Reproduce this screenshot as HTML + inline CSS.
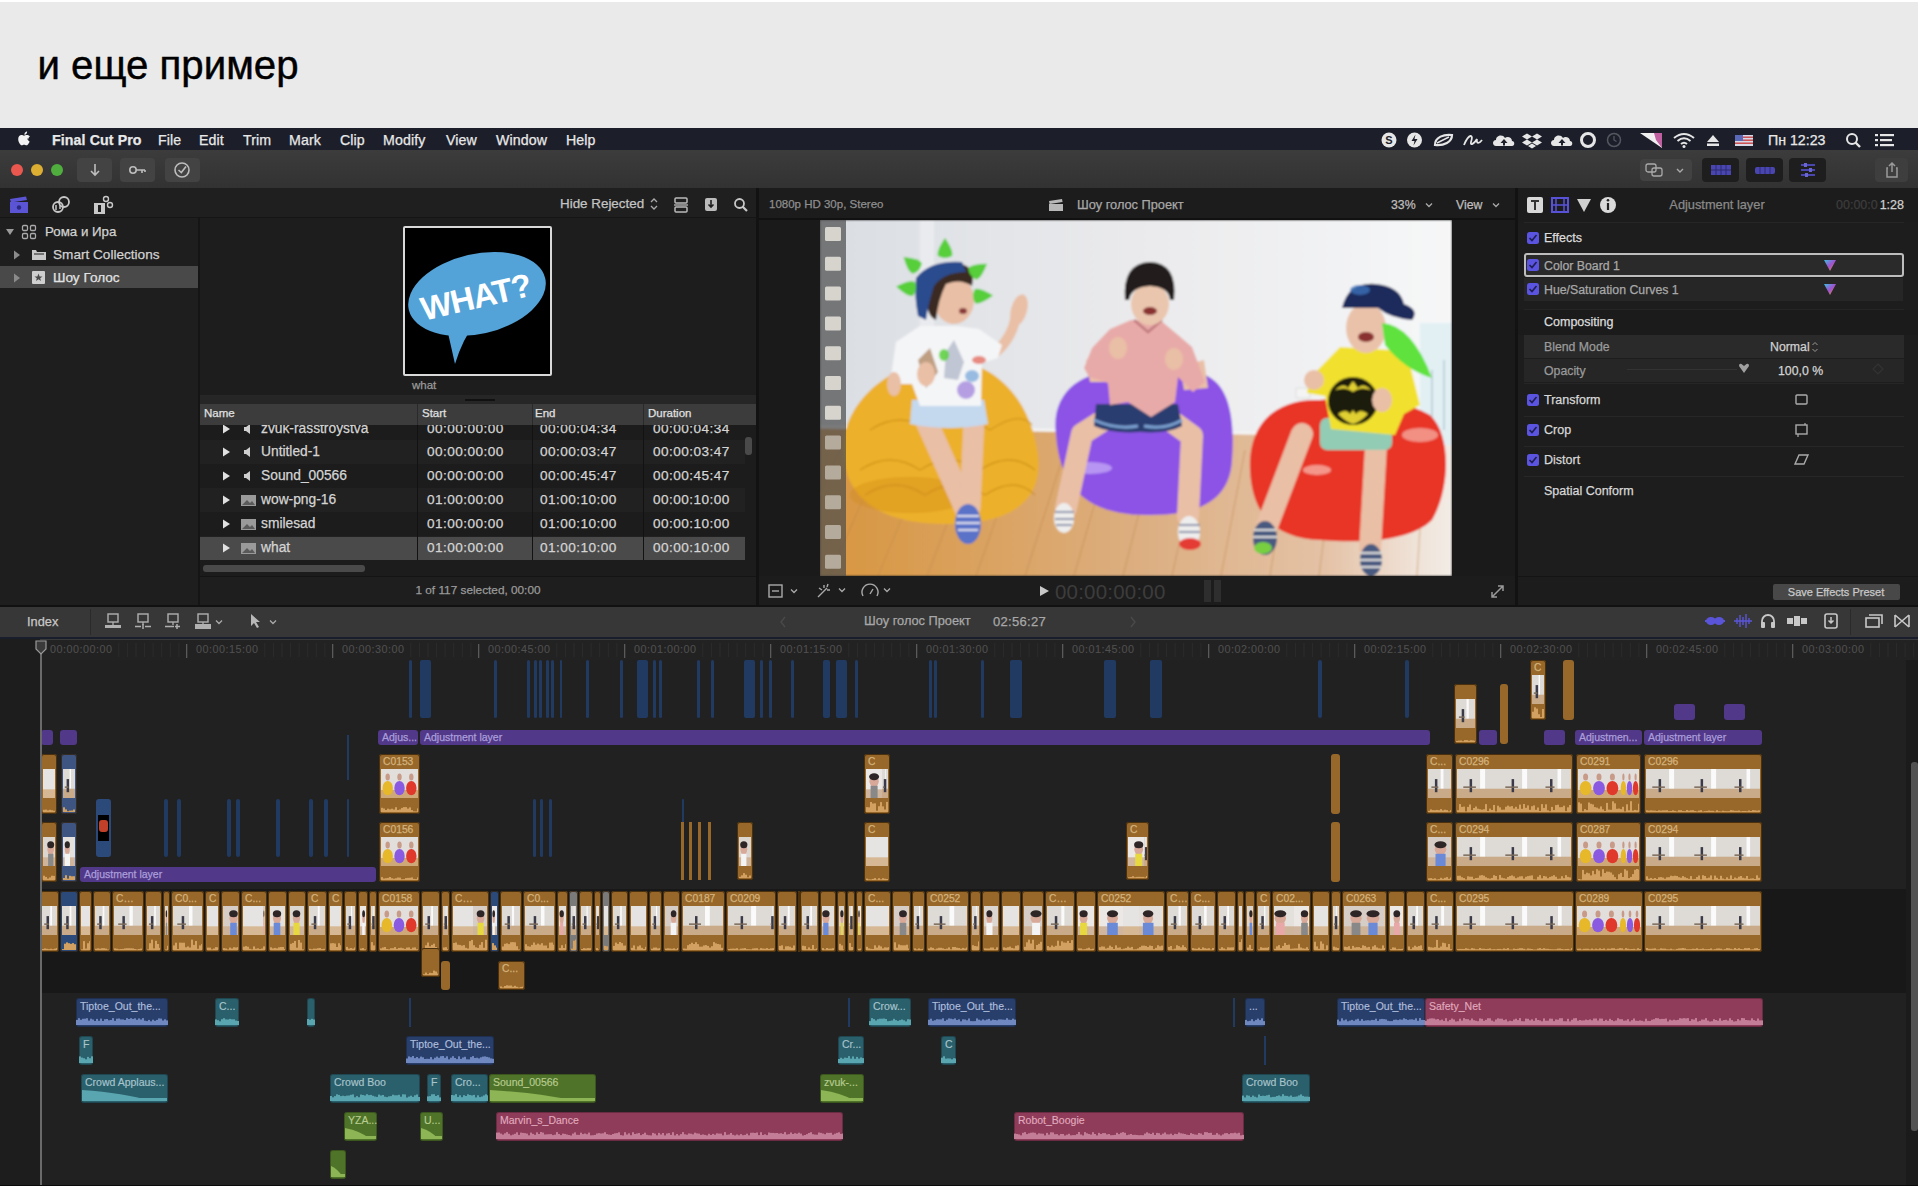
<!DOCTYPE html><html><head><meta charset="utf-8"><style>
*{margin:0;padding:0;box-sizing:border-box}
html,body{width:1922px;height:1188px;overflow:hidden;background:#fff}
body{position:relative;font-family:"Liberation Sans",sans-serif}
div{position:absolute}
.t{white-space:nowrap;line-height:1;-webkit-text-stroke:0.25px currentColor}

</style></head><body>
<div style="left:0px;top:2px;width:1918px;height:126px;background:#eaeaea"></div>
<div class="t hd" style="left:37.5px;top:45.5px;font-size:40.2px;color:#000;-webkit-text-stroke:0.45px #000">и еще пример</div>
<div style="left:0px;top:128px;width:1918px;height:1058px;background:#1e1e1e"></div>
<div style="left:0px;top:128px;width:1918px;height:22px;background:#1c1f2a"></div>
<svg style="position:absolute;left:17px;top:130px;" width="16" height="18" viewBox="0 0 16 18"><path d="M11.2 9.6c0-2 1.6-2.9 1.7-3-0.9-1.4-2.4-1.6-2.9-1.6-1.2-0.1-2.4 0.7-3 0.7-0.6 0-1.6-0.7-2.6-0.7C2.9 5 1.2 6.3 1.2 9c0 1.7 0.6 3.4 1.4 4.5 0.7 1 1.3 1.8 2.2 1.8 0.9 0 1.200-0.6 2.300-0.6 1.1 0 1.400 0.6 2.300 0.6 1 0 1.600-0.9 2.200-1.800 0.700-1 1-2 1-2.100-0.100 0-2.400-0.900-2.400-3.600zM9.4 3.700c0.500-0.600 0.800-1.400 0.700-2.200-0.700 0-1.500 0.500-2 1.100-0.400 0.500-0.800 1.300-0.700 2.100 0.800 0.100 1.500-0.400 2-1z" fill="#f2f2f2"/></svg>
<div class="t" style="left:52px;top:132.5px;font-size:14.2px;color:#e8e8e8;font-weight:bold;letter-spacing:0.1px">Final Cut Pro</div>
<div class="t" style="left:158px;top:132.5px;font-size:14.2px;color:#e8e8e8;font-weight:normal;letter-spacing:0.1px">File</div>
<div class="t" style="left:199px;top:132.5px;font-size:14.2px;color:#e8e8e8;font-weight:normal;letter-spacing:0.1px">Edit</div>
<div class="t" style="left:243px;top:132.5px;font-size:14.2px;color:#e8e8e8;font-weight:normal;letter-spacing:0.1px">Trim</div>
<div class="t" style="left:289px;top:132.5px;font-size:14.2px;color:#e8e8e8;font-weight:normal;letter-spacing:0.1px">Mark</div>
<div class="t" style="left:340px;top:132.5px;font-size:14.2px;color:#e8e8e8;font-weight:normal;letter-spacing:0.1px">Clip</div>
<div class="t" style="left:383px;top:132.5px;font-size:14.2px;color:#e8e8e8;font-weight:normal;letter-spacing:0.1px">Modify</div>
<div class="t" style="left:446px;top:132.5px;font-size:14.2px;color:#e8e8e8;font-weight:normal;letter-spacing:0.1px">View</div>
<div class="t" style="left:496px;top:132.5px;font-size:14.2px;color:#e8e8e8;font-weight:normal;letter-spacing:0.1px">Window</div>
<div class="t" style="left:566px;top:132.5px;font-size:14.2px;color:#e8e8e8;font-weight:normal;letter-spacing:0.1px">Help</div>
<svg style="position:absolute;left:1378px;top:131px;" width="22" height="18" viewBox="0 0 22 18"><circle cx="11" cy="9" r="7.5" fill="#e6e6e6"/><text x="11" y="13" font-size="11" font-weight="bold" text-anchor="middle" fill="#1c1f2a" font-family="Liberation Sans">S</text></svg>
<svg style="position:absolute;left:1404px;top:131px;" width="22" height="18" viewBox="0 0 22 18"><circle cx="10.5" cy="9" r="7.5" fill="#e6e6e6"/><path d="M11.5 3.5 L7.5 10 H10.5 L9.5 14.5 L13.5 8 H10.5 Z" fill="#1c1f2a"/></svg>
<svg style="position:absolute;left:1432px;top:131px;" width="24" height="18" viewBox="0 0 24 18"><path d="M3 14 C3 6 12 3 20 4 C20 11 12 15 3 14 Z" fill="none" stroke="#e6e6e6" stroke-width="2.2"/><path d="M5 12 L17 6" stroke="#e6e6e6" stroke-width="1.5"/></svg>
<svg style="position:absolute;left:1461px;top:131px;" width="24" height="18" viewBox="0 0 24 18"><path d="M3 14 C8 2 13 3 10 11 C9 15 13 13 16 8 C15 13 18 13 21 9" fill="none" stroke="#e6e6e6" stroke-width="1.8"/></svg>
<svg style="position:absolute;left:1491px;top:131px;" width="26" height="18" viewBox="0 0 26 18"><path d="M5 15 C1 15 1 9 5 9 C5 4 12 3 14 7 C16 5 21 6 21 10 C24 10 24 15 21 15 Z" fill="#e6e6e6"/><path d="M13 8 L9.5 12 H12 V14.5 H14 V12 H16.5 Z" fill="#1c1f2a"/></svg>
<svg style="position:absolute;left:1521px;top:131px;" width="22" height="18" viewBox="0 0 22 18"><path d="M6 2.5 L11 5.5 L6 8.5 L1 5.5 Z M16 2.5 L21 5.5 L16 8.5 L11 5.5 Z M6 8.5 L11 11.5 L6 14.5 L1 11.5 Z M16 8.5 L21 11.5 L16 14.5 L11 11.5 Z M11 12.5 L15 15 L11 17.5 L7 15 Z" fill="#e6e6e6"/></svg>
<svg style="position:absolute;left:1549px;top:131px;" width="26" height="18" viewBox="0 0 26 18"><path d="M5 15 C1 15 1 9 5 9 C5 4 12 3 14 7 C16 5 21 6 21 10 C24 10 24 15 21 15 Z" fill="#e6e6e6"/><path d="M13 8 L9.5 12 H12 V14.5 H14 V12 H16.5 Z" fill="#1c1f2a"/></svg>
<svg style="position:absolute;left:1578px;top:130px;" width="20" height="20" viewBox="0 0 20 20"><circle cx="10" cy="10" r="6.5" fill="none" stroke="#e6e6e6" stroke-width="3"/></svg>
<svg style="position:absolute;left:1604px;top:130px;" width="20" height="20" viewBox="0 0 20 20"><circle cx="10" cy="10" r="6.5" fill="none" stroke="#55575e" stroke-width="1.5"/><path d="M10 6 V10 L12.5 11.5" stroke="#55575e" stroke-width="1.3" fill="none"/></svg>
<svg style="position:absolute;left:1638px;top:130px;" width="28" height="20" viewBox="0 0 28 20"><path d="M2 3 L24 3 L24 18 Z" fill="#f0f0f0"/><path d="M16 3 L24 3 L24 18 L18 10 Z" fill="#c060a0"/></svg>
<svg style="position:absolute;left:1672px;top:131px;" width="24" height="18" viewBox="0 0 24 18"><path d="M2 7 Q12 -1 22 7" fill="none" stroke="#e6e6e6" stroke-width="2"/><path d="M5.5 10 Q12 4.5 18.5 10" fill="none" stroke="#e6e6e6" stroke-width="2"/><path d="M9 13 Q12 10.5 15 13" fill="none" stroke="#e6e6e6" stroke-width="2"/><circle cx="12" cy="15.5" r="1.5" fill="#e6e6e6"/></svg>
<svg style="position:absolute;left:1704px;top:131px;" width="18" height="18" viewBox="0 0 18 18"><path d="M9 4 L15 11 H3 Z" fill="#e6e6e6"/><rect x="3" y="12.5" width="12" height="2.5" fill="#e6e6e6"/></svg>
<svg style="position:absolute;left:1733px;top:132px;" width="22" height="16" viewBox="0 0 22 16"><rect x="2" y="3" width="18" height="11" fill="#d8d8e8"/><rect x="2" y="3" width="8" height="6" fill="#5a6ab8"/><rect x="10" y="4.5" width="10" height="1.4" fill="#c44"/><rect x="10" y="7.5" width="10" height="1.4" fill="#c44"/><rect x="2" y="10.5" width="18" height="1.4" fill="#c44"/></svg>
<div class="t" style="left:1768px;top:133.0px;font-size:14.2px;color:#e8e8e8;font-weight:normal;">Пн 12:23</div>
<svg style="position:absolute;left:1844px;top:131px;" width="20" height="18" viewBox="0 0 20 18"><circle cx="8" cy="8" r="5" fill="none" stroke="#e6e6e6" stroke-width="2"/><path d="M11.5 11.5 L16 16" stroke="#e6e6e6" stroke-width="2.4"/></svg>
<svg style="position:absolute;left:1874px;top:132px;" width="22" height="16" viewBox="0 0 22 16"><rect x="1" y="2" width="3" height="2.2" fill="#e6e6e6"/><rect x="6" y="2" width="14" height="2.2" fill="#e6e6e6"/><rect x="1" y="7" width="3" height="2.2" fill="#e6e6e6"/><rect x="6" y="7" width="12" height="2.2" fill="#e6e6e6"/><rect x="1" y="12" width="3" height="2.2" fill="#e6e6e6"/><rect x="6" y="12" width="14" height="2.2" fill="#e6e6e6"/></svg>
<div style="left:0px;top:150px;width:1918px;height:38px;background:linear-gradient(#3c3c3c,#323232)"></div>
<div style="left:11px;top:164px;width:12px;height:12px;background:#e9574f;border-radius:50%"></div>
<div style="left:31px;top:164px;width:12px;height:12px;background:#dcae32;border-radius:50%"></div>
<div style="left:51px;top:164px;width:12px;height:12px;background:#4fae3e;border-radius:50%"></div>
<div style="left:77px;top:158px;width:35px;height:24px;background:#434343;border-radius:4px"></div>
<div style="left:120px;top:158px;width:35px;height:24px;background:#434343;border-radius:4px"></div>
<div style="left:165px;top:158px;width:35px;height:24px;background:#434343;border-radius:4px"></div>
<svg style="position:absolute;left:85px;top:160px;" width="20" height="20" viewBox="0 0 20 20"><path d="M10 4 V15 M6 11 L10 15 L14 11" fill="none" stroke="#bdbdbd" stroke-width="1.6"/></svg>
<svg style="position:absolute;left:127px;top:160px;" width="22" height="20" viewBox="0 0 22 20"><circle cx="6" cy="10" r="3.2" fill="none" stroke="#bdbdbd" stroke-width="1.6"/><path d="M9 10 H18 M15 10 V13 M18 10 V12" fill="none" stroke="#bdbdbd" stroke-width="1.6"/></svg>
<svg style="position:absolute;left:172px;top:160px;" width="20" height="20" viewBox="0 0 20 20"><circle cx="10" cy="10" r="7" fill="none" stroke="#bdbdbd" stroke-width="1.6"/><path d="M6.5 10 L9.3 12.5 L14 6.5" fill="none" stroke="#bdbdbd" stroke-width="1.6"/></svg>
<div style="left:1640px;top:159px;width:52px;height:22px;background:#424242;border-radius:4px"></div>
<svg style="position:absolute;left:1644px;top:161px;" width="24" height="18" viewBox="0 0 24 18"><rect x="2" y="3" width="10" height="8" rx="2" fill="none" stroke="#aaa" stroke-width="1.3"/><rect x="8" y="7" width="10" height="8" rx="2" fill="none" stroke="#aaa" stroke-width="1.3"/></svg>
<svg style="position:absolute;left:1673px;top:163px;" width="14" height="14" viewBox="0 0 14 14"><path d="M4 6 L7 9 L10 6" fill="none" stroke="#aaa" stroke-width="1.4"/></svg>
<div style="left:1702px;top:158px;width:37px;height:24px;background:#1e1e1e;border-radius:4px"></div>
<div style="left:1746px;top:158px;width:37px;height:24px;background:#1e1e1e;border-radius:4px"></div>
<div style="left:1789px;top:158px;width:37px;height:24px;background:#1e1e1e;border-radius:4px"></div>
<svg style="position:absolute;left:1708px;top:162px;" width="26" height="16" viewBox="0 0 26 16"><rect x="3" y="3" width="20" height="10" fill="#4a46b0"/><path d="M3 8 H23 M8 3 V13 M13 3 V13 M18 3 V13" stroke="#2b2a70" stroke-width="1"/></svg>
<svg style="position:absolute;left:1752px;top:162px;" width="26" height="16" viewBox="0 0 26 16"><rect x="3" y="5" width="20" height="7" rx="2" fill="#4a46b0"/><path d="M8 5 V12 M13 5 V12 M18 5 V12" stroke="#2b2a70" stroke-width="1"/></svg>
<svg style="position:absolute;left:1795px;top:161px;" width="26" height="18" viewBox="0 0 26 18"><path d="M6 4 H20 M6 9 H20 M6 14 H20" stroke="#4a46b0" stroke-width="2.2"/><rect x="9" y="2" width="3" height="4" fill="#6a66d0"/><rect x="14" y="7" width="3" height="4" fill="#6a66d0"/><rect x="10" y="12" width="3" height="4" fill="#6a66d0"/></svg>
<div style="left:1875px;top:158px;width:33px;height:24px;background:#3e3e3e;border-radius:4px"></div>
<svg style="position:absolute;left:1882px;top:160px;" width="20" height="20" viewBox="0 0 20 20"><path d="M6 8 H5 V17 H15 V8 H14 M10 3 V12 M7 6 L10 3 L13 6" fill="none" stroke="#9a9a9a" stroke-width="1.5"/></svg>
<div style="left:0px;top:188px;width:757px;height:30px;background:#1f1f1f"></div>
<div style="left:0px;top:218px;width:198px;height:387px;background:#1e1e1e"></div>
<div style="left:198px;top:218px;width:2px;height:387px;background:#151515"></div>
<div style="left:200px;top:218px;width:556px;height:387px;background:#1d1d1d"></div>
<div style="left:756px;top:188px;width:3px;height:418px;background:#121212"></div>
<div style="left:759px;top:188px;width:756px;height:30px;background:#1c1c1c"></div>
<div style="left:759px;top:218px;width:756px;height:358px;background:#1a1a1a"></div>
<div style="left:759px;top:576px;width:756px;height:29px;background:#1c1c1c"></div>
<div style="left:1515px;top:188px;width:3px;height:418px;background:#121212"></div>
<div style="left:1518px;top:188px;width:400px;height:34px;background:#1c1c1c"></div>
<div style="left:1518px;top:222px;width:400px;height:354px;background:#1d1d1d"></div>
<div style="left:1518px;top:576px;width:400px;height:29px;background:#1c1c1c"></div>
<div style="left:0px;top:605px;width:1918px;height:2px;background:#111"></div>
<div style="left:0px;top:607px;width:1918px;height:30px;background:#373737"></div>
<div style="left:0px;top:637px;width:1918px;height:2px;background:#1a1d2c"></div>
<div style="left:0px;top:639px;width:1918px;height:21px;background:#222"></div>
<div style="left:0px;top:660px;width:1918px;height:526px;background:#1f1f1f"></div>
<svg style="position:absolute;left:8px;top:195px;" width="22" height="20" viewBox="0 0 22 20"><rect x="2" y="7" width="18" height="11" fill="#5b55d6"/><path d="M2 4 L18 1.5 L19 5 L3 7.5 Z" fill="#5b55d6"/><circle cx="11" cy="12.5" r="2.2" fill="#2a2a80"/></svg>
<svg style="position:absolute;left:50px;top:194px;" width="22" height="22" viewBox="0 0 22 22"><circle cx="8" cy="13" r="5" fill="none" stroke="#c8c8c8" stroke-width="1.8"/><circle cx="14" cy="8" r="5" fill="none" stroke="#c8c8c8" stroke-width="1.8"/><path d="M6 11 V16 M10 11 V15" stroke="#c8c8c8" stroke-width="1.5"/></svg>
<svg style="position:absolute;left:92px;top:194px;" width="22" height="22" viewBox="0 0 22 22"><rect x="2" y="9" width="11" height="11" fill="#c8c8c8"/><rect x="6" y="11" width="3" height="7" fill="#1f1f1f"/><circle cx="14" cy="5" r="2.5" fill="none" stroke="#c8c8c8" stroke-width="1.4"/><circle cx="18" cy="11" r="2.5" fill="none" stroke="#c8c8c8" stroke-width="1.4"/></svg>
<div class="t" style="left:560px;top:197.2px;font-size:13.4px;color:#c4c4c4;font-weight:normal;">Hide Rejected</div>
<svg style="position:absolute;left:648px;top:196px;" width="12" height="16" viewBox="0 0 12 16"><path d="M3 6 L6 3 L9 6 M3 10 L6 13 L9 10" fill="none" stroke="#aaa" stroke-width="1.3"/></svg>
<svg style="position:absolute;left:672px;top:196px;" width="18" height="18" viewBox="0 0 18 18"><rect x="3" y="2" width="12" height="5" rx="1" fill="none" stroke="#bbb" stroke-width="1.5"/><rect x="3" y="11" width="12" height="5" rx="1" fill="none" stroke="#bbb" stroke-width="1.5"/><path d="M2 9 H16" stroke="#bbb" stroke-width="1.3"/></svg>
<svg style="position:absolute;left:702px;top:196px;" width="18" height="18" viewBox="0 0 18 18"><rect x="3" y="2" width="12" height="13" rx="2" fill="#bbb"/><path d="M9 4 V11 M6.5 8.5 L9 11 L11.5 8.5" stroke="#1f1f1f" stroke-width="1.6" fill="none"/></svg>
<svg style="position:absolute;left:732px;top:196px;" width="18" height="18" viewBox="0 0 18 18"><circle cx="7.5" cy="7.5" r="4.5" fill="none" stroke="#c8c8c8" stroke-width="1.8"/><path d="M10.5 10.5 L15 15" stroke="#c8c8c8" stroke-width="2.2"/></svg>
<div style="left:0px;top:217px;width:757px;height:1px;background:#151515"></div>
<svg style="position:absolute;left:4px;top:226px;" width="12" height="12" viewBox="0 0 12 12"><path d="M2 3 H10 L6 9 Z" fill="#9a9a9a"/></svg>
<svg style="position:absolute;left:21px;top:224px;" width="17" height="16" viewBox="0 0 17 16"><rect x="1.5" y="1.5" width="5" height="5" rx="1.2" fill="none" stroke="#aaa" stroke-width="1.3"/><rect x="9.5" y="1.5" width="5" height="5" rx="1.2" fill="none" stroke="#aaa" stroke-width="1.3"/><rect x="1.5" y="9.5" width="5" height="5" rx="1.2" fill="none" stroke="#aaa" stroke-width="1.3"/><rect x="9.5" y="9.5" width="5" height="5" rx="1.2" fill="none" stroke="#aaa" stroke-width="1.3"/></svg>
<div class="t" style="left:45px;top:225.2px;font-size:13.3px;color:#d2d2d2;font-weight:normal;">Рома и Ира</div>
<svg style="position:absolute;left:12px;top:249px;" width="10" height="12" viewBox="0 0 10 12"><path d="M2 1.5 L8 6 L2 10.5 Z" fill="#8a8a8a"/></svg>
<svg style="position:absolute;left:31px;top:248px;" width="16" height="13" viewBox="0 0 16 13"><path d="M1 2 H5 L6 4 H15 V12 H1 Z" fill="#c8c8c8"/><path d="M3 6 H13" stroke="#1e1e1e" stroke-width="1"/></svg>
<div class="t" style="left:53px;top:248.0px;font-size:13.6px;color:#d2d2d2;font-weight:normal;">Smart Collections</div>
<div style="left:0px;top:266px;width:198px;height:22px;background:#494949"></div>
<svg style="position:absolute;left:12px;top:272px;" width="10" height="12" viewBox="0 0 10 12"><path d="M2 1.5 L8 6 L2 10.5 Z" fill="#8a8a8a"/></svg>
<svg style="position:absolute;left:31px;top:270px;" width="15" height="15" viewBox="0 0 15 15"><rect x="1" y="1" width="13" height="13" rx="1" fill="#cfcfcf"/><path d="M7.5 3.5 L8.6 6.4 L11.5 6.4 L9.2 8.2 L10 11 L7.5 9.3 L5 11 L5.8 8.2 L3.5 6.4 L6.4 6.4 Z" fill="#4a4a4a"/></svg>
<div class="t" style="left:53px;top:271.0px;font-size:13.6px;color:#e2e2e2;font-weight:normal;">Шоу Голос</div>
<div style="left:403px;top:226px;width:149px;height:150px;background:#000;border:2px solid #d9d9d9;border-radius:2px"></div>
<svg style="position:absolute;left:405px;top:228px;" width="145" height="146" viewBox="0 0 145 146"><g transform="rotate(-13 72 66)"><ellipse cx="72" cy="66" rx="70" ry="40" fill="#54a3d8"/></g><path d="M40 92 Q46 118 50 136 Q58 110 70 96 Z" fill="#54a3d8"/><g transform="rotate(-13 72 66)"><text x="70" y="80" font-family="Liberation Sans" font-weight="bold" font-size="33" fill="#fff" text-anchor="middle" style="letter-spacing:-1px">WHAT?</text></g></svg>
<div class="t" style="left:412px;top:380.3px;font-size:11.5px;color:#9a9a9a;font-weight:normal;">what</div>
<div style="left:200px;top:395px;width:556px;height:9px;background:#262626"></div>
<div style="left:465px;top:399px;width:30px;height:2px;background:#111"></div>
<div style="left:200px;top:404px;width:556px;height:21px;background:#3c3c3c"></div>
<div style="left:417px;top:404px;width:1px;height:21px;background:#2a2a2a"></div>
<div style="left:532px;top:404px;width:1px;height:21px;background:#2a2a2a"></div>
<div style="left:643px;top:404px;width:1px;height:21px;background:#2a2a2a"></div>
<div class="t" style="left:204px;top:408.3px;font-size:11.5px;color:#e0e0e0;font-weight:normal;">Name</div>
<div class="t" style="left:422px;top:408.3px;font-size:11.5px;color:#e0e0e0;font-weight:normal;">Start</div>
<div class="t" style="left:535px;top:408.3px;font-size:11.5px;color:#e0e0e0;font-weight:normal;">End</div>
<div class="t" style="left:648px;top:408.3px;font-size:11.5px;color:#e0e0e0;font-weight:normal;">Duration</div>
<div style="left:200px;top:425px;width:556px;height:152px;background:#1c1c1c"></div>
<div style="left:200px;top:440px;width:545px;height:24px;background:#212121"></div>
<div style="left:200px;top:488px;width:545px;height:24px;background:#212121"></div>
<div style="left:200px;top:536px;width:545px;height:24px;background:#212121"></div>
<div style="left:200px;top:537px;width:545px;height:23px;background:#4a4a4a"></div>
<div style="left:417px;top:425px;width:1px;height:135px;background:#121212"></div>
<div style="left:532px;top:425px;width:1px;height:135px;background:#121212"></div>
<div style="left:643px;top:425px;width:1px;height:135px;background:#121212"></div>
<svg style="position:absolute;left:221px;top:423px;" width="12" height="12" viewBox="0 0 12 12"><path d="M2 1.5 L9 6 L2 10.5 Z" fill="#e0e0e0"/></svg>
<svg style="position:absolute;left:242px;top:423px;" width="12" height="12" viewBox="0 0 12 12"><path d="M2 4 H4 L8 1 V11 L4 8 H2 Z" fill="#cfcfcf"/></svg>
<div class="t" style="left:261px;top:421.8px;font-size:13.8px;color:#d4d4d4;font-weight:normal;">zvuk-rasstroystva</div>
<div class="t" style="left:427px;top:422.0px;font-size:13.6px;color:#d4d4d4;font-weight:normal;letter-spacing:0.45px">00:00:00:00</div>
<div class="t" style="left:540px;top:422.0px;font-size:13.6px;color:#d4d4d4;font-weight:normal;letter-spacing:0.45px">00:00:04:34</div>
<div class="t" style="left:653px;top:422.0px;font-size:13.6px;color:#d4d4d4;font-weight:normal;letter-spacing:0.45px">00:00:04:34</div>
<svg style="position:absolute;left:221px;top:446px;" width="12" height="12" viewBox="0 0 12 12"><path d="M2 1.5 L9 6 L2 10.5 Z" fill="#e0e0e0"/></svg>
<svg style="position:absolute;left:242px;top:446px;" width="12" height="12" viewBox="0 0 12 12"><path d="M2 4 H4 L8 1 V11 L4 8 H2 Z" fill="#cfcfcf"/></svg>
<div class="t" style="left:261px;top:444.8px;font-size:13.8px;color:#d4d4d4;font-weight:normal;">Untitled-1</div>
<div class="t" style="left:427px;top:445.0px;font-size:13.6px;color:#d4d4d4;font-weight:normal;letter-spacing:0.45px">00:00:00:00</div>
<div class="t" style="left:540px;top:445.0px;font-size:13.6px;color:#d4d4d4;font-weight:normal;letter-spacing:0.45px">00:00:03:47</div>
<div class="t" style="left:653px;top:445.0px;font-size:13.6px;color:#d4d4d4;font-weight:normal;letter-spacing:0.45px">00:00:03:47</div>
<svg style="position:absolute;left:221px;top:470px;" width="12" height="12" viewBox="0 0 12 12"><path d="M2 1.5 L9 6 L2 10.5 Z" fill="#e0e0e0"/></svg>
<svg style="position:absolute;left:242px;top:470px;" width="12" height="12" viewBox="0 0 12 12"><path d="M2 4 H4 L8 1 V11 L4 8 H2 Z" fill="#cfcfcf"/></svg>
<div class="t" style="left:261px;top:468.8px;font-size:13.8px;color:#d4d4d4;font-weight:normal;">Sound_00566</div>
<div class="t" style="left:427px;top:469.0px;font-size:13.6px;color:#d4d4d4;font-weight:normal;letter-spacing:0.45px">00:00:00:00</div>
<div class="t" style="left:540px;top:469.0px;font-size:13.6px;color:#d4d4d4;font-weight:normal;letter-spacing:0.45px">00:00:45:47</div>
<div class="t" style="left:653px;top:469.0px;font-size:13.6px;color:#d4d4d4;font-weight:normal;letter-spacing:0.45px">00:00:45:47</div>
<svg style="position:absolute;left:221px;top:494px;" width="12" height="12" viewBox="0 0 12 12"><path d="M2 1.5 L9 6 L2 10.5 Z" fill="#e0e0e0"/></svg>
<svg style="position:absolute;left:240px;top:494px;" width="17" height="13" viewBox="0 0 17 13"><rect x="1" y="1" width="15" height="11" fill="#9a9a9a"/><path d="M2 11 L7 6 L10 9 L12 7 L15 11 Z" fill="#5a5a5a"/></svg>
<div class="t" style="left:261px;top:492.8px;font-size:13.8px;color:#d4d4d4;font-weight:normal;">wow-png-16</div>
<div class="t" style="left:427px;top:493.0px;font-size:13.6px;color:#d4d4d4;font-weight:normal;letter-spacing:0.45px">01:00:00:00</div>
<div class="t" style="left:540px;top:493.0px;font-size:13.6px;color:#d4d4d4;font-weight:normal;letter-spacing:0.45px">01:00:10:00</div>
<div class="t" style="left:653px;top:493.0px;font-size:13.6px;color:#d4d4d4;font-weight:normal;letter-spacing:0.45px">00:00:10:00</div>
<svg style="position:absolute;left:221px;top:518px;" width="12" height="12" viewBox="0 0 12 12"><path d="M2 1.5 L9 6 L2 10.5 Z" fill="#e0e0e0"/></svg>
<svg style="position:absolute;left:240px;top:518px;" width="17" height="13" viewBox="0 0 17 13"><rect x="1" y="1" width="15" height="11" fill="#9a9a9a"/><path d="M2 11 L7 6 L10 9 L12 7 L15 11 Z" fill="#5a5a5a"/></svg>
<div class="t" style="left:261px;top:516.8px;font-size:13.8px;color:#d4d4d4;font-weight:normal;">smilesad</div>
<div class="t" style="left:427px;top:517.0px;font-size:13.6px;color:#d4d4d4;font-weight:normal;letter-spacing:0.45px">01:00:00:00</div>
<div class="t" style="left:540px;top:517.0px;font-size:13.6px;color:#d4d4d4;font-weight:normal;letter-spacing:0.45px">01:00:10:00</div>
<div class="t" style="left:653px;top:517.0px;font-size:13.6px;color:#d4d4d4;font-weight:normal;letter-spacing:0.45px">00:00:10:00</div>
<svg style="position:absolute;left:221px;top:542px;" width="12" height="12" viewBox="0 0 12 12"><path d="M2 1.5 L9 6 L2 10.5 Z" fill="#e0e0e0"/></svg>
<svg style="position:absolute;left:240px;top:542px;" width="17" height="13" viewBox="0 0 17 13"><rect x="1" y="1" width="15" height="11" fill="#9a9a9a"/><path d="M2 11 L7 6 L10 9 L12 7 L15 11 Z" fill="#5a5a5a"/></svg>
<div class="t" style="left:261px;top:540.8px;font-size:13.8px;color:#d4d4d4;font-weight:normal;">what</div>
<div class="t" style="left:427px;top:541.0px;font-size:13.6px;color:#d4d4d4;font-weight:normal;letter-spacing:0.45px">01:00:00:00</div>
<div class="t" style="left:540px;top:541.0px;font-size:13.6px;color:#d4d4d4;font-weight:normal;letter-spacing:0.45px">01:00:10:00</div>
<div class="t" style="left:653px;top:541.0px;font-size:13.6px;color:#d4d4d4;font-weight:normal;letter-spacing:0.45px">00:00:10:00</div>
<div style="left:200px;top:404px;width:556px;height:21px;background:#3c3c3c"></div>
<div style="left:417px;top:404px;width:1px;height:21px;background:#2a2a2a"></div>
<div style="left:532px;top:404px;width:1px;height:21px;background:#2a2a2a"></div>
<div style="left:643px;top:404px;width:1px;height:21px;background:#2a2a2a"></div>
<div class="t" style="left:204px;top:408.3px;font-size:11.5px;color:#e0e0e0;font-weight:normal;">Name</div>
<div class="t" style="left:422px;top:408.3px;font-size:11.5px;color:#e0e0e0;font-weight:normal;">Start</div>
<div class="t" style="left:535px;top:408.3px;font-size:11.5px;color:#e0e0e0;font-weight:normal;">End</div>
<div class="t" style="left:648px;top:408.3px;font-size:11.5px;color:#e0e0e0;font-weight:normal;">Duration</div>
<div style="left:745px;top:437px;width:7px;height:18px;background:#4a4a4a;border-radius:3px"></div>
<div style="left:203px;top:565px;width:162px;height:7px;background:#4a4a4a;border-radius:3px"></div>
<div style="left:200px;top:576px;width:556px;height:1px;background:#141414"></div>
<div style="left:200px;top:577px;width:556px;height:28px;background:#1e1e1e"></div>
<div class="t" style="left:178px;width:600px;text-align:center;top:585.0px;font-size:11.8px;color:#9a9a9a;font-weight:normal;">1 of 117 selected, 00:00</div>
<div class="t" style="left:769px;top:199.3px;font-size:11.5px;color:#8e8e8e;font-weight:normal;">1080p HD 30p, Stereo</div>
<svg style="position:absolute;left:1046px;top:197px;" width="20" height="16" viewBox="0 0 20 16"><rect x="3" y="7" width="14" height="7" fill="#b8b8b8"/><path d="M3 4 L16 2 L16.6 5 L3.6 7 Z" fill="#b8b8b8"/></svg>
<div class="t" style="left:1077px;top:199.2px;font-size:12.8px;color:#a8a8a8;font-weight:normal;">Шоу голос Проект</div>
<div class="t" style="left:1391px;top:198.6px;font-size:12.3px;color:#bdbdbd;font-weight:normal;">33%</div>
<svg style="position:absolute;left:1423px;top:199px;" width="12" height="12" viewBox="0 0 12 12"><path d="M3 4.5 L6 7.5 L9 4.5" fill="none" stroke="#aaa" stroke-width="1.3"/></svg>
<div class="t" style="left:1456px;top:198.6px;font-size:12.3px;color:#bdbdbd;font-weight:normal;">View</div>
<svg style="position:absolute;left:1490px;top:199px;" width="12" height="12" viewBox="0 0 12 12"><path d="M3 4.5 L6 7.5 L9 4.5" fill="none" stroke="#aaa" stroke-width="1.3"/></svg>
<div style="left:759px;top:218px;width:756px;height:2px;background:#111"></div>
<svg style="position:absolute;left:820px;top:220px;" width="632" height="356" viewBox="0 0 632 356"><defs><linearGradient id="wall" x1="0" y1="0" x2="1" y2="0"><stop offset="0" stop-color="#dadee3"/><stop offset="0.5" stop-color="#eaeaec"/><stop offset="1" stop-color="#f6f7f8"/></linearGradient><linearGradient id="floor" x1="0" y1="0" x2="1" y2="0"><stop offset="0" stop-color="#d8963e"/><stop offset="0.5" stop-color="#dcae80"/><stop offset="0.8" stop-color="#e4c2a6"/><stop offset="0.93" stop-color="#efe0d4"/><stop offset="1" stop-color="#f2ece6"/></linearGradient><filter id="soft"><feGaussianBlur stdDeviation="0.9"/></filter></defs><g filter="url(#soft)"><rect x="0" y="0" width="632" height="356" fill="url(#wall)"/><rect x="100" y="0" width="14" height="215" fill="#eef0f2" opacity="0.7"/><path d="M0 207 L632 216 L632 356 L0 356 Z" fill="url(#floor)"/><path d="M0 207 L632 216" stroke="#f4f4f4" stroke-width="3"/><path d="M20 230 L-40 356" stroke="#c08850" stroke-width="1.2" opacity="0.5"/><path d="M65 230 L9 356" stroke="#c08850" stroke-width="1.2" opacity="0.5"/><path d="M110 230 L58 356" stroke="#c08850" stroke-width="1.2" opacity="0.5"/><path d="M155 230 L107 356" stroke="#c08850" stroke-width="1.2" opacity="0.5"/><path d="M200 230 L156 356" stroke="#c08850" stroke-width="1.2" opacity="0.5"/><path d="M245 230 L205 356" stroke="#c08850" stroke-width="1.2" opacity="0.5"/><path d="M290 230 L254 356" stroke="#c08850" stroke-width="1.2" opacity="0.5"/><path d="M335 230 L303 356" stroke="#c08850" stroke-width="1.2" opacity="0.5"/><path d="M380 230 L352 356" stroke="#c08850" stroke-width="1.2" opacity="0.5"/><path d="M425 230 L401 356" stroke="#c08850" stroke-width="1.2" opacity="0.5"/><path d="M470 230 L450 356" stroke="#c08850" stroke-width="1.2" opacity="0.5"/><path d="M515 230 L499 356" stroke="#c08850" stroke-width="1.2" opacity="0.5"/><path d="M560 230 L548 356" stroke="#c08850" stroke-width="1.2" opacity="0.5"/><path d="M605 230 L597 356" stroke="#c08850" stroke-width="1.2" opacity="0.5"/><rect x="600" y="103" width="32" height="122" fill="#e2f0f4"/><path d="M612 150 V205 M624 140 V210" stroke="#b8c8d0" stroke-width="1.5"/><rect x="476" y="168" width="14" height="10" fill="#f4f4f4" stroke="#ccc" stroke-width="0.6"/><path d="M24 238 C18 190 60 150 110 140 C170 134 210 175 218 235 C224 290 178 305 122 304 C62 303 28 280 24 238 Z" fill="#ecb02a"/><path d="M40 250 Q70 230 100 250 Q130 230 160 250 Q190 230 215 250 M45 275 Q75 255 105 275 Q135 255 165 275 Q195 255 215 275 M50 210 Q80 190 110 210 Q140 190 170 210 Q200 190 212 205" fill="none" stroke="#c98a18" stroke-width="1.3" opacity="0.7"/><ellipse cx="90" cy="275" rx="60" ry="18" fill="#d08a1a" opacity="0.35"/><path d="M236 215 C230 170 265 150 300 152 C330 148 360 148 385 155 C410 165 415 200 412 240 C410 280 380 295 330 295 C270 296 240 270 236 215 Z" fill="#8c52e6"/><ellipse cx="270" cy="248" rx="22" ry="6" fill="#c9b2f6" opacity="0.7"/><path d="M430 250 C428 200 460 178 500 180 C540 176 580 178 610 195 C632 215 630 270 612 300 C590 322 540 323 500 320 C455 318 432 295 430 250 Z" fill="#e83627"/><ellipse cx="600" cy="215" rx="18" ry="7" fill="#f4a89c" opacity="0.8"/><ellipse cx="497" cy="250" rx="14" ry="5" fill="#f6b0a4" opacity="0.8"/><path d="M104 196 L146 290" stroke="#e9bfa6" stroke-width="22" stroke-linecap="round"/><path d="M154 200 L150 288" stroke="#e9bfa6" stroke-width="21" stroke-linecap="round"/><ellipse cx="148" cy="304" rx="13" ry="20" fill="#5a72c8"/><path d="M137 296 H159 M136 303 H160 M138 310 H158" stroke="#dde" stroke-width="2.2"/><path d="M92 180 L164 180 L168 204 Q130 212 90 204 Z" fill="#c4d8ee"/><path d="M176 132 Q192 118 196 96" stroke="#e9bfa6" stroke-width="10" stroke-linecap="round" fill="none"/><ellipse cx="199" cy="90" rx="8" ry="16" fill="#e9bfa6" transform="rotate(15 199 90)"/><path d="M70 164 L76 122 L100 106 L137 106 L159 109 L182 125 L178 138 L162 143 L161 186 L100 186 L92 164 Z" fill="#f4f5f7"/><path d="M98 140 L110 128 L118 152 L106 168 Z" fill="#a87a50" opacity="0.7"/><path d="M126 132 L134 120 L144 142 L138 160 L124 158 Z" fill="#a4acc0" opacity="0.65"/><ellipse cx="146" cy="170" rx="9" ry="9" fill="#9a7ad8" opacity="0.7"/><ellipse cx="159" cy="140" rx="7" ry="4" fill="#e05040" opacity="0.65"/><ellipse cx="152" cy="156" rx="7" ry="6" fill="#4a8ad0" opacity="0.55"/><ellipse cx="74" cy="164" rx="7" ry="12" fill="#e9bfa6"/><ellipse cx="106" cy="154" rx="9" ry="12" fill="#e9bfa6"/><ellipse cx="134" cy="80" rx="20" ry="24" fill="#e9bfa6"/><ellipse cx="143" cy="91" rx="4" ry="3" fill="#8a3a3a"/><path d="M114 62 Q120 42 140 44 Q156 46 152 66 Q140 58 126 64 Q118 80 116 100 Q106 96 108 80 Z" fill="#3b2a22"/><path d="M96 58 Q110 40 142 42 L146 52 Q124 52 114 66 Q108 84 106 100 L98 96 Q94 76 96 58 Z" fill="#2b4c8e"/><path d="M0 -11 Q9 2 7 7 Q0 11 -7 7 Q-9 2 0 -11 Z" fill="#57cf3a" transform="translate(125 29) rotate(0)"/><path d="M0 -11 Q9 2 7 7 Q0 11 -7 7 Q-9 2 0 -11 Z" fill="#57cf3a" transform="translate(92 44) rotate(-50)"/><path d="M0 -11 Q9 2 7 7 Q0 11 -7 7 Q-9 2 0 -11 Z" fill="#57cf3a" transform="translate(87 68) rotate(-82)"/><path d="M0 -11 Q9 2 7 7 Q0 11 -7 7 Q-9 2 0 -11 Z" fill="#57cf3a" transform="translate(158 50) rotate(55)"/><path d="M0 -11 Q9 2 7 7 Q0 11 -7 7 Q-9 2 0 -11 Z" fill="#57cf3a" transform="translate(162 76) rotate(88)"/><ellipse cx="124" cy="135" rx="5" ry="6" fill="#57cf3a" opacity="0.85"/><path d="M284 200 L262 214 L246 288" stroke="#e9bfa6" stroke-width="22" stroke-linecap="round" stroke-linejoin="round" fill="none"/><path d="M350 200 L372 216 L368 296" stroke="#e9bfa6" stroke-width="22" stroke-linecap="round" stroke-linejoin="round" fill="none"/><ellipse cx="244" cy="298" rx="10" ry="15" fill="#eeeeee"/><path d="M235 292 H254 M235 299 H254 M236 305 H252" stroke="#8890a8" stroke-width="2"/><ellipse cx="369" cy="312" rx="11" ry="16" fill="#eeeeee"/><path d="M359 305 H380 M359 312 H380" stroke="#8890a8" stroke-width="2"/><ellipse cx="370" cy="324" rx="11" ry="6" fill="#e53a35"/><path d="M276 184 L358 184 L362 206 Q348 214 320 212 Q292 214 274 206 Z" fill="#2b3d70"/><path d="M274 200 Q296 210 318 206 M324 206 Q346 210 362 200" stroke="#7aa0d0" stroke-width="3" fill="none"/><path d="M266 140 L288 132 L292 162 L270 162 Z" fill="#e9bfa6"/><path d="M360 146 L384 140 L388 168 L364 170 Z" fill="#e9bfa6"/><path d="M290 109 L311 100 L340 100 L358 115 L372 127 L385 162 L373 172 L358 157 L355 182 L331 197 L308 182 L290 185 L288 163 L269 157 L264 148 L272 128 Z" fill="#e8aaa8"/><path d="M314 100 L328 112 L342 100" stroke="#c07a7e" stroke-width="2.5" fill="none"/><ellipse cx="298" cy="128" rx="9" ry="11" fill="#e9bfa6"/><ellipse cx="354" cy="139" rx="9" ry="11" fill="#e9bfa6"/><ellipse cx="330" cy="84" rx="19" ry="21" fill="#eac6ae"/><path d="M305 80 Q302 43 330 42 Q358 43 354 80 L350 80 Q349 67 330 66 Q311 67 309 80 Z" fill="#231c1c"/><ellipse cx="330" cy="91" rx="7" ry="4" fill="#8a3030"/><path d="M482 214 L447 306" stroke="#e9bfa6" stroke-width="22" stroke-linecap="round"/><path d="M556 226 L550 330" stroke="#e9bfa6" stroke-width="22" stroke-linecap="round"/><ellipse cx="445" cy="318" rx="12" ry="17" fill="#4a5a80"/><path d="M434 310 H456 M433 317 H457" stroke="#ddd" stroke-width="2"/><ellipse cx="443" cy="328" rx="9" ry="6" fill="#78d040"/><ellipse cx="551" cy="340" rx="11" ry="16" fill="#4a5a80"/><path d="M540 333 H562 M540 340 H562 M541 347 H561" stroke="#ddd" stroke-width="2"/><rect x="500" y="198" width="72" height="32" rx="7" fill="#92ccb4"/><path d="M490 158 L520 127 L571 130 L590 145 L600 185 L584 194 L575 215 L511 209 L505 176 L487 173 Z" fill="#f1e12e"/><ellipse cx="533" cy="181" rx="25" ry="24" fill="#1a1a10"/><path d="M515 170 Q524 162 528 168 L533 161 L538 168 Q543 162 551 170 Q540 166 533 172 Q526 166 515 170 Z" fill="#e0d030"/><path d="M518 194 Q526 188 530 194 L533 190 L536 194 Q540 188 548 194 Q540 202 533 204 Q526 202 518 194 Z" fill="#e0d030"/><ellipse cx="494" cy="160" rx="10" ry="10" fill="#e9bfa6"/><ellipse cx="562" cy="180" rx="10" ry="12" fill="#e9bfa6"/><ellipse cx="546" cy="108" rx="20" ry="25" fill="#eac2aa"/><ellipse cx="546" cy="117" rx="8" ry="5" fill="#8a3030"/><path d="M522 88 Q528 62 555 64 Q580 66 584 84 Q600 90 592 100 Q570 98 558 88 Z" fill="#1f2b5c"/><ellipse cx="540" cy="70" rx="10" ry="5" fill="#3a70b8" opacity="0.8"/><path d="M562 103 Q592 105 612 158 Q585 150 565 125 Z" fill="#5ee23c"/></g><rect x="0" y="0" width="26" height="356" fill="#4e4e4e" opacity="0.72"/><rect x="5" y="7.0" width="16" height="14" rx="1.5" fill="#e0dcd6" opacity="0.92"/><rect x="5" y="36.8" width="16" height="14" rx="1.5" fill="#e0dcd6" opacity="0.92"/><rect x="5" y="66.6" width="16" height="14" rx="1.5" fill="#e0dcd6" opacity="0.92"/><rect x="5" y="96.4" width="16" height="14" rx="1.5" fill="#e0dcd6" opacity="0.92"/><rect x="5" y="126.2" width="16" height="14" rx="1.5" fill="#e0dcd6" opacity="0.92"/><rect x="5" y="156.0" width="16" height="14" rx="1.5" fill="#e0dcd6" opacity="0.92"/><rect x="5" y="185.8" width="16" height="14" rx="1.5" fill="#e0dcd6" opacity="0.92"/><rect x="5" y="215.6" width="16" height="14" rx="1.5" fill="#e0dcd6" opacity="0.6"/><rect x="5" y="245.4" width="16" height="14" rx="1.5" fill="#e0dcd6" opacity="0.6"/><rect x="5" y="275.2" width="16" height="14" rx="1.5" fill="#e0dcd6" opacity="0.6"/><rect x="5" y="305.0" width="16" height="14" rx="1.5" fill="#e0dcd6" opacity="0.6"/><rect x="5" y="334.8" width="16" height="14" rx="1.5" fill="#e0dcd6" opacity="0.6"/></svg>
<svg style="position:absolute;left:767px;top:583px;" width="34" height="16" viewBox="0 0 34 16"><rect x="2" y="2" width="13" height="12" fill="none" stroke="#aaa" stroke-width="1.4"/><path d="M5 8 H12" stroke="#aaa" stroke-width="1.4"/><path d="M24 6.5 L27 9.5 L30 6.5" fill="none" stroke="#aaa" stroke-width="1.3"/></svg>
<svg style="position:absolute;left:815px;top:582px;" width="34" height="18" viewBox="0 0 34 18"><path d="M3 15 L12 6 M9 3 V6 M13 2 L12 5 M15 8 H12 M4 6 L7 8" stroke="#aaa" stroke-width="1.4"/><path d="M24 6.5 L27 9.5 L30 6.5" fill="none" stroke="#aaa" stroke-width="1.3"/></svg>
<svg style="position:absolute;left:860px;top:582px;" width="34" height="18" viewBox="0 0 34 18"><path d="M3 14 A8 8 0 1 1 17 14" fill="none" stroke="#aaa" stroke-width="1.4"/><path d="M10 12 L13 7" stroke="#aaa" stroke-width="1.4"/><path d="M24 6.5 L27 9.5 L30 6.5" fill="none" stroke="#aaa" stroke-width="1.3"/></svg>
<svg style="position:absolute;left:1037px;top:584px;" width="14" height="14" viewBox="0 0 14 14"><path d="M3 2 L12 7 L3 12 Z" fill="#c8c8c8"/></svg>
<div class="t" style="left:1055px;top:581.6px;font-size:20.5px;color:#3c3c3c;font-weight:normal;letter-spacing:0.2px;-webkit-text-stroke:0">00:00:00:00</div>
<div style="left:1204px;top:580px;width:7px;height:22px;background:#2e2e2e"></div>
<div style="left:1214px;top:580px;width:7px;height:22px;background:#2e2e2e"></div>
<svg style="position:absolute;left:1488px;top:582px;" width="22" height="18" viewBox="0 0 22 18"><path d="M4 15 L15 4 M10 4 H15 V9 M4 10 V15 H9" fill="none" stroke="#9a9a9a" stroke-width="1.5"/></svg>
<svg style="position:absolute;left:1525px;top:195px;" width="20" height="20" viewBox="0 0 20 20"><rect x="2" y="2" width="16" height="16" rx="2" fill="#d8d8d8"/><path d="M6 6 H14 M10 6 V15" stroke="#333" stroke-width="2"/></svg>
<svg style="position:absolute;left:1550px;top:195px;" width="20" height="20" viewBox="0 0 20 20"><rect x="2" y="3" width="16" height="14" fill="none" stroke="#5852d8" stroke-width="2"/><path d="M6 3 V17 M14 3 V17 M2 10 H18" stroke="#5852d8" stroke-width="1.5"/></svg>
<svg style="position:absolute;left:1575px;top:195px;" width="18" height="20" viewBox="0 0 18 20"><path d="M2 4 H16 L9 17 Z" fill="#d0d0d0"/></svg>
<svg style="position:absolute;left:1598px;top:195px;" width="20" height="20" viewBox="0 0 20 20"><circle cx="10" cy="10" r="8" fill="#dadada"/><path d="M10 8 V15" stroke="#222" stroke-width="2.2"/><circle cx="10" cy="5.3" r="1.3" fill="#222"/></svg>
<div class="t" style="left:1417px;width:600px;text-align:center;top:199.2px;font-size:12.8px;color:#8a8a8a;font-weight:normal;">Adjustment layer</div>
<div class="t" style="left:1836px;top:199.4px;font-size:12.5px;color:#3c3c3c;font-weight:normal;">00:00:0</div>
<div class="t" style="right:18px;top:199.4px;font-size:12.5px;color:#cfcfcf;font-weight:normal;">1:28</div>
<div style="left:1524px;top:222px;width:380px;height:1px;background:#262626"></div>
<svg style="position:absolute;left:1526px;top:231px;" width="14" height="14" viewBox="0 0 14 14"><rect x="1" y="1" width="12" height="12" rx="2.5" fill="#5a54e0"/><path d="M3.5 7 L6 9.5 L10.5 4" fill="none" stroke="#1e1e50" stroke-width="1.6"/></svg>
<div class="t" style="left:1544px;top:232.4px;font-size:12.5px;color:#dcdcdc;font-weight:normal;">Effects</div>
<div style="left:1524px;top:253px;width:380px;height:24px;background:#2a2a2a;border:2px solid #bdbdbd;border-radius:3px"></div>
<svg style="position:absolute;left:1526px;top:258px;" width="14" height="14" viewBox="0 0 14 14"><rect x="1" y="1" width="12" height="12" rx="2.5" fill="#5a54e0"/><path d="M3.5 7 L6 9.5 L10.5 4" fill="none" stroke="#1e1e50" stroke-width="1.6"/></svg>
<div class="t" style="left:1544px;top:259.6px;font-size:12.3px;color:#a8a8a8;font-weight:normal;">Color Board 1</div>
<div style="left:1524px;top:278px;width:379px;height:23px;background:#262626"></div>
<svg style="position:absolute;left:1526px;top:282px;" width="14" height="14" viewBox="0 0 14 14"><rect x="1" y="1" width="12" height="12" rx="2.5" fill="#5a54e0"/><path d="M3.5 7 L6 9.5 L10.5 4" fill="none" stroke="#1e1e50" stroke-width="1.6"/></svg>
<div class="t" style="left:1544px;top:283.6px;font-size:12.3px;color:#a8a8a8;font-weight:normal;">Hue/Saturation Curves 1</div>
<svg style="position:absolute;left:1822px;top:257px;" width="16" height="16" viewBox="0 0 16 16"><defs><linearGradient id="rg265" x1="0" y1="0" x2="1" y2="1"><stop offset="0" stop-color="#3ac0e0"/><stop offset="0.5" stop-color="#a050d0"/><stop offset="1" stop-color="#e0a030"/></linearGradient></defs><path d="M2 3 L14 3 L8 14 Z" fill="url(#rg265)"/></svg>
<svg style="position:absolute;left:1822px;top:281px;" width="16" height="16" viewBox="0 0 16 16"><defs><linearGradient id="rg289" x1="0" y1="0" x2="1" y2="1"><stop offset="0" stop-color="#3ac0e0"/><stop offset="0.5" stop-color="#a050d0"/><stop offset="1" stop-color="#e0a030"/></linearGradient></defs><path d="M2 3 L14 3 L8 14 Z" fill="url(#rg289)"/></svg>
<div style="left:1524px;top:309px;width:380px;height:1px;background:#252525"></div>
<div style="left:1518px;top:310px;width:400px;height:25px;background:#1b1b1b"></div>
<div class="t" style="left:1544px;top:316.4px;font-size:12.5px;color:#dcdcdc;font-weight:normal;">Compositing</div>
<div style="left:1524px;top:335px;width:380px;height:23px;background:#2a2a2a"></div>
<div class="t" style="left:1544px;top:340.6px;font-size:12.3px;color:#9a9a9a;font-weight:normal;">Blend Mode</div>
<div class="t" style="left:1770px;top:340.6px;font-size:12.3px;color:#d0d0d0;font-weight:normal;">Normal</div>
<svg style="position:absolute;left:1810px;top:340px;" width="10" height="14" viewBox="0 0 10 14"><path d="M2.5 5 L5 2.5 L7.5 5 M2.5 9 L5 11.5 L7.5 9" fill="none" stroke="#999" stroke-width="1"/></svg>
<div style="left:1524px;top:359px;width:380px;height:23px;background:#262626"></div>
<div class="t" style="left:1544px;top:364.6px;font-size:12.3px;color:#9a9a9a;font-weight:normal;">Opacity</div>
<div style="left:1627px;top:369px;width:110px;height:1px;background:#333"></div>
<svg style="position:absolute;left:1738px;top:363px;" width="12" height="12" viewBox="0 0 12 12"><path d="M1 3 Q1 0 3.5 1 L6 3 L8.5 1 Q11 0 11 3 L6 10 Z" fill="#a0a0a0"/></svg>
<div class="t" style="left:1778px;top:364.6px;font-size:12.3px;color:#d4d4d4;font-weight:normal;">100,0 %</div>
<svg style="position:absolute;left:1872px;top:363px;" width="12" height="12" viewBox="0 0 12 12"><path d="M6 1 L11 6 L6 11 L1 6 Z" fill="none" stroke="#333" stroke-width="1.2"/></svg>
<div style="left:1524px;top:383px;width:380px;height:1px;background:#262626"></div>
<svg style="position:absolute;left:1526px;top:393px;" width="14" height="14" viewBox="0 0 14 14"><rect x="1" y="1" width="12" height="12" rx="2.5" fill="#5a54e0"/><path d="M3.5 7 L6 9.5 L10.5 4" fill="none" stroke="#1e1e50" stroke-width="1.6"/></svg>
<div class="t" style="left:1544px;top:394.4px;font-size:12.5px;color:#d8d8d8;font-weight:normal;">Transform</div>
<svg style="position:absolute;left:1793px;top:391px;" width="18" height="18" viewBox="0 0 18 18"><rect x="3" y="4" width="11" height="9" rx="1" fill="none" stroke="#aaa" stroke-width="1.4"/></svg>
<div style="left:1524px;top:416px;width:380px;height:1px;background:#272727"></div>
<svg style="position:absolute;left:1526px;top:423px;" width="14" height="14" viewBox="0 0 14 14"><rect x="1" y="1" width="12" height="12" rx="2.5" fill="#5a54e0"/><path d="M3.5 7 L6 9.5 L10.5 4" fill="none" stroke="#1e1e50" stroke-width="1.6"/></svg>
<div class="t" style="left:1544px;top:424.4px;font-size:12.5px;color:#d8d8d8;font-weight:normal;">Crop</div>
<svg style="position:absolute;left:1793px;top:421px;" width="18" height="18" viewBox="0 0 18 18"><rect x="3" y="4" width="11" height="9" fill="none" stroke="#aaa" stroke-width="1.4"/><path d="M5 13 V16 M12 2 V4" stroke="#aaa" stroke-width="1.2"/></svg>
<div style="left:1524px;top:446px;width:380px;height:1px;background:#272727"></div>
<svg style="position:absolute;left:1526px;top:453px;" width="14" height="14" viewBox="0 0 14 14"><rect x="1" y="1" width="12" height="12" rx="2.5" fill="#5a54e0"/><path d="M3.5 7 L6 9.5 L10.5 4" fill="none" stroke="#1e1e50" stroke-width="1.6"/></svg>
<div class="t" style="left:1544px;top:454.4px;font-size:12.5px;color:#d8d8d8;font-weight:normal;">Distort</div>
<svg style="position:absolute;left:1793px;top:451px;" width="18" height="18" viewBox="0 0 18 18"><path d="M2 13 L6 4 H15 L11 13 Z" fill="none" stroke="#aaa" stroke-width="1.4"/></svg>
<div style="left:1524px;top:476px;width:380px;height:1px;background:#272727"></div>
<div class="t" style="left:1544px;top:485.4px;font-size:12.5px;color:#d8d8d8;font-weight:normal;">Spatial Conform</div>
<div style="left:1518px;top:576px;width:400px;height:1px;background:#141414"></div>
<div style="left:1773px;top:584px;width:127px;height:16px;background:#484848;border-radius:2px"></div>
<div class="t" style="left:1536px;width:600px;text-align:center;top:586.7px;font-size:11px;color:#c8c8c8;font-weight:normal;">Save Effects Preset</div>
<div class="t" style="left:27px;top:616.2px;font-size:12.8px;color:#c8c8c8;font-weight:normal;">Index</div>
<div style="left:90px;top:609px;width:1px;height:26px;background:#2a2a2a"></div>
<svg style="position:absolute;left:104px;top:612px;" width="18" height="18" viewBox="0 0 18 18"><rect x="4" y="2" width="10" height="8" fill="none" stroke="#b0b0b0" stroke-width="1.4"/><path d="M9 10 V13" stroke="#b0b0b0" stroke-width="1.3"/><rect x="1" y="13" width="16" height="3" fill="#b0b0b0"/></svg>
<svg style="position:absolute;left:134px;top:612px;" width="18" height="18" viewBox="0 0 18 18"><rect x="4" y="2" width="10" height="8" fill="none" stroke="#b0b0b0" stroke-width="1.4"/><path d="M9 10 V13" stroke="#b0b0b0" stroke-width="1.3"/><path d="M1 14.5 H7 M11 14.5 H17 M9 12 V17" stroke="#b0b0b0" stroke-width="1.5"/></svg>
<svg style="position:absolute;left:164px;top:612px;" width="18" height="18" viewBox="0 0 18 18"><rect x="4" y="2" width="10" height="8" fill="none" stroke="#b0b0b0" stroke-width="1.4"/><path d="M9 10 V13" stroke="#b0b0b0" stroke-width="1.3"/><path d="M1 14.5 H10 M13 12 V17 M11 14.5 H16" stroke="#b0b0b0" stroke-width="1.5"/></svg>
<svg style="position:absolute;left:194px;top:612px;" width="18" height="18" viewBox="0 0 18 18"><rect x="4" y="2" width="10" height="8" fill="none" stroke="#b0b0b0" stroke-width="1.4"/><path d="M9 10 V13" stroke="#b0b0b0" stroke-width="1.3"/><rect x="1" y="12" width="16" height="5" fill="#b0b0b0"/></svg>
<svg style="position:absolute;left:213px;top:616px;" width="12" height="12" viewBox="0 0 12 12"><path d="M3 4.5 L6 7.5 L9 4.5" fill="none" stroke="#aaa" stroke-width="1.3"/></svg>
<svg style="position:absolute;left:248px;top:612px;" width="14" height="18" viewBox="0 0 14 18"><path d="M3 2 L3 14 L6 11 L9 16 L11 15 L8 10 L12 10 Z" fill="#b8b8b8"/></svg>
<svg style="position:absolute;left:267px;top:616px;" width="12" height="12" viewBox="0 0 12 12"><path d="M3 4.5 L6 7.5 L9 4.5" fill="none" stroke="#aaa" stroke-width="1.3"/></svg>
<svg style="position:absolute;left:778px;top:615px;" width="10" height="14" viewBox="0 0 10 14"><path d="M7 2 L3 7 L7 12" fill="none" stroke="#4a4a4a" stroke-width="1.4"/></svg>
<div class="t" style="left:864px;top:615.2px;font-size:12.8px;color:#a8a8a8;font-weight:normal;">Шоу голос Проект</div>
<div class="t" style="left:993px;top:615.0px;font-size:13px;color:#a8a8a8;font-weight:normal;letter-spacing:0.3px">02:56:27</div>
<svg style="position:absolute;left:1128px;top:615px;" width="10" height="14" viewBox="0 0 10 14"><path d="M3 2 L7 7 L3 12" fill="none" stroke="#4a4a4a" stroke-width="1.4"/></svg>
<svg style="position:absolute;left:1703px;top:613px;" width="24" height="16" viewBox="0 0 24 16"><path d="M2 8 H22" stroke="#5a55d8" stroke-width="2"/><ellipse cx="8" cy="8" rx="5" ry="4" fill="#5a55d8"/><ellipse cx="16" cy="8" rx="5" ry="4" fill="#5a55d8"/></svg>
<svg style="position:absolute;left:1732px;top:612px;" width="22" height="18" viewBox="0 0 22 18"><path d="M2 9 H20 M5 6 V12 M8 3 V15 M11 5 V13 M14 2 V16 M17 6 V12" stroke="#5a55d8" stroke-width="1.4"/></svg>
<svg style="position:absolute;left:1759px;top:612px;" width="18" height="18" viewBox="0 0 18 18"><path d="M3 12 V9 A6 6 0 0 1 15 9 V12" fill="none" stroke="#c8c8c8" stroke-width="1.8"/><rect x="2" y="10" width="4" height="6" rx="1" fill="#c8c8c8"/><rect x="12" y="10" width="4" height="6" rx="1" fill="#c8c8c8"/></svg>
<svg style="position:absolute;left:1786px;top:613px;" width="22" height="16" viewBox="0 0 22 16"><rect x="1" y="5" width="6" height="6" fill="#c8c8c8"/><rect x="8" y="3" width="6" height="10" fill="#c8c8c8"/><rect x="15" y="5" width="6" height="6" fill="#c8c8c8"/></svg>
<svg style="position:absolute;left:1822px;top:612px;" width="18" height="18" viewBox="0 0 18 18"><rect x="3" y="2" width="12" height="14" rx="2" fill="none" stroke="#c8c8c8" stroke-width="1.6"/><path d="M9 5 V11 M6.5 8.5 L9 11 L11.5 8.5" stroke="#c8c8c8" stroke-width="1.5" fill="none"/></svg>
<div style="left:1850px;top:609px;width:1px;height:26px;background:#2a2a2a"></div>
<svg style="position:absolute;left:1864px;top:612px;" width="20" height="18" viewBox="0 0 20 18"><rect x="2" y="6" width="13" height="9" fill="none" stroke="#c8c8c8" stroke-width="1.6"/><path d="M5 3 H18 V12" fill="none" stroke="#c8c8c8" stroke-width="1.6"/></svg>
<svg style="position:absolute;left:1892px;top:612px;" width="20" height="18" viewBox="0 0 20 18"><path d="M3 3 L17 15 M3 15 L17 3 M3 3 V15 M17 3 V15" fill="none" stroke="#c8c8c8" stroke-width="1.6"/></svg>
<svg style="position:absolute;left:0px;top:639px;" width="1918" height="21" viewBox="0 0 1918 21"><rect x="40" y="5" width="1.3" height="14" fill="#5a5a5a"/><rect x="49.6" y="4" width="1" height="14" fill="#2c2c2c"/><rect x="58.2" y="4" width="1" height="14" fill="#2c2c2c"/><rect x="66.8" y="4" width="1" height="14" fill="#2c2c2c"/><rect x="75.4" y="4" width="1" height="14" fill="#2c2c2c"/><rect x="83.9" y="4" width="1" height="14" fill="#2c2c2c"/><rect x="92.5" y="4" width="1" height="14" fill="#2c2c2c"/><rect x="101.1" y="4" width="1" height="14" fill="#2c2c2c"/><rect x="109.7" y="4" width="1" height="14" fill="#2c2c2c"/><rect x="118.3" y="4" width="1" height="14" fill="#2c2c2c"/><rect x="126.9" y="4" width="1" height="14" fill="#2c2c2c"/><rect x="135.5" y="4" width="1" height="14" fill="#2c2c2c"/><rect x="144.1" y="4" width="1" height="14" fill="#2c2c2c"/><rect x="152.6" y="4" width="1" height="14" fill="#2c2c2c"/><rect x="161.2" y="4" width="1" height="14" fill="#2c2c2c"/><rect x="169.8" y="4" width="1" height="14" fill="#2c2c2c"/><rect x="178.4" y="4" width="1" height="14" fill="#2c2c2c"/><rect x="186" y="5" width="1.3" height="14" fill="#5a5a5a"/><rect x="195.6" y="4" width="1" height="14" fill="#2c2c2c"/><rect x="204.2" y="4" width="1" height="14" fill="#2c2c2c"/><rect x="212.8" y="4" width="1" height="14" fill="#2c2c2c"/><rect x="221.4" y="4" width="1" height="14" fill="#2c2c2c"/><rect x="229.9" y="4" width="1" height="14" fill="#2c2c2c"/><rect x="238.5" y="4" width="1" height="14" fill="#2c2c2c"/><rect x="247.1" y="4" width="1" height="14" fill="#2c2c2c"/><rect x="255.7" y="4" width="1" height="14" fill="#2c2c2c"/><rect x="264.3" y="4" width="1" height="14" fill="#2c2c2c"/><rect x="272.9" y="4" width="1" height="14" fill="#2c2c2c"/><rect x="281.5" y="4" width="1" height="14" fill="#2c2c2c"/><rect x="290.1" y="4" width="1" height="14" fill="#2c2c2c"/><rect x="298.6" y="4" width="1" height="14" fill="#2c2c2c"/><rect x="307.2" y="4" width="1" height="14" fill="#2c2c2c"/><rect x="315.8" y="4" width="1" height="14" fill="#2c2c2c"/><rect x="324.4" y="4" width="1" height="14" fill="#2c2c2c"/><rect x="332" y="5" width="1.3" height="14" fill="#5a5a5a"/><rect x="341.6" y="4" width="1" height="14" fill="#2c2c2c"/><rect x="350.2" y="4" width="1" height="14" fill="#2c2c2c"/><rect x="358.8" y="4" width="1" height="14" fill="#2c2c2c"/><rect x="367.4" y="4" width="1" height="14" fill="#2c2c2c"/><rect x="375.9" y="4" width="1" height="14" fill="#2c2c2c"/><rect x="384.5" y="4" width="1" height="14" fill="#2c2c2c"/><rect x="393.1" y="4" width="1" height="14" fill="#2c2c2c"/><rect x="401.7" y="4" width="1" height="14" fill="#2c2c2c"/><rect x="410.3" y="4" width="1" height="14" fill="#2c2c2c"/><rect x="418.9" y="4" width="1" height="14" fill="#2c2c2c"/><rect x="427.5" y="4" width="1" height="14" fill="#2c2c2c"/><rect x="436.1" y="4" width="1" height="14" fill="#2c2c2c"/><rect x="444.6" y="4" width="1" height="14" fill="#2c2c2c"/><rect x="453.2" y="4" width="1" height="14" fill="#2c2c2c"/><rect x="461.8" y="4" width="1" height="14" fill="#2c2c2c"/><rect x="470.4" y="4" width="1" height="14" fill="#2c2c2c"/><rect x="478" y="5" width="1.3" height="14" fill="#5a5a5a"/><rect x="487.6" y="4" width="1" height="14" fill="#2c2c2c"/><rect x="496.2" y="4" width="1" height="14" fill="#2c2c2c"/><rect x="504.8" y="4" width="1" height="14" fill="#2c2c2c"/><rect x="513.4" y="4" width="1" height="14" fill="#2c2c2c"/><rect x="521.9" y="4" width="1" height="14" fill="#2c2c2c"/><rect x="530.5" y="4" width="1" height="14" fill="#2c2c2c"/><rect x="539.1" y="4" width="1" height="14" fill="#2c2c2c"/><rect x="547.7" y="4" width="1" height="14" fill="#2c2c2c"/><rect x="556.3" y="4" width="1" height="14" fill="#2c2c2c"/><rect x="564.9" y="4" width="1" height="14" fill="#2c2c2c"/><rect x="573.5" y="4" width="1" height="14" fill="#2c2c2c"/><rect x="582.1" y="4" width="1" height="14" fill="#2c2c2c"/><rect x="590.6" y="4" width="1" height="14" fill="#2c2c2c"/><rect x="599.2" y="4" width="1" height="14" fill="#2c2c2c"/><rect x="607.8" y="4" width="1" height="14" fill="#2c2c2c"/><rect x="616.4" y="4" width="1" height="14" fill="#2c2c2c"/><rect x="624" y="5" width="1.3" height="14" fill="#5a5a5a"/><rect x="633.6" y="4" width="1" height="14" fill="#2c2c2c"/><rect x="642.2" y="4" width="1" height="14" fill="#2c2c2c"/><rect x="650.8" y="4" width="1" height="14" fill="#2c2c2c"/><rect x="659.4" y="4" width="1" height="14" fill="#2c2c2c"/><rect x="667.9" y="4" width="1" height="14" fill="#2c2c2c"/><rect x="676.5" y="4" width="1" height="14" fill="#2c2c2c"/><rect x="685.1" y="4" width="1" height="14" fill="#2c2c2c"/><rect x="693.7" y="4" width="1" height="14" fill="#2c2c2c"/><rect x="702.3" y="4" width="1" height="14" fill="#2c2c2c"/><rect x="710.9" y="4" width="1" height="14" fill="#2c2c2c"/><rect x="719.5" y="4" width="1" height="14" fill="#2c2c2c"/><rect x="728.1" y="4" width="1" height="14" fill="#2c2c2c"/><rect x="736.6" y="4" width="1" height="14" fill="#2c2c2c"/><rect x="745.2" y="4" width="1" height="14" fill="#2c2c2c"/><rect x="753.8" y="4" width="1" height="14" fill="#2c2c2c"/><rect x="762.4" y="4" width="1" height="14" fill="#2c2c2c"/><rect x="770" y="5" width="1.3" height="14" fill="#5a5a5a"/><rect x="779.6" y="4" width="1" height="14" fill="#2c2c2c"/><rect x="788.2" y="4" width="1" height="14" fill="#2c2c2c"/><rect x="796.8" y="4" width="1" height="14" fill="#2c2c2c"/><rect x="805.4" y="4" width="1" height="14" fill="#2c2c2c"/><rect x="813.9" y="4" width="1" height="14" fill="#2c2c2c"/><rect x="822.5" y="4" width="1" height="14" fill="#2c2c2c"/><rect x="831.1" y="4" width="1" height="14" fill="#2c2c2c"/><rect x="839.7" y="4" width="1" height="14" fill="#2c2c2c"/><rect x="848.3" y="4" width="1" height="14" fill="#2c2c2c"/><rect x="856.9" y="4" width="1" height="14" fill="#2c2c2c"/><rect x="865.5" y="4" width="1" height="14" fill="#2c2c2c"/><rect x="874.1" y="4" width="1" height="14" fill="#2c2c2c"/><rect x="882.6" y="4" width="1" height="14" fill="#2c2c2c"/><rect x="891.2" y="4" width="1" height="14" fill="#2c2c2c"/><rect x="899.8" y="4" width="1" height="14" fill="#2c2c2c"/><rect x="908.4" y="4" width="1" height="14" fill="#2c2c2c"/><rect x="916" y="5" width="1.3" height="14" fill="#5a5a5a"/><rect x="925.6" y="4" width="1" height="14" fill="#2c2c2c"/><rect x="934.2" y="4" width="1" height="14" fill="#2c2c2c"/><rect x="942.8" y="4" width="1" height="14" fill="#2c2c2c"/><rect x="951.4" y="4" width="1" height="14" fill="#2c2c2c"/><rect x="959.9" y="4" width="1" height="14" fill="#2c2c2c"/><rect x="968.5" y="4" width="1" height="14" fill="#2c2c2c"/><rect x="977.1" y="4" width="1" height="14" fill="#2c2c2c"/><rect x="985.7" y="4" width="1" height="14" fill="#2c2c2c"/><rect x="994.3" y="4" width="1" height="14" fill="#2c2c2c"/><rect x="1002.9" y="4" width="1" height="14" fill="#2c2c2c"/><rect x="1011.5" y="4" width="1" height="14" fill="#2c2c2c"/><rect x="1020.1" y="4" width="1" height="14" fill="#2c2c2c"/><rect x="1028.6" y="4" width="1" height="14" fill="#2c2c2c"/><rect x="1037.2" y="4" width="1" height="14" fill="#2c2c2c"/><rect x="1045.8" y="4" width="1" height="14" fill="#2c2c2c"/><rect x="1054.4" y="4" width="1" height="14" fill="#2c2c2c"/><rect x="1062" y="5" width="1.3" height="14" fill="#5a5a5a"/><rect x="1071.6" y="4" width="1" height="14" fill="#2c2c2c"/><rect x="1080.2" y="4" width="1" height="14" fill="#2c2c2c"/><rect x="1088.8" y="4" width="1" height="14" fill="#2c2c2c"/><rect x="1097.4" y="4" width="1" height="14" fill="#2c2c2c"/><rect x="1105.9" y="4" width="1" height="14" fill="#2c2c2c"/><rect x="1114.5" y="4" width="1" height="14" fill="#2c2c2c"/><rect x="1123.1" y="4" width="1" height="14" fill="#2c2c2c"/><rect x="1131.7" y="4" width="1" height="14" fill="#2c2c2c"/><rect x="1140.3" y="4" width="1" height="14" fill="#2c2c2c"/><rect x="1148.9" y="4" width="1" height="14" fill="#2c2c2c"/><rect x="1157.5" y="4" width="1" height="14" fill="#2c2c2c"/><rect x="1166.1" y="4" width="1" height="14" fill="#2c2c2c"/><rect x="1174.6" y="4" width="1" height="14" fill="#2c2c2c"/><rect x="1183.2" y="4" width="1" height="14" fill="#2c2c2c"/><rect x="1191.8" y="4" width="1" height="14" fill="#2c2c2c"/><rect x="1200.4" y="4" width="1" height="14" fill="#2c2c2c"/><rect x="1208" y="5" width="1.3" height="14" fill="#5a5a5a"/><rect x="1217.6" y="4" width="1" height="14" fill="#2c2c2c"/><rect x="1226.2" y="4" width="1" height="14" fill="#2c2c2c"/><rect x="1234.8" y="4" width="1" height="14" fill="#2c2c2c"/><rect x="1243.4" y="4" width="1" height="14" fill="#2c2c2c"/><rect x="1251.9" y="4" width="1" height="14" fill="#2c2c2c"/><rect x="1260.5" y="4" width="1" height="14" fill="#2c2c2c"/><rect x="1269.1" y="4" width="1" height="14" fill="#2c2c2c"/><rect x="1277.7" y="4" width="1" height="14" fill="#2c2c2c"/><rect x="1286.3" y="4" width="1" height="14" fill="#2c2c2c"/><rect x="1294.9" y="4" width="1" height="14" fill="#2c2c2c"/><rect x="1303.5" y="4" width="1" height="14" fill="#2c2c2c"/><rect x="1312.1" y="4" width="1" height="14" fill="#2c2c2c"/><rect x="1320.6" y="4" width="1" height="14" fill="#2c2c2c"/><rect x="1329.2" y="4" width="1" height="14" fill="#2c2c2c"/><rect x="1337.8" y="4" width="1" height="14" fill="#2c2c2c"/><rect x="1346.4" y="4" width="1" height="14" fill="#2c2c2c"/><rect x="1354" y="5" width="1.3" height="14" fill="#5a5a5a"/><rect x="1363.6" y="4" width="1" height="14" fill="#2c2c2c"/><rect x="1372.2" y="4" width="1" height="14" fill="#2c2c2c"/><rect x="1380.8" y="4" width="1" height="14" fill="#2c2c2c"/><rect x="1389.4" y="4" width="1" height="14" fill="#2c2c2c"/><rect x="1397.9" y="4" width="1" height="14" fill="#2c2c2c"/><rect x="1406.5" y="4" width="1" height="14" fill="#2c2c2c"/><rect x="1415.1" y="4" width="1" height="14" fill="#2c2c2c"/><rect x="1423.7" y="4" width="1" height="14" fill="#2c2c2c"/><rect x="1432.3" y="4" width="1" height="14" fill="#2c2c2c"/><rect x="1440.9" y="4" width="1" height="14" fill="#2c2c2c"/><rect x="1449.5" y="4" width="1" height="14" fill="#2c2c2c"/><rect x="1458.1" y="4" width="1" height="14" fill="#2c2c2c"/><rect x="1466.6" y="4" width="1" height="14" fill="#2c2c2c"/><rect x="1475.2" y="4" width="1" height="14" fill="#2c2c2c"/><rect x="1483.8" y="4" width="1" height="14" fill="#2c2c2c"/><rect x="1492.4" y="4" width="1" height="14" fill="#2c2c2c"/><rect x="1500" y="5" width="1.3" height="14" fill="#5a5a5a"/><rect x="1509.6" y="4" width="1" height="14" fill="#2c2c2c"/><rect x="1518.2" y="4" width="1" height="14" fill="#2c2c2c"/><rect x="1526.8" y="4" width="1" height="14" fill="#2c2c2c"/><rect x="1535.4" y="4" width="1" height="14" fill="#2c2c2c"/><rect x="1543.9" y="4" width="1" height="14" fill="#2c2c2c"/><rect x="1552.5" y="4" width="1" height="14" fill="#2c2c2c"/><rect x="1561.1" y="4" width="1" height="14" fill="#2c2c2c"/><rect x="1569.7" y="4" width="1" height="14" fill="#2c2c2c"/><rect x="1578.3" y="4" width="1" height="14" fill="#2c2c2c"/><rect x="1586.9" y="4" width="1" height="14" fill="#2c2c2c"/><rect x="1595.5" y="4" width="1" height="14" fill="#2c2c2c"/><rect x="1604.1" y="4" width="1" height="14" fill="#2c2c2c"/><rect x="1612.6" y="4" width="1" height="14" fill="#2c2c2c"/><rect x="1621.2" y="4" width="1" height="14" fill="#2c2c2c"/><rect x="1629.8" y="4" width="1" height="14" fill="#2c2c2c"/><rect x="1638.4" y="4" width="1" height="14" fill="#2c2c2c"/><rect x="1646" y="5" width="1.3" height="14" fill="#5a5a5a"/><rect x="1655.6" y="4" width="1" height="14" fill="#2c2c2c"/><rect x="1664.2" y="4" width="1" height="14" fill="#2c2c2c"/><rect x="1672.8" y="4" width="1" height="14" fill="#2c2c2c"/><rect x="1681.4" y="4" width="1" height="14" fill="#2c2c2c"/><rect x="1689.9" y="4" width="1" height="14" fill="#2c2c2c"/><rect x="1698.5" y="4" width="1" height="14" fill="#2c2c2c"/><rect x="1707.1" y="4" width="1" height="14" fill="#2c2c2c"/><rect x="1715.7" y="4" width="1" height="14" fill="#2c2c2c"/><rect x="1724.3" y="4" width="1" height="14" fill="#2c2c2c"/><rect x="1732.9" y="4" width="1" height="14" fill="#2c2c2c"/><rect x="1741.5" y="4" width="1" height="14" fill="#2c2c2c"/><rect x="1750.1" y="4" width="1" height="14" fill="#2c2c2c"/><rect x="1758.6" y="4" width="1" height="14" fill="#2c2c2c"/><rect x="1767.2" y="4" width="1" height="14" fill="#2c2c2c"/><rect x="1775.8" y="4" width="1" height="14" fill="#2c2c2c"/><rect x="1784.4" y="4" width="1" height="14" fill="#2c2c2c"/><rect x="1792" y="5" width="1.3" height="14" fill="#5a5a5a"/><rect x="1801.6" y="4" width="1" height="14" fill="#2c2c2c"/><rect x="1810.2" y="4" width="1" height="14" fill="#2c2c2c"/><rect x="1818.8" y="4" width="1" height="14" fill="#2c2c2c"/><rect x="1827.4" y="4" width="1" height="14" fill="#2c2c2c"/><rect x="1835.9" y="4" width="1" height="14" fill="#2c2c2c"/><rect x="1844.5" y="4" width="1" height="14" fill="#2c2c2c"/><rect x="1853.1" y="4" width="1" height="14" fill="#2c2c2c"/><rect x="1861.7" y="4" width="1" height="14" fill="#2c2c2c"/><rect x="1870.3" y="4" width="1" height="14" fill="#2c2c2c"/><rect x="1878.9" y="4" width="1" height="14" fill="#2c2c2c"/><rect x="1887.5" y="4" width="1" height="14" fill="#2c2c2c"/><rect x="1896.1" y="4" width="1" height="14" fill="#2c2c2c"/><rect x="1904.6" y="4" width="1" height="14" fill="#2c2c2c"/><rect x="1913.2" y="4" width="1" height="14" fill="#2c2c2c"/><rect x="1921.8" y="4" width="1" height="14" fill="#2c2c2c"/><rect x="1930.4" y="4" width="1" height="14" fill="#2c2c2c"/><rect x="1938" y="5" width="1.3" height="14" fill="#5a5a5a"/><rect x="1947.6" y="4" width="1" height="14" fill="#2c2c2c"/><rect x="1956.2" y="4" width="1" height="14" fill="#2c2c2c"/><rect x="1964.8" y="4" width="1" height="14" fill="#2c2c2c"/><rect x="1973.4" y="4" width="1" height="14" fill="#2c2c2c"/><rect x="1981.9" y="4" width="1" height="14" fill="#2c2c2c"/><rect x="1990.5" y="4" width="1" height="14" fill="#2c2c2c"/><rect x="1999.1" y="4" width="1" height="14" fill="#2c2c2c"/><rect x="2007.7" y="4" width="1" height="14" fill="#2c2c2c"/><rect x="2016.3" y="4" width="1" height="14" fill="#2c2c2c"/><rect x="2024.9" y="4" width="1" height="14" fill="#2c2c2c"/><rect x="2033.5" y="4" width="1" height="14" fill="#2c2c2c"/><rect x="2042.1" y="4" width="1" height="14" fill="#2c2c2c"/><rect x="2050.6" y="4" width="1" height="14" fill="#2c2c2c"/><rect x="2059.2" y="4" width="1" height="14" fill="#2c2c2c"/><rect x="2067.8" y="4" width="1" height="14" fill="#2c2c2c"/><rect x="2076.4" y="4" width="1" height="14" fill="#2c2c2c"/></svg>
<div style="left:46px;top:641px;width:68px;height:17px;background:#222"></div>
<div class="t" style="left:50px;top:643.9px;font-size:10.8px;color:#505050;font-weight:normal;letter-spacing:0.5px;-webkit-text-stroke:0.1px currentColor">00:00:00:00</div>
<div style="left:192px;top:641px;width:68px;height:17px;background:#222"></div>
<div class="t" style="left:196px;top:643.9px;font-size:10.8px;color:#505050;font-weight:normal;letter-spacing:0.5px;-webkit-text-stroke:0.1px currentColor">00:00:15:00</div>
<div style="left:338px;top:641px;width:68px;height:17px;background:#222"></div>
<div class="t" style="left:342px;top:643.9px;font-size:10.8px;color:#505050;font-weight:normal;letter-spacing:0.5px;-webkit-text-stroke:0.1px currentColor">00:00:30:00</div>
<div style="left:484px;top:641px;width:68px;height:17px;background:#222"></div>
<div class="t" style="left:488px;top:643.9px;font-size:10.8px;color:#505050;font-weight:normal;letter-spacing:0.5px;-webkit-text-stroke:0.1px currentColor">00:00:45:00</div>
<div style="left:630px;top:641px;width:68px;height:17px;background:#222"></div>
<div class="t" style="left:634px;top:643.9px;font-size:10.8px;color:#505050;font-weight:normal;letter-spacing:0.5px;-webkit-text-stroke:0.1px currentColor">00:01:00:00</div>
<div style="left:776px;top:641px;width:68px;height:17px;background:#222"></div>
<div class="t" style="left:780px;top:643.9px;font-size:10.8px;color:#505050;font-weight:normal;letter-spacing:0.5px;-webkit-text-stroke:0.1px currentColor">00:01:15:00</div>
<div style="left:922px;top:641px;width:68px;height:17px;background:#222"></div>
<div class="t" style="left:926px;top:643.9px;font-size:10.8px;color:#505050;font-weight:normal;letter-spacing:0.5px;-webkit-text-stroke:0.1px currentColor">00:01:30:00</div>
<div style="left:1068px;top:641px;width:68px;height:17px;background:#222"></div>
<div class="t" style="left:1072px;top:643.9px;font-size:10.8px;color:#505050;font-weight:normal;letter-spacing:0.5px;-webkit-text-stroke:0.1px currentColor">00:01:45:00</div>
<div style="left:1214px;top:641px;width:68px;height:17px;background:#222"></div>
<div class="t" style="left:1218px;top:643.9px;font-size:10.8px;color:#505050;font-weight:normal;letter-spacing:0.5px;-webkit-text-stroke:0.1px currentColor">00:02:00:00</div>
<div style="left:1360px;top:641px;width:68px;height:17px;background:#222"></div>
<div class="t" style="left:1364px;top:643.9px;font-size:10.8px;color:#505050;font-weight:normal;letter-spacing:0.5px;-webkit-text-stroke:0.1px currentColor">00:02:15:00</div>
<div style="left:1506px;top:641px;width:68px;height:17px;background:#222"></div>
<div class="t" style="left:1510px;top:643.9px;font-size:10.8px;color:#505050;font-weight:normal;letter-spacing:0.5px;-webkit-text-stroke:0.1px currentColor">00:02:30:00</div>
<div style="left:1652px;top:641px;width:68px;height:17px;background:#222"></div>
<div class="t" style="left:1656px;top:643.9px;font-size:10.8px;color:#505050;font-weight:normal;letter-spacing:0.5px;-webkit-text-stroke:0.1px currentColor">00:02:45:00</div>
<div style="left:1798px;top:641px;width:68px;height:17px;background:#222"></div>
<div class="t" style="left:1802px;top:643.9px;font-size:10.8px;color:#505050;font-weight:normal;letter-spacing:0.5px;-webkit-text-stroke:0.1px currentColor">00:03:00:00</div>
<div style="left:40px;top:639px;width:1878px;height:1px;background:#3a3a3a"></div>
<div style="left:0px;top:639px;width:40px;height:21px;background:#1d1d1d"></div>
<div style="left:0px;top:660px;width:1906px;height:229px;background:#212121"></div>
<div style="left:0px;top:889px;width:1906px;height:104px;background:#181818"></div>
<div style="left:0px;top:993px;width:1906px;height:193px;background:#212121"></div>
<div style="left:0px;top:660px;width:40px;height:526px;background:#1d1d1d"></div>
<div style="left:1906px;top:660px;width:12px;height:526px;background:#1b1b1b"></div>
<div style="left:1911px;top:762px;width:7px;height:369px;background:#525252;border-radius:3px"></div>
<div style="left:409px;top:660px;width:3px;height:58px;background:#213a62;border-radius:2px"></div>
<div style="left:420px;top:660px;width:11px;height:58px;background:#213a62;border-radius:2px"></div>
<div style="left:494px;top:660px;width:3px;height:58px;background:#213a62;border-radius:2px"></div>
<div style="left:527px;top:660px;width:3px;height:58px;background:#213a62;border-radius:2px"></div>
<div style="left:534px;top:660px;width:3px;height:58px;background:#213a62;border-radius:2px"></div>
<div style="left:539px;top:660px;width:3px;height:58px;background:#213a62;border-radius:2px"></div>
<div style="left:546px;top:660px;width:3px;height:58px;background:#213a62;border-radius:2px"></div>
<div style="left:551px;top:660px;width:3px;height:58px;background:#213a62;border-radius:2px"></div>
<div style="left:560px;top:660px;width:2px;height:58px;background:#213a62;border-radius:2px"></div>
<div style="left:586px;top:660px;width:3px;height:58px;background:#213a62;border-radius:2px"></div>
<div style="left:620px;top:660px;width:3px;height:58px;background:#213a62;border-radius:2px"></div>
<div style="left:637px;top:660px;width:11px;height:58px;background:#213a62;border-radius:2px"></div>
<div style="left:653px;top:660px;width:3px;height:58px;background:#213a62;border-radius:2px"></div>
<div style="left:659px;top:660px;width:3px;height:58px;background:#213a62;border-radius:2px"></div>
<div style="left:697px;top:660px;width:3px;height:58px;background:#213a62;border-radius:2px"></div>
<div style="left:711px;top:660px;width:3px;height:58px;background:#213a62;border-radius:2px"></div>
<div style="left:744px;top:660px;width:11px;height:58px;background:#213a62;border-radius:2px"></div>
<div style="left:760px;top:660px;width:3px;height:58px;background:#213a62;border-radius:2px"></div>
<div style="left:769px;top:660px;width:3px;height:58px;background:#213a62;border-radius:2px"></div>
<div style="left:791px;top:660px;width:3px;height:58px;background:#213a62;border-radius:2px"></div>
<div style="left:823px;top:660px;width:7px;height:58px;background:#213a62;border-radius:2px"></div>
<div style="left:836px;top:660px;width:11px;height:58px;background:#213a62;border-radius:2px"></div>
<div style="left:855px;top:660px;width:3px;height:58px;background:#213a62;border-radius:2px"></div>
<div style="left:929px;top:660px;width:3px;height:58px;background:#213a62;border-radius:2px"></div>
<div style="left:934px;top:660px;width:3px;height:58px;background:#213a62;border-radius:2px"></div>
<div style="left:981px;top:660px;width:3px;height:58px;background:#213a62;border-radius:2px"></div>
<div style="left:1010px;top:660px;width:12px;height:58px;background:#213a62;border-radius:2px"></div>
<div style="left:1104px;top:660px;width:12px;height:58px;background:#213a62;border-radius:2px"></div>
<div style="left:1150px;top:660px;width:12px;height:58px;background:#213a62;border-radius:2px"></div>
<div style="left:1318px;top:660px;width:4px;height:58px;background:#213a62;border-radius:2px"></div>
<div style="left:1405px;top:660px;width:4px;height:58px;background:#213a62;border-radius:2px"></div>
<div style="left:164px;top:799px;width:4px;height:58px;background:#213a62;border-radius:2px"></div>
<div style="left:177px;top:799px;width:4px;height:58px;background:#213a62;border-radius:2px"></div>
<div style="left:227px;top:799px;width:4px;height:58px;background:#213a62;border-radius:2px"></div>
<div style="left:236px;top:799px;width:4px;height:58px;background:#213a62;border-radius:2px"></div>
<div style="left:276px;top:799px;width:4px;height:58px;background:#213a62;border-radius:2px"></div>
<div style="left:309px;top:799px;width:4px;height:58px;background:#213a62;border-radius:2px"></div>
<div style="left:324px;top:799px;width:4px;height:58px;background:#213a62;border-radius:2px"></div>
<div style="left:347px;top:799px;width:2px;height:58px;background:#213a62;border-radius:2px"></div>
<div style="left:533px;top:799px;width:3px;height:58px;background:#213a62;border-radius:2px"></div>
<div style="left:540px;top:799px;width:3px;height:58px;background:#213a62;border-radius:2px"></div>
<div style="left:549px;top:799px;width:3px;height:58px;background:#213a62;border-radius:2px"></div>
<div style="left:682px;top:799px;width:2px;height:58px;background:#213a62;border-radius:2px"></div>
<div style="left:347px;top:735px;width:2px;height:45px;background:#213a62"></div>
<div style="left:96px;top:799px;width:15px;height:58px;background:#2b4a7a;border-radius:3px"></div>
<div style="left:98px;top:815px;width:11px;height:26px;background:#000"></div>
<div style="left:99px;top:820px;width:9px;height:12px;background:#c0402a;border-radius:3px"></div>
<div style="left:1454px;top:684px;width:23px;height:60px;background:#976829;border-radius:3px;box-shadow:inset 0 0 0 1px rgba(50,30,5,0.75)"></div>
<svg style="position:absolute;left:1456px;top:699px;" width="19" height="29" viewBox="0 0 19 29"><rect x="0" y="0" width="19" height="29" fill="#dedad6"/><rect x="10.5" y="0" width="2.3" height="21.8" fill="#fafafa"/><rect x="0" y="19.7" width="19" height="9.3" fill="#c9ab8a"/><rect x="5.7" y="10.1" width="2.5" height="13.1" fill="#3a3a48"/><rect x="2.9" y="17.4" width="5.7" height="1.5" fill="#7a6a5a"/></svg>
<svg style="position:absolute;left:1456px;top:729px;" width="19" height="13" viewBox="0 0 19 13"><rect x="0" y="11.9" width="2" height="1.1" fill="#d2a060"/><rect x="2" y="11.6" width="2" height="1.4" fill="#d2a060"/><rect x="4" y="11.5" width="2" height="1.5" fill="#d2a060"/><rect x="6" y="12.2" width="2" height="0.8" fill="#d2a060"/><rect x="8" y="11.1" width="2" height="1.9" fill="#d2a060"/><rect x="10" y="11.1" width="2" height="1.9" fill="#d2a060"/><rect x="12" y="11.7" width="2" height="1.3" fill="#d2a060"/><rect x="14" y="11.2" width="2" height="1.8" fill="#d2a060"/><rect x="16" y="11.4" width="2" height="1.6" fill="#d2a060"/><rect x="18" y="11.8" width="2" height="1.2" fill="#d2a060"/></svg>
<div style="left:1500px;top:684px;width:8px;height:60px;background:#976829;border-radius:3px"></div>
<div style="left:1530px;top:660px;width:16px;height:60px;background:#976829;border-radius:3px;box-shadow:inset 0 0 0 1px rgba(50,30,5,0.75)"></div>
<div class="t" style="left:1534px;top:663.3px;font-size:10.3px;color:#d4b27c;font-weight:normal;">C</div>
<svg style="position:absolute;left:1532px;top:675px;" width="12" height="29" viewBox="0 0 12 29"><rect x="0" y="0" width="12" height="29" fill="#dedad6"/><rect x="6.6" y="0" width="1.4" height="21.8" fill="#fafafa"/><rect x="0" y="19.7" width="12" height="9.3" fill="#c9ab8a"/><rect x="3.6" y="10.1" width="2.5" height="13.1" fill="#3a3a48"/><rect x="1.8" y="17.4" width="3.6" height="1.5" fill="#7a6a5a"/></svg>
<svg style="position:absolute;left:1532px;top:705px;" width="12" height="13" viewBox="0 0 12 13"><rect x="0" y="6.7" width="2" height="6.3" fill="#d2a060"/><rect x="2" y="2.3" width="2" height="10.7" fill="#d2a060"/><rect x="4" y="3.6" width="2" height="9.4" fill="#d2a060"/><rect x="6" y="9.2" width="2" height="3.8" fill="#d2a060"/><rect x="8" y="12.0" width="2" height="1.0" fill="#d2a060"/><rect x="10" y="4.0" width="2" height="9.0" fill="#d2a060"/></svg>
<div style="left:1563px;top:660px;width:11px;height:60px;background:#976829;border-radius:3px"></div>
<div style="left:1674px;top:704px;width:21px;height:16px;background:#513888;border-radius:3px"></div>
<div style="left:1724px;top:704px;width:21px;height:16px;background:#513888;border-radius:3px"></div>
<div style="left:41px;top:730px;width:12px;height:15px;background:#513888;border-radius:3px"></div>
<div style="left:60px;top:730px;width:17px;height:15px;background:#513888;border-radius:3px"></div>
<div style="left:378px;top:730px;width:40px;height:15px;background:#513888;border-radius:3px"></div>
<div class="t" style="left:382px;top:732.1px;font-size:10.5px;color:#ab9edb;font-weight:normal;">Adjus...</div>
<div style="left:420px;top:730px;width:1010px;height:15px;background:#513888;border-radius:3px"></div>
<div class="t" style="left:424px;top:732.1px;font-size:10.5px;color:#ab9edb;font-weight:normal;">Adjustment layer</div>
<div style="left:1479px;top:730px;width:18px;height:15px;background:#513888;border-radius:3px"></div>
<div style="left:1544px;top:730px;width:21px;height:15px;background:#513888;border-radius:3px"></div>
<div style="left:1575px;top:730px;width:67px;height:15px;background:#513888;border-radius:3px"></div>
<div class="t" style="left:1579px;top:732.1px;font-size:10.5px;color:#ab9edb;font-weight:normal;">Adjustmen...</div>
<div style="left:1644px;top:730px;width:118px;height:15px;background:#513888;border-radius:3px"></div>
<div class="t" style="left:1648px;top:732.1px;font-size:10.5px;color:#ab9edb;font-weight:normal;">Adjustment layer</div>
<div style="left:80px;top:867px;width:296px;height:15px;background:#513888;border-radius:3px"></div>
<div class="t" style="left:84px;top:869.1px;font-size:10.5px;color:#ab9edb;font-weight:normal;">Adjustment layer</div>
<div style="left:41px;top:754px;width:16px;height:60px;background:#976829;border-radius:3px;box-shadow:inset 0 0 0 1px rgba(50,30,5,0.75)"></div>
<svg style="position:absolute;left:43px;top:769px;" width="12" height="29" viewBox="0 0 12 29"><rect x="0" y="0" width="12" height="29" fill="#e6e4e2"/><rect x="0" y="20.3" width="12" height="8.7" fill="#d6b894"/></svg>
<svg style="position:absolute;left:43px;top:799px;" width="12" height="13" viewBox="0 0 12 13"><rect x="0" y="10.8" width="2" height="2.2" fill="#d2a060"/><rect x="2" y="10.6" width="2" height="2.4" fill="#d2a060"/><rect x="4" y="11.3" width="2" height="1.7" fill="#d2a060"/><rect x="6" y="10.8" width="2" height="2.2" fill="#d2a060"/><rect x="8" y="11.2" width="2" height="1.8" fill="#d2a060"/><rect x="10" y="11.7" width="2" height="1.3" fill="#d2a060"/></svg>
<div style="left:61px;top:754px;width:16px;height:60px;background:#3d5580;border-radius:3px;box-shadow:inset 0 0 0 1px rgba(50,30,5,0.75)"></div>
<svg style="position:absolute;left:63px;top:769px;" width="12" height="29" viewBox="0 0 12 29"><rect x="0" y="0" width="12" height="29" fill="#dedad6"/><rect x="6.6" y="0" width="1.4" height="21.8" fill="#fafafa"/><rect x="0" y="19.7" width="12" height="9.3" fill="#c9ab8a"/><rect x="3.6" y="10.1" width="2.5" height="13.1" fill="#3a3a48"/><rect x="1.8" y="17.4" width="3.6" height="1.5" fill="#7a6a5a"/></svg>
<svg style="position:absolute;left:63px;top:799px;" width="12" height="13" viewBox="0 0 12 13"><rect x="0" y="8.3" width="2" height="4.7" fill="#d2a060"/><rect x="2" y="10.4" width="2" height="2.6" fill="#d2a060"/><rect x="4" y="12.2" width="2" height="0.8" fill="#d2a060"/><rect x="6" y="11.6" width="2" height="1.4" fill="#d2a060"/><rect x="8" y="11.5" width="2" height="1.5" fill="#d2a060"/><rect x="10" y="10.5" width="2" height="2.5" fill="#d2a060"/></svg>
<div style="left:379px;top:754px;width:41px;height:60px;background:#976829;border-radius:3px;box-shadow:inset 0 0 0 1px rgba(50,30,5,0.75)"></div>
<div class="t" style="left:383px;top:757.3px;font-size:10.3px;color:#d4b27c;font-weight:normal;">C0153</div>
<svg style="position:absolute;left:381px;top:769px;" width="37" height="29" viewBox="0 0 37 29"><rect x="0" y="0" width="37" height="29" fill="#e2dedc"/><rect x="0" y="20.9" width="37" height="8.1" fill="#cfa878"/><ellipse cx="6.7" cy="19.1" rx="5.2" ry="7.2" fill="#e6b82a"/><ellipse cx="6.7" cy="8.1" rx="2.2" ry="3.5" fill="#c89a88"/><ellipse cx="18.5" cy="19.1" rx="5.2" ry="7.2" fill="#8a5ae0"/><ellipse cx="18.5" cy="8.1" rx="2.2" ry="3.5" fill="#c89a88"/><ellipse cx="30.3" cy="19.1" rx="5.2" ry="7.2" fill="#e0382a"/><ellipse cx="30.3" cy="8.1" rx="2.2" ry="3.5" fill="#c89a88"/></svg>
<svg style="position:absolute;left:381px;top:799px;" width="37" height="13" viewBox="0 0 37 13"><rect x="0" y="8.8" width="2" height="4.2" fill="#d2a060"/><rect x="2" y="9.5" width="2" height="3.5" fill="#d2a060"/><rect x="4" y="11.0" width="2" height="2.0" fill="#d2a060"/><rect x="6" y="9.7" width="2" height="3.3" fill="#d2a060"/><rect x="8" y="10.3" width="2" height="2.7" fill="#d2a060"/><rect x="10" y="9.7" width="2" height="3.3" fill="#d2a060"/><rect x="12" y="10.5" width="2" height="2.5" fill="#d2a060"/><rect x="14" y="8.2" width="2" height="4.8" fill="#d2a060"/><rect x="16" y="11.0" width="2" height="2.0" fill="#d2a060"/><rect x="18" y="10.4" width="2" height="2.6" fill="#d2a060"/><rect x="20" y="8.9" width="2" height="4.1" fill="#d2a060"/><rect x="22" y="8.1" width="2" height="4.9" fill="#d2a060"/><rect x="24" y="8.1" width="2" height="4.9" fill="#d2a060"/><rect x="26" y="9.6" width="2" height="3.4" fill="#d2a060"/><rect x="28" y="8.4" width="2" height="4.6" fill="#d2a060"/><rect x="30" y="11.1" width="2" height="1.9" fill="#d2a060"/><rect x="32" y="12.3" width="2" height="0.7" fill="#d2a060"/><rect x="34" y="12.4" width="2" height="0.6" fill="#d2a060"/><rect x="36" y="9.4" width="2" height="3.6" fill="#d2a060"/></svg>
<div style="left:864px;top:754px;width:26px;height:60px;background:#976829;border-radius:3px;box-shadow:inset 0 0 0 1px rgba(50,30,5,0.75)"></div>
<div class="t" style="left:868px;top:757.3px;font-size:10.3px;color:#d4b27c;font-weight:normal;">C</div>
<svg style="position:absolute;left:866px;top:769px;" width="22" height="29" viewBox="0 0 22 29"><rect x="0" y="0" width="16" height="29" fill="#ebe8e6"/><rect x="0" y="20.3" width="16" height="8.7" fill="#cdb096" opacity="0.9"/><ellipse cx="8.1" cy="12.2" rx="4.7" ry="5.8" fill="#d8a898"/><ellipse cx="8.1" cy="7.8" rx="5.0" ry="3.5" fill="#2e2626"/><rect x="4.6" y="16.8" width="7.0" height="12.2" fill="#888"/><rect x="16" y="0" width="6" height="29" fill="#dedad6"/><rect x="19.3" y="0" width="0.7" height="21.8" fill="#fafafa"/><rect x="16" y="19.7" width="6" height="9.3" fill="#c9ab8a"/><rect x="17.8" y="10.1" width="2.5" height="13.1" fill="#3a3a48"/><rect x="16.9" y="17.4" width="1.8" height="1.5" fill="#7a6a5a"/></svg>
<svg style="position:absolute;left:866px;top:799px;" width="22" height="13" viewBox="0 0 22 13"><rect x="0" y="8.1" width="2" height="4.9" fill="#d2a060"/><rect x="2" y="8.3" width="2" height="4.7" fill="#d2a060"/><rect x="4" y="3.0" width="2" height="10.0" fill="#d2a060"/><rect x="6" y="4.5" width="2" height="8.5" fill="#d2a060"/><rect x="8" y="4.3" width="2" height="8.7" fill="#d2a060"/><rect x="10" y="11.7" width="2" height="1.3" fill="#d2a060"/><rect x="12" y="7.2" width="2" height="5.8" fill="#d2a060"/><rect x="14" y="3.1" width="2" height="9.9" fill="#d2a060"/><rect x="16" y="7.4" width="2" height="5.6" fill="#d2a060"/><rect x="18" y="10.5" width="2" height="2.5" fill="#d2a060"/><rect x="20" y="2.9" width="2" height="10.1" fill="#d2a060"/></svg>
<div style="left:1331px;top:754px;width:9px;height:60px;background:#976829;border-radius:3px"></div>
<div style="left:1426px;top:754px;width:27px;height:60px;background:#976829;border-radius:3px;box-shadow:inset 0 0 0 1px rgba(50,30,5,0.75)"></div>
<div class="t" style="left:1430px;top:757.3px;font-size:10.3px;color:#d4b27c;font-weight:normal;">C...</div>
<svg style="position:absolute;left:1428px;top:769px;" width="23" height="29" viewBox="0 0 23 29"><rect x="0" y="0" width="23" height="29" fill="#dedad6"/><rect x="12.7" y="0" width="2.8" height="21.8" fill="#fafafa"/><rect x="0" y="19.7" width="23" height="9.3" fill="#c9ab8a"/><rect x="6.9" y="10.1" width="2.5" height="13.1" fill="#3a3a48"/><rect x="3.4" y="17.4" width="6.9" height="1.5" fill="#7a6a5a"/></svg>
<svg style="position:absolute;left:1428px;top:799px;" width="23" height="13" viewBox="0 0 23 13"><rect x="0" y="11.8" width="2" height="1.2" fill="#d2a060"/><rect x="2" y="10.4" width="2" height="2.6" fill="#d2a060"/><rect x="4" y="11.1" width="2" height="1.9" fill="#d2a060"/><rect x="6" y="11.2" width="2" height="1.8" fill="#d2a060"/><rect x="8" y="10.9" width="2" height="2.1" fill="#d2a060"/><rect x="10" y="11.2" width="2" height="1.8" fill="#d2a060"/><rect x="12" y="10.1" width="2" height="2.9" fill="#d2a060"/><rect x="14" y="11.4" width="2" height="1.6" fill="#d2a060"/><rect x="16" y="10.7" width="2" height="2.3" fill="#d2a060"/><rect x="18" y="11.1" width="2" height="1.9" fill="#d2a060"/><rect x="20" y="12.4" width="2" height="0.6" fill="#d2a060"/><rect x="22" y="11.2" width="2" height="1.8" fill="#d2a060"/></svg>
<div style="left:1455px;top:754px;width:118px;height:60px;background:#976829;border-radius:3px;box-shadow:inset 0 0 0 1px rgba(50,30,5,0.75)"></div>
<div class="t" style="left:1459px;top:757.3px;font-size:10.3px;color:#d4b27c;font-weight:normal;">C0296</div>
<svg style="position:absolute;left:1457px;top:769px;" width="114" height="29" viewBox="0 0 114 29"><rect x="0" y="0" width="42" height="29" fill="#dedad6"/><rect x="23.1" y="0" width="5.0" height="21.8" fill="#fafafa"/><rect x="0" y="19.7" width="42" height="9.3" fill="#c9ab8a"/><rect x="12.6" y="10.1" width="2.5" height="13.1" fill="#3a3a48"/><rect x="6.3" y="17.4" width="12.6" height="1.5" fill="#7a6a5a"/><rect x="42" y="0" width="42" height="29" fill="#dedad6"/><rect x="65.1" y="0" width="5.0" height="21.8" fill="#fafafa"/><rect x="42" y="19.7" width="42" height="9.3" fill="#c9ab8a"/><rect x="54.6" y="10.1" width="2.5" height="13.1" fill="#3a3a48"/><rect x="48.3" y="17.4" width="12.6" height="1.5" fill="#7a6a5a"/><rect x="84" y="0" width="30" height="29" fill="#dedad6"/><rect x="100.5" y="0" width="3.6" height="21.8" fill="#fafafa"/><rect x="84" y="19.7" width="30" height="9.3" fill="#c9ab8a"/><rect x="93.0" y="10.1" width="2.5" height="13.1" fill="#3a3a48"/><rect x="88.5" y="17.4" width="9.0" height="1.5" fill="#7a6a5a"/></svg>
<svg style="position:absolute;left:1457px;top:799px;" width="114" height="13" viewBox="0 0 114 13"><rect x="0" y="11.2" width="2" height="1.8" fill="#d2a060"/><rect x="2" y="5.1" width="2" height="7.9" fill="#d2a060"/><rect x="4" y="7.9" width="2" height="5.1" fill="#d2a060"/><rect x="6" y="7.6" width="2" height="5.4" fill="#d2a060"/><rect x="8" y="12.4" width="2" height="0.6" fill="#d2a060"/><rect x="10" y="7.9" width="2" height="5.1" fill="#d2a060"/><rect x="12" y="5.5" width="2" height="7.5" fill="#d2a060"/><rect x="14" y="11.1" width="2" height="1.9" fill="#d2a060"/><rect x="16" y="9.0" width="2" height="4.0" fill="#d2a060"/><rect x="18" y="7.5" width="2" height="5.5" fill="#d2a060"/><rect x="20" y="9.7" width="2" height="3.3" fill="#d2a060"/><rect x="22" y="10.2" width="2" height="2.8" fill="#d2a060"/><rect x="24" y="10.7" width="2" height="2.3" fill="#d2a060"/><rect x="26" y="10.2" width="2" height="2.8" fill="#d2a060"/><rect x="28" y="5.1" width="2" height="7.9" fill="#d2a060"/><rect x="30" y="12.0" width="2" height="1.0" fill="#d2a060"/><rect x="32" y="9.6" width="2" height="3.4" fill="#d2a060"/><rect x="34" y="11.0" width="2" height="2.0" fill="#d2a060"/><rect x="36" y="6.0" width="2" height="7.0" fill="#d2a060"/><rect x="38" y="12.4" width="2" height="0.6" fill="#d2a060"/><rect x="40" y="6.7" width="2" height="6.3" fill="#d2a060"/><rect x="42" y="8.3" width="2" height="4.7" fill="#d2a060"/><rect x="44" y="10.7" width="2" height="2.3" fill="#d2a060"/><rect x="46" y="10.6" width="2" height="2.4" fill="#d2a060"/><rect x="48" y="7.7" width="2" height="5.3" fill="#d2a060"/><rect x="50" y="6.6" width="2" height="6.4" fill="#d2a060"/><rect x="52" y="7.6" width="2" height="5.4" fill="#d2a060"/><rect x="54" y="7.1" width="2" height="5.9" fill="#d2a060"/><rect x="56" y="9.5" width="2" height="3.5" fill="#d2a060"/><rect x="58" y="7.8" width="2" height="5.2" fill="#d2a060"/><rect x="60" y="9.8" width="2" height="3.2" fill="#d2a060"/><rect x="62" y="5.6" width="2" height="7.4" fill="#d2a060"/><rect x="64" y="9.8" width="2" height="3.2" fill="#d2a060"/><rect x="66" y="5.0" width="2" height="8.0" fill="#d2a060"/><rect x="68" y="8.8" width="2" height="4.2" fill="#d2a060"/><rect x="70" y="6.4" width="2" height="6.6" fill="#d2a060"/><rect x="72" y="10.8" width="2" height="2.2" fill="#d2a060"/><rect x="74" y="7.2" width="2" height="5.8" fill="#d2a060"/><rect x="76" y="6.4" width="2" height="6.6" fill="#d2a060"/><rect x="78" y="10.8" width="2" height="2.2" fill="#d2a060"/><rect x="80" y="8.5" width="2" height="4.5" fill="#d2a060"/><rect x="82" y="12.0" width="2" height="1.0" fill="#d2a060"/><rect x="84" y="5.1" width="2" height="7.9" fill="#d2a060"/><rect x="86" y="8.9" width="2" height="4.1" fill="#d2a060"/><rect x="88" y="5.3" width="2" height="7.7" fill="#d2a060"/><rect x="90" y="11.3" width="2" height="1.7" fill="#d2a060"/><rect x="92" y="12.2" width="2" height="0.8" fill="#d2a060"/><rect x="94" y="7.9" width="2" height="5.1" fill="#d2a060"/><rect x="96" y="11.1" width="2" height="1.9" fill="#d2a060"/><rect x="98" y="6.1" width="2" height="6.9" fill="#d2a060"/><rect x="100" y="5.7" width="2" height="7.3" fill="#d2a060"/><rect x="102" y="8.2" width="2" height="4.8" fill="#d2a060"/><rect x="104" y="8.1" width="2" height="4.9" fill="#d2a060"/><rect x="106" y="6.7" width="2" height="6.3" fill="#d2a060"/><rect x="108" y="12.1" width="2" height="0.9" fill="#d2a060"/><rect x="110" y="8.3" width="2" height="4.7" fill="#d2a060"/><rect x="112" y="6.0" width="2" height="7.0" fill="#d2a060"/></svg>
<div style="left:1576px;top:754px;width:65px;height:60px;background:#976829;border-radius:3px;box-shadow:inset 0 0 0 1px rgba(50,30,5,0.75)"></div>
<div class="t" style="left:1580px;top:757.3px;font-size:10.3px;color:#d4b27c;font-weight:normal;">C0291</div>
<svg style="position:absolute;left:1578px;top:769px;" width="61" height="29" viewBox="0 0 61 29"><rect x="0" y="0" width="42" height="29" fill="#e2dedc"/><rect x="0" y="20.9" width="42" height="8.1" fill="#cfa878"/><ellipse cx="7.6" cy="19.1" rx="5.9" ry="7.2" fill="#e6b82a"/><ellipse cx="7.6" cy="8.1" rx="2.5" ry="3.5" fill="#c89a88"/><ellipse cx="21.0" cy="19.1" rx="5.9" ry="7.2" fill="#8a5ae0"/><ellipse cx="21.0" cy="8.1" rx="2.5" ry="3.5" fill="#c89a88"/><ellipse cx="34.4" cy="19.1" rx="5.9" ry="7.2" fill="#e0382a"/><ellipse cx="34.4" cy="8.1" rx="2.5" ry="3.5" fill="#c89a88"/><rect x="42" y="0" width="19" height="29" fill="#e2dedc"/><rect x="42" y="20.9" width="19" height="8.1" fill="#cfa878"/><ellipse cx="45.4" cy="19.1" rx="2.7" ry="7.2" fill="#e6b82a"/><ellipse cx="45.4" cy="8.1" rx="1.1" ry="3.5" fill="#c89a88"/><ellipse cx="51.5" cy="19.1" rx="2.7" ry="7.2" fill="#8a5ae0"/><ellipse cx="51.5" cy="8.1" rx="1.1" ry="3.5" fill="#c89a88"/><ellipse cx="57.6" cy="19.1" rx="2.7" ry="7.2" fill="#e0382a"/><ellipse cx="57.6" cy="8.1" rx="1.1" ry="3.5" fill="#c89a88"/></svg>
<svg style="position:absolute;left:1578px;top:799px;" width="61" height="13" viewBox="0 0 61 13"><rect x="0" y="3.3" width="2" height="9.7" fill="#d2a060"/><rect x="2" y="4.6" width="2" height="8.4" fill="#d2a060"/><rect x="4" y="12.2" width="2" height="0.8" fill="#d2a060"/><rect x="6" y="10.1" width="2" height="2.9" fill="#d2a060"/><rect x="8" y="11.1" width="2" height="1.9" fill="#d2a060"/><rect x="10" y="3.5" width="2" height="9.5" fill="#d2a060"/><rect x="12" y="4.8" width="2" height="8.2" fill="#d2a060"/><rect x="14" y="5.4" width="2" height="7.6" fill="#d2a060"/><rect x="16" y="8.1" width="2" height="4.9" fill="#d2a060"/><rect x="18" y="8.6" width="2" height="4.4" fill="#d2a060"/><rect x="20" y="9.6" width="2" height="3.4" fill="#d2a060"/><rect x="22" y="7.4" width="2" height="5.6" fill="#d2a060"/><rect x="24" y="10.3" width="2" height="2.7" fill="#d2a060"/><rect x="26" y="12.0" width="2" height="1.0" fill="#d2a060"/><rect x="28" y="3.9" width="2" height="9.1" fill="#d2a060"/><rect x="30" y="10.6" width="2" height="2.4" fill="#d2a060"/><rect x="32" y="10.8" width="2" height="2.2" fill="#d2a060"/><rect x="34" y="2.3" width="2" height="10.7" fill="#d2a060"/><rect x="36" y="4.3" width="2" height="8.7" fill="#d2a060"/><rect x="38" y="9.8" width="2" height="3.2" fill="#d2a060"/><rect x="40" y="9.5" width="2" height="3.5" fill="#d2a060"/><rect x="42" y="10.1" width="2" height="2.9" fill="#d2a060"/><rect x="44" y="7.8" width="2" height="5.2" fill="#d2a060"/><rect x="46" y="12.4" width="2" height="0.6" fill="#d2a060"/><rect x="48" y="5.3" width="2" height="7.7" fill="#d2a060"/><rect x="50" y="11.3" width="2" height="1.7" fill="#d2a060"/><rect x="52" y="2.2" width="2" height="10.8" fill="#d2a060"/><rect x="54" y="11.6" width="2" height="1.4" fill="#d2a060"/><rect x="56" y="10.9" width="2" height="2.1" fill="#d2a060"/><rect x="58" y="11.3" width="2" height="1.7" fill="#d2a060"/><rect x="60" y="4.7" width="2" height="8.3" fill="#d2a060"/></svg>
<div style="left:1644px;top:754px;width:118px;height:60px;background:#976829;border-radius:3px;box-shadow:inset 0 0 0 1px rgba(50,30,5,0.75)"></div>
<div class="t" style="left:1648px;top:757.3px;font-size:10.3px;color:#d4b27c;font-weight:normal;">C0296</div>
<svg style="position:absolute;left:1646px;top:769px;" width="114" height="29" viewBox="0 0 114 29"><rect x="0" y="0" width="42" height="29" fill="#dedad6"/><rect x="23.1" y="0" width="5.0" height="21.8" fill="#fafafa"/><rect x="0" y="19.7" width="42" height="9.3" fill="#c9ab8a"/><rect x="12.6" y="10.1" width="2.5" height="13.1" fill="#3a3a48"/><rect x="6.3" y="17.4" width="12.6" height="1.5" fill="#7a6a5a"/><rect x="42" y="0" width="42" height="29" fill="#dedad6"/><rect x="65.1" y="0" width="5.0" height="21.8" fill="#fafafa"/><rect x="42" y="19.7" width="42" height="9.3" fill="#c9ab8a"/><rect x="54.6" y="10.1" width="2.5" height="13.1" fill="#3a3a48"/><rect x="48.3" y="17.4" width="12.6" height="1.5" fill="#7a6a5a"/><rect x="84" y="0" width="30" height="29" fill="#dedad6"/><rect x="100.5" y="0" width="3.6" height="21.8" fill="#fafafa"/><rect x="84" y="19.7" width="30" height="9.3" fill="#c9ab8a"/><rect x="93.0" y="10.1" width="2.5" height="13.1" fill="#3a3a48"/><rect x="88.5" y="17.4" width="9.0" height="1.5" fill="#7a6a5a"/></svg>
<svg style="position:absolute;left:1646px;top:799px;" width="114" height="13" viewBox="0 0 114 13"><rect x="0" y="11.3" width="2" height="1.7" fill="#d2a060"/><rect x="2" y="11.6" width="2" height="1.4" fill="#d2a060"/><rect x="4" y="11.3" width="2" height="1.7" fill="#d2a060"/><rect x="6" y="11.5" width="2" height="1.5" fill="#d2a060"/><rect x="8" y="11.6" width="2" height="1.4" fill="#d2a060"/><rect x="10" y="12.0" width="2" height="1.0" fill="#d2a060"/><rect x="12" y="11.3" width="2" height="1.7" fill="#d2a060"/><rect x="14" y="11.6" width="2" height="1.4" fill="#d2a060"/><rect x="16" y="11.3" width="2" height="1.7" fill="#d2a060"/><rect x="18" y="11.3" width="2" height="1.7" fill="#d2a060"/><rect x="20" y="11.2" width="2" height="1.8" fill="#d2a060"/><rect x="22" y="12.1" width="2" height="0.9" fill="#d2a060"/><rect x="24" y="12.0" width="2" height="1.0" fill="#d2a060"/><rect x="26" y="11.3" width="2" height="1.7" fill="#d2a060"/><rect x="28" y="11.9" width="2" height="1.1" fill="#d2a060"/><rect x="30" y="12.4" width="2" height="0.6" fill="#d2a060"/><rect x="32" y="11.2" width="2" height="1.8" fill="#d2a060"/><rect x="34" y="11.2" width="2" height="1.8" fill="#d2a060"/><rect x="36" y="12.0" width="2" height="1.0" fill="#d2a060"/><rect x="38" y="12.1" width="2" height="0.9" fill="#d2a060"/><rect x="40" y="11.0" width="2" height="2.0" fill="#d2a060"/><rect x="42" y="11.7" width="2" height="1.3" fill="#d2a060"/><rect x="44" y="11.3" width="2" height="1.7" fill="#d2a060"/><rect x="46" y="11.2" width="2" height="1.8" fill="#d2a060"/><rect x="48" y="12.0" width="2" height="1.0" fill="#d2a060"/><rect x="50" y="12.4" width="2" height="0.6" fill="#d2a060"/><rect x="52" y="11.6" width="2" height="1.4" fill="#d2a060"/><rect x="54" y="11.2" width="2" height="1.8" fill="#d2a060"/><rect x="56" y="12.5" width="2" height="0.5" fill="#d2a060"/><rect x="58" y="12.1" width="2" height="0.9" fill="#d2a060"/><rect x="60" y="11.9" width="2" height="1.1" fill="#d2a060"/><rect x="62" y="11.5" width="2" height="1.5" fill="#d2a060"/><rect x="64" y="11.8" width="2" height="1.2" fill="#d2a060"/><rect x="66" y="11.8" width="2" height="1.2" fill="#d2a060"/><rect x="68" y="12.5" width="2" height="0.5" fill="#d2a060"/><rect x="70" y="11.2" width="2" height="1.8" fill="#d2a060"/><rect x="72" y="12.2" width="2" height="0.8" fill="#d2a060"/><rect x="74" y="12.4" width="2" height="0.6" fill="#d2a060"/><rect x="76" y="11.7" width="2" height="1.3" fill="#d2a060"/><rect x="78" y="12.1" width="2" height="0.9" fill="#d2a060"/><rect x="80" y="12.2" width="2" height="0.8" fill="#d2a060"/><rect x="82" y="12.1" width="2" height="0.9" fill="#d2a060"/><rect x="84" y="11.1" width="2" height="1.9" fill="#d2a060"/><rect x="86" y="11.4" width="2" height="1.6" fill="#d2a060"/><rect x="88" y="11.8" width="2" height="1.2" fill="#d2a060"/><rect x="90" y="11.8" width="2" height="1.2" fill="#d2a060"/><rect x="92" y="11.5" width="2" height="1.5" fill="#d2a060"/><rect x="94" y="12.3" width="2" height="0.7" fill="#d2a060"/><rect x="96" y="12.0" width="2" height="1.0" fill="#d2a060"/><rect x="98" y="12.0" width="2" height="1.0" fill="#d2a060"/><rect x="100" y="12.2" width="2" height="0.8" fill="#d2a060"/><rect x="102" y="11.5" width="2" height="1.5" fill="#d2a060"/><rect x="104" y="12.0" width="2" height="1.0" fill="#d2a060"/><rect x="106" y="11.1" width="2" height="1.9" fill="#d2a060"/><rect x="108" y="11.3" width="2" height="1.7" fill="#d2a060"/><rect x="110" y="11.6" width="2" height="1.4" fill="#d2a060"/><rect x="112" y="11.3" width="2" height="1.7" fill="#d2a060"/></svg>
<div style="left:41px;top:822px;width:16px;height:60px;background:#976829;border-radius:3px;box-shadow:inset 0 0 0 1px rgba(50,30,5,0.75)"></div>
<svg style="position:absolute;left:43px;top:837px;" width="12" height="29" viewBox="0 0 12 29"><rect x="0" y="0" width="12" height="29" fill="#dcd6d0"/><rect x="0" y="20.3" width="12" height="8.7" fill="#cdb096" opacity="0.9"/><ellipse cx="7.7" cy="12.2" rx="3.3" ry="5.8" fill="#d8a898"/><ellipse cx="7.7" cy="7.8" rx="3.5" ry="3.5" fill="#2e2626"/><rect x="5.1" y="16.8" width="5.3" height="12.2" fill="#888"/></svg>
<svg style="position:absolute;left:43px;top:867px;" width="12" height="13" viewBox="0 0 12 13"><rect x="0" y="8.7" width="2" height="4.3" fill="#d2a060"/><rect x="2" y="9.9" width="2" height="3.1" fill="#d2a060"/><rect x="4" y="11.6" width="2" height="1.4" fill="#d2a060"/><rect x="6" y="10.4" width="2" height="2.6" fill="#d2a060"/><rect x="8" y="8.7" width="2" height="4.3" fill="#d2a060"/><rect x="10" y="8.9" width="2" height="4.1" fill="#d2a060"/></svg>
<div style="left:61px;top:822px;width:16px;height:60px;background:#3d5580;border-radius:3px;box-shadow:inset 0 0 0 1px rgba(50,30,5,0.75)"></div>
<svg style="position:absolute;left:63px;top:837px;" width="12" height="29" viewBox="0 0 12 29"><rect x="0" y="0" width="12" height="29" fill="#e4e0dc"/><rect x="0" y="20.3" width="12" height="8.7" fill="#cdb096" opacity="0.9"/><ellipse cx="4.3" cy="12.2" rx="2.5" ry="5.8" fill="#d8a898"/><ellipse cx="4.3" cy="7.8" rx="2.6" ry="3.5" fill="#2e2626"/><rect x="1.7" y="16.8" width="5.3" height="12.2" fill="#f4f4f4"/></svg>
<svg style="position:absolute;left:63px;top:867px;" width="12" height="13" viewBox="0 0 12 13"><rect x="0" y="11.0" width="2" height="2.0" fill="#d2a060"/><rect x="2" y="8.2" width="2" height="4.8" fill="#d2a060"/><rect x="4" y="11.6" width="2" height="1.4" fill="#d2a060"/><rect x="6" y="8.8" width="2" height="4.2" fill="#d2a060"/><rect x="8" y="9.3" width="2" height="3.7" fill="#d2a060"/><rect x="10" y="9.2" width="2" height="3.8" fill="#d2a060"/></svg>
<div style="left:379px;top:822px;width:41px;height:60px;background:#976829;border-radius:3px;box-shadow:inset 0 0 0 1px rgba(50,30,5,0.75)"></div>
<div class="t" style="left:383px;top:825.3px;font-size:10.3px;color:#d4b27c;font-weight:normal;">C0156</div>
<svg style="position:absolute;left:381px;top:837px;" width="37" height="29" viewBox="0 0 37 29"><rect x="0" y="0" width="37" height="29" fill="#e2dedc"/><rect x="0" y="20.9" width="37" height="8.1" fill="#cfa878"/><ellipse cx="6.7" cy="19.1" rx="5.2" ry="7.2" fill="#e6b82a"/><ellipse cx="6.7" cy="8.1" rx="2.2" ry="3.5" fill="#c89a88"/><ellipse cx="18.5" cy="19.1" rx="5.2" ry="7.2" fill="#8a5ae0"/><ellipse cx="18.5" cy="8.1" rx="2.2" ry="3.5" fill="#c89a88"/><ellipse cx="30.3" cy="19.1" rx="5.2" ry="7.2" fill="#e0382a"/><ellipse cx="30.3" cy="8.1" rx="2.2" ry="3.5" fill="#c89a88"/></svg>
<svg style="position:absolute;left:381px;top:867px;" width="37" height="13" viewBox="0 0 37 13"><rect x="0" y="10.1" width="2" height="2.9" fill="#d2a060"/><rect x="2" y="11.5" width="2" height="1.5" fill="#d2a060"/><rect x="4" y="11.2" width="2" height="1.8" fill="#d2a060"/><rect x="6" y="10.9" width="2" height="2.1" fill="#d2a060"/><rect x="8" y="10.0" width="2" height="3.0" fill="#d2a060"/><rect x="10" y="11.2" width="2" height="1.8" fill="#d2a060"/><rect x="12" y="11.7" width="2" height="1.3" fill="#d2a060"/><rect x="14" y="11.2" width="2" height="1.8" fill="#d2a060"/><rect x="16" y="10.5" width="2" height="2.5" fill="#d2a060"/><rect x="18" y="10.6" width="2" height="2.4" fill="#d2a060"/><rect x="20" y="12.2" width="2" height="0.8" fill="#d2a060"/><rect x="22" y="12.1" width="2" height="0.9" fill="#d2a060"/><rect x="24" y="11.1" width="2" height="1.9" fill="#d2a060"/><rect x="26" y="10.9" width="2" height="2.1" fill="#d2a060"/><rect x="28" y="10.8" width="2" height="2.2" fill="#d2a060"/><rect x="30" y="10.4" width="2" height="2.6" fill="#d2a060"/><rect x="32" y="11.9" width="2" height="1.1" fill="#d2a060"/><rect x="34" y="12.1" width="2" height="0.9" fill="#d2a060"/><rect x="36" y="10.3" width="2" height="2.7" fill="#d2a060"/></svg>
<div style="left:864px;top:822px;width:26px;height:60px;background:#976829;border-radius:3px;box-shadow:inset 0 0 0 1px rgba(50,30,5,0.75)"></div>
<div class="t" style="left:868px;top:825.3px;font-size:10.3px;color:#d4b27c;font-weight:normal;">C</div>
<svg style="position:absolute;left:866px;top:837px;" width="22" height="29" viewBox="0 0 22 29"><rect x="0" y="0" width="22" height="29" fill="#e6e4e2"/><rect x="0" y="20.3" width="22" height="8.7" fill="#d6b894"/></svg>
<svg style="position:absolute;left:866px;top:867px;" width="22" height="13" viewBox="0 0 22 13"><rect x="0" y="11.6" width="2" height="1.4" fill="#d2a060"/><rect x="2" y="12.3" width="2" height="0.7" fill="#d2a060"/><rect x="4" y="12.4" width="2" height="0.6" fill="#d2a060"/><rect x="6" y="11.9" width="2" height="1.1" fill="#d2a060"/><rect x="8" y="11.1" width="2" height="1.9" fill="#d2a060"/><rect x="10" y="12.5" width="2" height="0.5" fill="#d2a060"/><rect x="12" y="11.2" width="2" height="1.8" fill="#d2a060"/><rect x="14" y="12.3" width="2" height="0.7" fill="#d2a060"/><rect x="16" y="11.2" width="2" height="1.8" fill="#d2a060"/><rect x="18" y="11.7" width="2" height="1.3" fill="#d2a060"/><rect x="20" y="12.0" width="2" height="1.0" fill="#d2a060"/></svg>
<div style="left:1331px;top:822px;width:9px;height:60px;background:#976829;border-radius:3px"></div>
<div style="left:1426px;top:822px;width:27px;height:60px;background:#976829;border-radius:3px;box-shadow:inset 0 0 0 1px rgba(50,30,5,0.75)"></div>
<div class="t" style="left:1430px;top:825.3px;font-size:10.3px;color:#d4b27c;font-weight:normal;">C...</div>
<svg style="position:absolute;left:1428px;top:837px;" width="23" height="29" viewBox="0 0 23 29"><rect x="0" y="0" width="23" height="29" fill="#d6cec6"/><rect x="0" y="20.3" width="23" height="8.7" fill="#cdb096" opacity="0.9"/><ellipse cx="12.5" cy="12.2" rx="5.8" ry="5.8" fill="#d8a898"/><ellipse cx="12.5" cy="7.8" rx="6.1" ry="3.5" fill="#2e2626"/><rect x="7.5" y="16.8" width="10.1" height="12.2" fill="#6a8ad8"/></svg>
<svg style="position:absolute;left:1428px;top:867px;" width="23" height="13" viewBox="0 0 23 13"><rect x="0" y="11.3" width="2" height="1.7" fill="#d2a060"/><rect x="2" y="11.1" width="2" height="1.9" fill="#d2a060"/><rect x="4" y="11.8" width="2" height="1.2" fill="#d2a060"/><rect x="6" y="11.3" width="2" height="1.7" fill="#d2a060"/><rect x="8" y="12.4" width="2" height="0.6" fill="#d2a060"/><rect x="10" y="12.1" width="2" height="0.9" fill="#d2a060"/><rect x="12" y="10.8" width="2" height="2.2" fill="#d2a060"/><rect x="14" y="11.7" width="2" height="1.3" fill="#d2a060"/><rect x="16" y="10.8" width="2" height="2.2" fill="#d2a060"/><rect x="18" y="10.1" width="2" height="2.9" fill="#d2a060"/><rect x="20" y="11.8" width="2" height="1.2" fill="#d2a060"/><rect x="22" y="10.5" width="2" height="2.5" fill="#d2a060"/></svg>
<div style="left:1455px;top:822px;width:118px;height:60px;background:#976829;border-radius:3px;box-shadow:inset 0 0 0 1px rgba(50,30,5,0.75)"></div>
<div class="t" style="left:1459px;top:825.3px;font-size:10.3px;color:#d4b27c;font-weight:normal;">C0294</div>
<svg style="position:absolute;left:1457px;top:837px;" width="114" height="29" viewBox="0 0 114 29"><rect x="0" y="0" width="42" height="29" fill="#dedad6"/><rect x="23.1" y="0" width="5.0" height="21.8" fill="#fafafa"/><rect x="0" y="19.7" width="42" height="9.3" fill="#c9ab8a"/><rect x="12.6" y="10.1" width="2.5" height="13.1" fill="#3a3a48"/><rect x="6.3" y="17.4" width="12.6" height="1.5" fill="#7a6a5a"/><rect x="42" y="0" width="42" height="29" fill="#dedad6"/><rect x="65.1" y="0" width="5.0" height="21.8" fill="#fafafa"/><rect x="42" y="19.7" width="42" height="9.3" fill="#c9ab8a"/><rect x="54.6" y="10.1" width="2.5" height="13.1" fill="#3a3a48"/><rect x="48.3" y="17.4" width="12.6" height="1.5" fill="#7a6a5a"/><rect x="84" y="0" width="30" height="29" fill="#dedad6"/><rect x="100.5" y="0" width="3.6" height="21.8" fill="#fafafa"/><rect x="84" y="19.7" width="30" height="9.3" fill="#c9ab8a"/><rect x="93.0" y="10.1" width="2.5" height="13.1" fill="#3a3a48"/><rect x="88.5" y="17.4" width="9.0" height="1.5" fill="#7a6a5a"/></svg>
<svg style="position:absolute;left:1457px;top:867px;" width="114" height="13" viewBox="0 0 114 13"><rect x="0" y="8.8" width="2" height="4.2" fill="#d2a060"/><rect x="2" y="8.7" width="2" height="4.3" fill="#d2a060"/><rect x="4" y="10.2" width="2" height="2.8" fill="#d2a060"/><rect x="6" y="11.1" width="2" height="1.9" fill="#d2a060"/><rect x="8" y="12.4" width="2" height="0.6" fill="#d2a060"/><rect x="10" y="9.3" width="2" height="3.7" fill="#d2a060"/><rect x="12" y="9.7" width="2" height="3.3" fill="#d2a060"/><rect x="14" y="9.7" width="2" height="3.3" fill="#d2a060"/><rect x="16" y="11.8" width="2" height="1.2" fill="#d2a060"/><rect x="18" y="11.0" width="2" height="2.0" fill="#d2a060"/><rect x="20" y="10.8" width="2" height="2.2" fill="#d2a060"/><rect x="22" y="8.5" width="2" height="4.5" fill="#d2a060"/><rect x="24" y="8.1" width="2" height="4.9" fill="#d2a060"/><rect x="26" y="8.7" width="2" height="4.3" fill="#d2a060"/><rect x="28" y="10.2" width="2" height="2.8" fill="#d2a060"/><rect x="30" y="11.2" width="2" height="1.8" fill="#d2a060"/><rect x="32" y="11.6" width="2" height="1.4" fill="#d2a060"/><rect x="34" y="10.9" width="2" height="2.1" fill="#d2a060"/><rect x="36" y="8.2" width="2" height="4.8" fill="#d2a060"/><rect x="38" y="9.0" width="2" height="4.0" fill="#d2a060"/><rect x="40" y="12.5" width="2" height="0.5" fill="#d2a060"/><rect x="42" y="8.0" width="2" height="5.0" fill="#d2a060"/><rect x="44" y="10.7" width="2" height="2.3" fill="#d2a060"/><rect x="46" y="11.2" width="2" height="1.8" fill="#d2a060"/><rect x="48" y="11.7" width="2" height="1.3" fill="#d2a060"/><rect x="50" y="10.0" width="2" height="3.0" fill="#d2a060"/><rect x="52" y="9.0" width="2" height="4.0" fill="#d2a060"/><rect x="54" y="8.4" width="2" height="4.6" fill="#d2a060"/><rect x="56" y="9.4" width="2" height="3.6" fill="#d2a060"/><rect x="58" y="11.2" width="2" height="1.8" fill="#d2a060"/><rect x="60" y="10.3" width="2" height="2.7" fill="#d2a060"/><rect x="62" y="9.4" width="2" height="3.6" fill="#d2a060"/><rect x="64" y="9.2" width="2" height="3.8" fill="#d2a060"/><rect x="66" y="11.6" width="2" height="1.4" fill="#d2a060"/><rect x="68" y="9.8" width="2" height="3.2" fill="#d2a060"/><rect x="70" y="9.1" width="2" height="3.9" fill="#d2a060"/><rect x="72" y="8.7" width="2" height="4.3" fill="#d2a060"/><rect x="74" y="8.4" width="2" height="4.6" fill="#d2a060"/><rect x="76" y="12.3" width="2" height="0.7" fill="#d2a060"/><rect x="78" y="12.5" width="2" height="0.5" fill="#d2a060"/><rect x="80" y="9.8" width="2" height="3.2" fill="#d2a060"/><rect x="82" y="8.1" width="2" height="4.9" fill="#d2a060"/><rect x="84" y="11.3" width="2" height="1.7" fill="#d2a060"/><rect x="86" y="9.0" width="2" height="4.0" fill="#d2a060"/><rect x="88" y="9.5" width="2" height="3.5" fill="#d2a060"/><rect x="90" y="11.2" width="2" height="1.8" fill="#d2a060"/><rect x="92" y="9.9" width="2" height="3.1" fill="#d2a060"/><rect x="94" y="9.2" width="2" height="3.8" fill="#d2a060"/><rect x="96" y="8.2" width="2" height="4.8" fill="#d2a060"/><rect x="98" y="9.8" width="2" height="3.2" fill="#d2a060"/><rect x="100" y="11.8" width="2" height="1.2" fill="#d2a060"/><rect x="102" y="11.6" width="2" height="1.4" fill="#d2a060"/><rect x="104" y="9.2" width="2" height="3.8" fill="#d2a060"/><rect x="106" y="11.2" width="2" height="1.8" fill="#d2a060"/><rect x="108" y="8.1" width="2" height="4.9" fill="#d2a060"/><rect x="110" y="9.9" width="2" height="3.1" fill="#d2a060"/><rect x="112" y="10.4" width="2" height="2.6" fill="#d2a060"/></svg>
<div style="left:1576px;top:822px;width:65px;height:60px;background:#976829;border-radius:3px;box-shadow:inset 0 0 0 1px rgba(50,30,5,0.75)"></div>
<div class="t" style="left:1580px;top:825.3px;font-size:10.3px;color:#d4b27c;font-weight:normal;">C0287</div>
<svg style="position:absolute;left:1578px;top:837px;" width="61" height="29" viewBox="0 0 61 29"><rect x="0" y="0" width="42" height="29" fill="#e2dedc"/><rect x="0" y="20.9" width="42" height="8.1" fill="#cfa878"/><ellipse cx="7.6" cy="19.1" rx="5.9" ry="7.2" fill="#e6b82a"/><ellipse cx="7.6" cy="8.1" rx="2.5" ry="3.5" fill="#c89a88"/><ellipse cx="21.0" cy="19.1" rx="5.9" ry="7.2" fill="#8a5ae0"/><ellipse cx="21.0" cy="8.1" rx="2.5" ry="3.5" fill="#c89a88"/><ellipse cx="34.4" cy="19.1" rx="5.9" ry="7.2" fill="#e0382a"/><ellipse cx="34.4" cy="8.1" rx="2.5" ry="3.5" fill="#c89a88"/><rect x="42" y="0" width="19" height="29" fill="#e2dedc"/><rect x="42" y="20.9" width="19" height="8.1" fill="#cfa878"/><ellipse cx="45.4" cy="19.1" rx="2.7" ry="7.2" fill="#e6b82a"/><ellipse cx="45.4" cy="8.1" rx="1.1" ry="3.5" fill="#c89a88"/><ellipse cx="51.5" cy="19.1" rx="2.7" ry="7.2" fill="#8a5ae0"/><ellipse cx="51.5" cy="8.1" rx="1.1" ry="3.5" fill="#c89a88"/><ellipse cx="57.6" cy="19.1" rx="2.7" ry="7.2" fill="#e0382a"/><ellipse cx="57.6" cy="8.1" rx="1.1" ry="3.5" fill="#c89a88"/></svg>
<svg style="position:absolute;left:1578px;top:867px;" width="61" height="13" viewBox="0 0 61 13"><rect x="0" y="12.0" width="2" height="1.0" fill="#d2a060"/><rect x="2" y="12.4" width="2" height="0.6" fill="#d2a060"/><rect x="4" y="2.9" width="2" height="10.1" fill="#d2a060"/><rect x="6" y="7.2" width="2" height="5.8" fill="#d2a060"/><rect x="8" y="5.7" width="2" height="7.3" fill="#d2a060"/><rect x="10" y="6.3" width="2" height="6.7" fill="#d2a060"/><rect x="12" y="8.4" width="2" height="4.6" fill="#d2a060"/><rect x="14" y="3.8" width="2" height="9.2" fill="#d2a060"/><rect x="16" y="7.2" width="2" height="5.8" fill="#d2a060"/><rect x="18" y="2.2" width="2" height="10.8" fill="#d2a060"/><rect x="20" y="3.6" width="2" height="9.4" fill="#d2a060"/><rect x="22" y="9.5" width="2" height="3.5" fill="#d2a060"/><rect x="24" y="2.2" width="2" height="10.8" fill="#d2a060"/><rect x="26" y="6.0" width="2" height="7.0" fill="#d2a060"/><rect x="28" y="4.6" width="2" height="8.4" fill="#d2a060"/><rect x="30" y="4.7" width="2" height="8.3" fill="#d2a060"/><rect x="32" y="5.5" width="2" height="7.5" fill="#d2a060"/><rect x="34" y="7.6" width="2" height="5.4" fill="#d2a060"/><rect x="36" y="10.1" width="2" height="2.9" fill="#d2a060"/><rect x="38" y="12.2" width="2" height="0.8" fill="#d2a060"/><rect x="40" y="7.2" width="2" height="5.8" fill="#d2a060"/><rect x="42" y="5.9" width="2" height="7.1" fill="#d2a060"/><rect x="44" y="10.0" width="2" height="3.0" fill="#d2a060"/><rect x="46" y="2.2" width="2" height="10.8" fill="#d2a060"/><rect x="48" y="3.6" width="2" height="9.4" fill="#d2a060"/><rect x="50" y="11.1" width="2" height="1.9" fill="#d2a060"/><rect x="52" y="9.9" width="2" height="3.1" fill="#d2a060"/><rect x="54" y="7.1" width="2" height="5.9" fill="#d2a060"/><rect x="56" y="2.8" width="2" height="10.2" fill="#d2a060"/><rect x="58" y="2.0" width="2" height="11.0" fill="#d2a060"/><rect x="60" y="2.5" width="2" height="10.5" fill="#d2a060"/></svg>
<div style="left:1644px;top:822px;width:118px;height:60px;background:#976829;border-radius:3px;box-shadow:inset 0 0 0 1px rgba(50,30,5,0.75)"></div>
<div class="t" style="left:1648px;top:825.3px;font-size:10.3px;color:#d4b27c;font-weight:normal;">C0294</div>
<svg style="position:absolute;left:1646px;top:837px;" width="114" height="29" viewBox="0 0 114 29"><rect x="0" y="0" width="42" height="29" fill="#dedad6"/><rect x="23.1" y="0" width="5.0" height="21.8" fill="#fafafa"/><rect x="0" y="19.7" width="42" height="9.3" fill="#c9ab8a"/><rect x="12.6" y="10.1" width="2.5" height="13.1" fill="#3a3a48"/><rect x="6.3" y="17.4" width="12.6" height="1.5" fill="#7a6a5a"/><rect x="42" y="0" width="42" height="29" fill="#dedad6"/><rect x="65.1" y="0" width="5.0" height="21.8" fill="#fafafa"/><rect x="42" y="19.7" width="42" height="9.3" fill="#c9ab8a"/><rect x="54.6" y="10.1" width="2.5" height="13.1" fill="#3a3a48"/><rect x="48.3" y="17.4" width="12.6" height="1.5" fill="#7a6a5a"/><rect x="84" y="0" width="30" height="29" fill="#dedad6"/><rect x="100.5" y="0" width="3.6" height="21.8" fill="#fafafa"/><rect x="84" y="19.7" width="30" height="9.3" fill="#c9ab8a"/><rect x="93.0" y="10.1" width="2.5" height="13.1" fill="#3a3a48"/><rect x="88.5" y="17.4" width="9.0" height="1.5" fill="#7a6a5a"/></svg>
<svg style="position:absolute;left:1646px;top:867px;" width="114" height="13" viewBox="0 0 114 13"><rect x="0" y="9.3" width="2" height="3.7" fill="#d2a060"/><rect x="2" y="11.7" width="2" height="1.3" fill="#d2a060"/><rect x="4" y="10.9" width="2" height="2.1" fill="#d2a060"/><rect x="6" y="11.8" width="2" height="1.2" fill="#d2a060"/><rect x="8" y="11.0" width="2" height="2.0" fill="#d2a060"/><rect x="10" y="12.0" width="2" height="1.0" fill="#d2a060"/><rect x="12" y="10.3" width="2" height="2.7" fill="#d2a060"/><rect x="14" y="10.1" width="2" height="2.9" fill="#d2a060"/><rect x="16" y="10.6" width="2" height="2.4" fill="#d2a060"/><rect x="18" y="11.7" width="2" height="1.3" fill="#d2a060"/><rect x="20" y="10.3" width="2" height="2.7" fill="#d2a060"/><rect x="22" y="10.2" width="2" height="2.8" fill="#d2a060"/><rect x="24" y="8.7" width="2" height="4.3" fill="#d2a060"/><rect x="26" y="9.1" width="2" height="3.9" fill="#d2a060"/><rect x="28" y="8.7" width="2" height="4.3" fill="#d2a060"/><rect x="30" y="9.0" width="2" height="4.0" fill="#d2a060"/><rect x="32" y="10.2" width="2" height="2.8" fill="#d2a060"/><rect x="34" y="10.7" width="2" height="2.3" fill="#d2a060"/><rect x="36" y="9.1" width="2" height="3.9" fill="#d2a060"/><rect x="38" y="10.2" width="2" height="2.8" fill="#d2a060"/><rect x="40" y="11.1" width="2" height="1.9" fill="#d2a060"/><rect x="42" y="11.8" width="2" height="1.2" fill="#d2a060"/><rect x="44" y="9.1" width="2" height="3.9" fill="#d2a060"/><rect x="46" y="12.2" width="2" height="0.8" fill="#d2a060"/><rect x="48" y="11.9" width="2" height="1.1" fill="#d2a060"/><rect x="50" y="10.1" width="2" height="2.9" fill="#d2a060"/><rect x="52" y="8.5" width="2" height="4.5" fill="#d2a060"/><rect x="54" y="12.3" width="2" height="0.7" fill="#d2a060"/><rect x="56" y="8.2" width="2" height="4.8" fill="#d2a060"/><rect x="58" y="9.0" width="2" height="4.0" fill="#d2a060"/><rect x="60" y="11.2" width="2" height="1.8" fill="#d2a060"/><rect x="62" y="10.6" width="2" height="2.4" fill="#d2a060"/><rect x="64" y="8.4" width="2" height="4.6" fill="#d2a060"/><rect x="66" y="12.4" width="2" height="0.6" fill="#d2a060"/><rect x="68" y="8.6" width="2" height="4.4" fill="#d2a060"/><rect x="70" y="10.8" width="2" height="2.2" fill="#d2a060"/><rect x="72" y="12.1" width="2" height="0.9" fill="#d2a060"/><rect x="74" y="8.8" width="2" height="4.2" fill="#d2a060"/><rect x="76" y="11.5" width="2" height="1.5" fill="#d2a060"/><rect x="78" y="12.2" width="2" height="0.8" fill="#d2a060"/><rect x="80" y="10.3" width="2" height="2.7" fill="#d2a060"/><rect x="82" y="11.8" width="2" height="1.2" fill="#d2a060"/><rect x="84" y="8.4" width="2" height="4.6" fill="#d2a060"/><rect x="86" y="12.0" width="2" height="1.0" fill="#d2a060"/><rect x="88" y="10.5" width="2" height="2.5" fill="#d2a060"/><rect x="90" y="11.3" width="2" height="1.7" fill="#d2a060"/><rect x="92" y="9.7" width="2" height="3.3" fill="#d2a060"/><rect x="94" y="9.0" width="2" height="4.0" fill="#d2a060"/><rect x="96" y="10.8" width="2" height="2.2" fill="#d2a060"/><rect x="98" y="11.3" width="2" height="1.7" fill="#d2a060"/><rect x="100" y="9.0" width="2" height="4.0" fill="#d2a060"/><rect x="102" y="11.9" width="2" height="1.1" fill="#d2a060"/><rect x="104" y="11.5" width="2" height="1.5" fill="#d2a060"/><rect x="106" y="11.3" width="2" height="1.7" fill="#d2a060"/><rect x="108" y="12.0" width="2" height="1.0" fill="#d2a060"/><rect x="110" y="8.3" width="2" height="4.7" fill="#d2a060"/><rect x="112" y="10.8" width="2" height="2.2" fill="#d2a060"/></svg>
<div style="left:681px;top:822px;width:3px;height:58px;background:#976829"></div>
<div style="left:689px;top:822px;width:3px;height:58px;background:#976829"></div>
<div style="left:698px;top:822px;width:3px;height:58px;background:#976829"></div>
<div style="left:708px;top:822px;width:3px;height:58px;background:#976829"></div>
<div style="left:737px;top:822px;width:16px;height:58px;background:#976829;border-radius:3px;box-shadow:inset 0 0 0 1px rgba(50,30,5,0.75)"></div>
<svg style="position:absolute;left:739px;top:837px;" width="12" height="29" viewBox="0 0 12 29"><rect x="0" y="0" width="12" height="29" fill="#dcd6d0"/><rect x="0" y="20.3" width="12" height="8.7" fill="#cdb096" opacity="0.9"/><ellipse cx="4.8" cy="12.2" rx="3.4" ry="5.8" fill="#d8a898"/><ellipse cx="4.8" cy="7.8" rx="3.6" ry="3.5" fill="#2e2626"/><rect x="2.1" y="16.8" width="5.3" height="12.2" fill="#f4f4f4"/></svg>
<svg style="position:absolute;left:739px;top:865px;" width="12" height="13" viewBox="0 0 12 13"><rect x="0" y="11.8" width="2" height="1.2" fill="#d2a060"/><rect x="2" y="10.3" width="2" height="2.7" fill="#d2a060"/><rect x="4" y="8.1" width="2" height="4.9" fill="#d2a060"/><rect x="6" y="9.7" width="2" height="3.3" fill="#d2a060"/><rect x="8" y="12.3" width="2" height="0.7" fill="#d2a060"/><rect x="10" y="10.5" width="2" height="2.5" fill="#d2a060"/></svg>
<div style="left:1126px;top:822px;width:23px;height:58px;background:#976829;border-radius:3px;box-shadow:inset 0 0 0 1px rgba(50,30,5,0.75)"></div>
<div class="t" style="left:1130px;top:825.3px;font-size:10.3px;color:#d4b27c;font-weight:normal;">C</div>
<svg style="position:absolute;left:1128px;top:837px;" width="19" height="29" viewBox="0 0 19 29"><rect x="0" y="0" width="16" height="29" fill="#ebe8e6"/><rect x="0" y="20.3" width="16" height="8.7" fill="#cdb096" opacity="0.9"/><ellipse cx="10.7" cy="12.2" rx="4.4" ry="5.8" fill="#d8a898"/><ellipse cx="10.7" cy="7.8" rx="4.6" ry="3.5" fill="#2e2626"/><rect x="7.2" y="16.8" width="7.0" height="12.2" fill="#e8d840"/><rect x="16" y="0" width="3" height="29" fill="#dedad6"/><rect x="17.6" y="0" width="0.4" height="21.8" fill="#fafafa"/><rect x="16" y="19.7" width="3" height="9.3" fill="#c9ab8a"/><rect x="16.9" y="10.1" width="2.5" height="13.1" fill="#3a3a48"/><rect x="16.4" y="17.4" width="0.9" height="1.5" fill="#7a6a5a"/></svg>
<svg style="position:absolute;left:1128px;top:865px;" width="19" height="13" viewBox="0 0 19 13"><rect x="0" y="12.2" width="2" height="0.8" fill="#d2a060"/><rect x="2" y="12.0" width="2" height="1.0" fill="#d2a060"/><rect x="4" y="11.2" width="2" height="1.8" fill="#d2a060"/><rect x="6" y="12.2" width="2" height="0.8" fill="#d2a060"/><rect x="8" y="11.9" width="2" height="1.1" fill="#d2a060"/><rect x="10" y="11.8" width="2" height="1.2" fill="#d2a060"/><rect x="12" y="11.9" width="2" height="1.1" fill="#d2a060"/><rect x="14" y="11.9" width="2" height="1.1" fill="#d2a060"/><rect x="16" y="12.4" width="2" height="0.6" fill="#d2a060"/><rect x="18" y="11.0" width="2" height="2.0" fill="#d2a060"/></svg>
<div style="left:40px;top:891px;width:19px;height:61px;background:#976829;border-radius:3px;box-shadow:inset 0 0 0 1px rgba(50,30,5,0.75)"></div>
<svg style="position:absolute;left:42px;top:906px;" width="15" height="29" viewBox="0 0 15 29"><rect x="0" y="0" width="15" height="29" fill="#dedad6"/><rect x="8.2" y="0" width="1.8" height="21.8" fill="#fafafa"/><rect x="0" y="19.7" width="15" height="9.3" fill="#c9ab8a"/><rect x="4.5" y="10.1" width="2.5" height="13.1" fill="#3a3a48"/><rect x="2.2" y="17.4" width="4.5" height="1.5" fill="#7a6a5a"/></svg>
<svg style="position:absolute;left:42px;top:937px;" width="15" height="13" viewBox="0 0 15 13"><rect x="0" y="12.0" width="2" height="1.0" fill="#d2a060"/><rect x="2" y="11.4" width="2" height="1.6" fill="#d2a060"/><rect x="4" y="11.8" width="2" height="1.2" fill="#d2a060"/><rect x="6" y="12.1" width="2" height="0.9" fill="#d2a060"/><rect x="8" y="11.7" width="2" height="1.3" fill="#d2a060"/><rect x="10" y="12.2" width="2" height="0.8" fill="#d2a060"/><rect x="12" y="11.6" width="2" height="1.4" fill="#d2a060"/><rect x="14" y="11.1" width="2" height="1.9" fill="#d2a060"/></svg>
<div style="left:60px;top:891px;width:18px;height:61px;background:#2b4a7a;border-radius:3px;box-shadow:inset 0 0 0 1px rgba(50,30,5,0.75)"></div>
<svg style="position:absolute;left:62px;top:906px;" width="14" height="29" viewBox="0 0 14 29"><rect x="0" y="0" width="14" height="29" fill="#dedad6"/><rect x="7.7" y="0" width="1.7" height="21.8" fill="#fafafa"/><rect x="0" y="19.7" width="14" height="9.3" fill="#c9ab8a"/><rect x="4.2" y="10.1" width="2.5" height="13.1" fill="#3a3a48"/><rect x="2.1" y="17.4" width="4.2" height="1.5" fill="#7a6a5a"/></svg>
<svg style="position:absolute;left:62px;top:937px;" width="14" height="13" viewBox="0 0 14 13"><rect x="0" y="12.1" width="2" height="0.9" fill="#d2a060"/><rect x="2" y="6.7" width="2" height="6.3" fill="#d2a060"/><rect x="4" y="5.4" width="2" height="7.6" fill="#d2a060"/><rect x="6" y="6.2" width="2" height="6.8" fill="#d2a060"/><rect x="8" y="6.8" width="2" height="6.2" fill="#d2a060"/><rect x="10" y="6.1" width="2" height="6.9" fill="#d2a060"/><rect x="12" y="7.2" width="2" height="5.8" fill="#d2a060"/></svg>
<div style="left:79px;top:891px;width:13px;height:61px;background:#976829;border-radius:3px;box-shadow:inset 0 0 0 1px rgba(50,30,5,0.75)"></div>
<svg style="position:absolute;left:81px;top:906px;" width="9" height="29" viewBox="0 0 9 29"><rect x="0" y="0" width="9" height="29" fill="#e6e4e2"/><rect x="0" y="20.3" width="9" height="8.7" fill="#d6b894"/></svg>
<svg style="position:absolute;left:81px;top:937px;" width="9" height="13" viewBox="0 0 9 13"><rect x="0" y="12.3" width="2" height="0.7" fill="#d2a060"/><rect x="2" y="4.1" width="2" height="8.9" fill="#d2a060"/><rect x="4" y="11.6" width="2" height="1.4" fill="#d2a060"/><rect x="6" y="6.2" width="2" height="6.8" fill="#d2a060"/><rect x="8" y="4.1" width="2" height="8.9" fill="#d2a060"/></svg>
<div style="left:93px;top:891px;width:18px;height:61px;background:#976829;border-radius:3px;box-shadow:inset 0 0 0 1px rgba(50,30,5,0.75)"></div>
<svg style="position:absolute;left:95px;top:906px;" width="14" height="29" viewBox="0 0 14 29"><rect x="0" y="0" width="14" height="29" fill="#dedad6"/><rect x="7.7" y="0" width="1.7" height="21.8" fill="#fafafa"/><rect x="0" y="19.7" width="14" height="9.3" fill="#c9ab8a"/><rect x="4.2" y="10.1" width="2.5" height="13.1" fill="#3a3a48"/><rect x="2.1" y="17.4" width="4.2" height="1.5" fill="#7a6a5a"/></svg>
<svg style="position:absolute;left:95px;top:937px;" width="14" height="13" viewBox="0 0 14 13"><rect x="0" y="11.7" width="2" height="1.3" fill="#d2a060"/><rect x="2" y="11.3" width="2" height="1.7" fill="#d2a060"/><rect x="4" y="11.7" width="2" height="1.3" fill="#d2a060"/><rect x="6" y="11.2" width="2" height="1.8" fill="#d2a060"/><rect x="8" y="11.2" width="2" height="1.8" fill="#d2a060"/><rect x="10" y="11.6" width="2" height="1.4" fill="#d2a060"/><rect x="12" y="12.5" width="2" height="0.5" fill="#d2a060"/></svg>
<div style="left:112px;top:891px;width:32px;height:61px;background:#976829;border-radius:3px;box-shadow:inset 0 0 0 1px rgba(50,30,5,0.75)"></div>
<div class="t" style="left:116px;top:894.3px;font-size:10.3px;color:#d4b27c;font-weight:normal;">C…</div>
<svg style="position:absolute;left:114px;top:906px;" width="28" height="29" viewBox="0 0 28 29"><rect x="0" y="0" width="28" height="29" fill="#dedad6"/><rect x="15.4" y="0" width="3.4" height="21.8" fill="#fafafa"/><rect x="0" y="19.7" width="28" height="9.3" fill="#c9ab8a"/><rect x="8.4" y="10.1" width="2.5" height="13.1" fill="#3a3a48"/><rect x="4.2" y="17.4" width="8.4" height="1.5" fill="#7a6a5a"/></svg>
<svg style="position:absolute;left:114px;top:937px;" width="28" height="13" viewBox="0 0 28 13"><rect x="0" y="11.4" width="2" height="1.6" fill="#d2a060"/><rect x="2" y="11.7" width="2" height="1.3" fill="#d2a060"/><rect x="4" y="12.2" width="2" height="0.8" fill="#d2a060"/><rect x="6" y="12.0" width="2" height="1.0" fill="#d2a060"/><rect x="8" y="11.9" width="2" height="1.1" fill="#d2a060"/><rect x="10" y="11.4" width="2" height="1.6" fill="#d2a060"/><rect x="12" y="11.2" width="2" height="1.8" fill="#d2a060"/><rect x="14" y="11.2" width="2" height="1.8" fill="#d2a060"/><rect x="16" y="11.3" width="2" height="1.7" fill="#d2a060"/><rect x="18" y="11.4" width="2" height="1.6" fill="#d2a060"/><rect x="20" y="12.0" width="2" height="1.0" fill="#d2a060"/><rect x="22" y="12.4" width="2" height="0.6" fill="#d2a060"/><rect x="24" y="12.0" width="2" height="1.0" fill="#d2a060"/><rect x="26" y="11.6" width="2" height="1.4" fill="#d2a060"/></svg>
<div style="left:145px;top:891px;width:17px;height:61px;background:#976829;border-radius:3px;box-shadow:inset 0 0 0 1px rgba(50,30,5,0.75)"></div>
<svg style="position:absolute;left:147px;top:906px;" width="13" height="29" viewBox="0 0 13 29"><rect x="0" y="0" width="13" height="29" fill="#dedad6"/><rect x="7.2" y="0" width="1.6" height="21.8" fill="#fafafa"/><rect x="0" y="19.7" width="13" height="9.3" fill="#c9ab8a"/><rect x="3.9" y="10.1" width="2.5" height="13.1" fill="#3a3a48"/><rect x="1.9" y="17.4" width="3.9" height="1.5" fill="#7a6a5a"/></svg>
<svg style="position:absolute;left:147px;top:937px;" width="13" height="13" viewBox="0 0 13 13"><rect x="0" y="12.4" width="2" height="0.6" fill="#d2a060"/><rect x="2" y="6.2" width="2" height="6.8" fill="#d2a060"/><rect x="4" y="2.6" width="2" height="10.4" fill="#d2a060"/><rect x="6" y="11.4" width="2" height="1.6" fill="#d2a060"/><rect x="8" y="3.8" width="2" height="9.2" fill="#d2a060"/><rect x="10" y="7.0" width="2" height="6.0" fill="#d2a060"/><rect x="12" y="10.9" width="2" height="2.1" fill="#d2a060"/></svg>
<div style="left:163px;top:891px;width:7px;height:61px;background:#976829;border-radius:3px;box-shadow:inset 0 0 0 1px rgba(50,30,5,0.75)"></div>
<svg style="position:absolute;left:165px;top:906px;" width="3" height="29" viewBox="0 0 3 29"><rect x="0" y="0" width="3" height="29" fill="#dcd6d0"/><rect x="0" y="20.3" width="3" height="8.7" fill="#cdb096" opacity="0.9"/><ellipse cx="1.4" cy="12.2" rx="0.7" ry="5.8" fill="#d8a898"/><ellipse cx="1.4" cy="7.8" rx="0.7" ry="3.5" fill="#2e2626"/><rect x="0.8" y="16.8" width="1.3" height="12.2" fill="#888"/></svg>
<svg style="position:absolute;left:165px;top:937px;" width="3" height="13" viewBox="0 0 3 13"><rect x="0" y="12.4" width="2" height="0.6" fill="#d2a060"/><rect x="2" y="8.8" width="2" height="4.2" fill="#d2a060"/></svg>
<div style="left:171px;top:891px;width:33px;height:61px;background:#976829;border-radius:3px;box-shadow:inset 0 0 0 1px rgba(50,30,5,0.75)"></div>
<div class="t" style="left:175px;top:894.3px;font-size:10.3px;color:#d4b27c;font-weight:normal;">C0...</div>
<svg style="position:absolute;left:173px;top:906px;" width="29" height="29" viewBox="0 0 29 29"><rect x="0" y="0" width="29" height="29" fill="#dedad6"/><rect x="16.0" y="0" width="3.5" height="21.8" fill="#fafafa"/><rect x="0" y="19.7" width="29" height="9.3" fill="#c9ab8a"/><rect x="8.7" y="10.1" width="2.5" height="13.1" fill="#3a3a48"/><rect x="4.3" y="17.4" width="8.7" height="1.5" fill="#7a6a5a"/></svg>
<svg style="position:absolute;left:173px;top:937px;" width="29" height="13" viewBox="0 0 29 13"><rect x="0" y="8.4" width="2" height="4.6" fill="#d2a060"/><rect x="2" y="5.7" width="2" height="7.3" fill="#d2a060"/><rect x="4" y="12.0" width="2" height="1.0" fill="#d2a060"/><rect x="6" y="5.6" width="2" height="7.4" fill="#d2a060"/><rect x="8" y="5.7" width="2" height="7.3" fill="#d2a060"/><rect x="10" y="5.7" width="2" height="7.3" fill="#d2a060"/><rect x="12" y="10.3" width="2" height="2.7" fill="#d2a060"/><rect x="14" y="9.4" width="2" height="3.6" fill="#d2a060"/><rect x="16" y="10.5" width="2" height="2.5" fill="#d2a060"/><rect x="18" y="2.6" width="2" height="10.4" fill="#d2a060"/><rect x="20" y="7.9" width="2" height="5.1" fill="#d2a060"/><rect x="22" y="4.0" width="2" height="9.0" fill="#d2a060"/><rect x="24" y="11.8" width="2" height="1.2" fill="#d2a060"/><rect x="26" y="8.4" width="2" height="4.6" fill="#d2a060"/><rect x="28" y="6.9" width="2" height="6.1" fill="#d2a060"/></svg>
<div style="left:205px;top:891px;width:15px;height:61px;background:#976829;border-radius:3px;box-shadow:inset 0 0 0 1px rgba(50,30,5,0.75)"></div>
<div class="t" style="left:209px;top:894.3px;font-size:10.3px;color:#d4b27c;font-weight:normal;">C</div>
<svg style="position:absolute;left:207px;top:906px;" width="11" height="29" viewBox="0 0 11 29"><rect x="0" y="0" width="11" height="29" fill="#e6e4e2"/><rect x="0" y="20.3" width="11" height="8.7" fill="#d6b894"/></svg>
<svg style="position:absolute;left:207px;top:937px;" width="11" height="13" viewBox="0 0 11 13"><rect x="0" y="10.6" width="2" height="2.4" fill="#d2a060"/><rect x="2" y="10.6" width="2" height="2.4" fill="#d2a060"/><rect x="4" y="12.3" width="2" height="0.7" fill="#d2a060"/><rect x="6" y="11.5" width="2" height="1.5" fill="#d2a060"/><rect x="8" y="10.1" width="2" height="2.9" fill="#d2a060"/><rect x="10" y="10.3" width="2" height="2.7" fill="#d2a060"/></svg>
<div style="left:221px;top:891px;width:19px;height:61px;background:#976829;border-radius:3px;box-shadow:inset 0 0 0 1px rgba(50,30,5,0.75)"></div>
<svg style="position:absolute;left:223px;top:906px;" width="15" height="29" viewBox="0 0 15 29"><rect x="0" y="0" width="15" height="29" fill="#d6cec6"/><rect x="0" y="20.3" width="15" height="8.7" fill="#cdb096" opacity="0.9"/><ellipse cx="10.5" cy="12.2" rx="4.1" ry="5.8" fill="#d8a898"/><ellipse cx="10.5" cy="7.8" rx="4.3" ry="3.5" fill="#2e2626"/><rect x="7.2" y="16.8" width="6.6" height="12.2" fill="#6a8ad8"/></svg>
<svg style="position:absolute;left:223px;top:937px;" width="15" height="13" viewBox="0 0 15 13"><rect x="0" y="11.1" width="2" height="1.9" fill="#d2a060"/><rect x="2" y="11.5" width="2" height="1.5" fill="#d2a060"/><rect x="4" y="12.4" width="2" height="0.6" fill="#d2a060"/><rect x="6" y="10.6" width="2" height="2.4" fill="#d2a060"/><rect x="8" y="11.5" width="2" height="1.5" fill="#d2a060"/><rect x="10" y="10.2" width="2" height="2.8" fill="#d2a060"/><rect x="12" y="10.5" width="2" height="2.5" fill="#d2a060"/><rect x="14" y="10.1" width="2" height="2.9" fill="#d2a060"/></svg>
<div style="left:241px;top:891px;width:26px;height:61px;background:#976829;border-radius:3px;box-shadow:inset 0 0 0 1px rgba(50,30,5,0.75)"></div>
<div class="t" style="left:245px;top:894.3px;font-size:10.3px;color:#d4b27c;font-weight:normal;">C...</div>
<svg style="position:absolute;left:243px;top:906px;" width="22" height="29" viewBox="0 0 22 29"><rect x="0" y="0" width="20" height="29" fill="#e6e4e2"/><rect x="0" y="20.3" width="20" height="8.7" fill="#d6b894"/><rect x="20" y="0" width="2" height="29" fill="#d6cec6"/><rect x="20" y="20.3" width="2" height="8.7" fill="#cdb096" opacity="0.9"/><ellipse cx="20.9" cy="12.2" rx="0.4" ry="5.8" fill="#d8a898"/><ellipse cx="20.9" cy="7.8" rx="0.4" ry="3.5" fill="#2e2626"/><rect x="20.5" y="16.8" width="0.9" height="12.2" fill="#e8a8a8"/></svg>
<svg style="position:absolute;left:243px;top:937px;" width="22" height="13" viewBox="0 0 22 13"><rect x="0" y="9.7" width="2" height="3.3" fill="#d2a060"/><rect x="2" y="9.1" width="2" height="3.9" fill="#d2a060"/><rect x="4" y="9.7" width="2" height="3.3" fill="#d2a060"/><rect x="6" y="11.8" width="2" height="1.2" fill="#d2a060"/><rect x="8" y="12.3" width="2" height="0.7" fill="#d2a060"/><rect x="10" y="9.4" width="2" height="3.6" fill="#d2a060"/><rect x="12" y="11.7" width="2" height="1.3" fill="#d2a060"/><rect x="14" y="11.3" width="2" height="1.7" fill="#d2a060"/><rect x="16" y="12.0" width="2" height="1.0" fill="#d2a060"/><rect x="18" y="11.5" width="2" height="1.5" fill="#d2a060"/><rect x="20" y="9.4" width="2" height="3.6" fill="#d2a060"/></svg>
<div style="left:268px;top:891px;width:19px;height:61px;background:#976829;border-radius:3px;box-shadow:inset 0 0 0 1px rgba(50,30,5,0.75)"></div>
<svg style="position:absolute;left:270px;top:906px;" width="15" height="29" viewBox="0 0 15 29"><rect x="0" y="0" width="15" height="29" fill="#e4e0dc"/><rect x="0" y="20.3" width="15" height="8.7" fill="#cdb096" opacity="0.9"/><ellipse cx="7.0" cy="12.2" rx="4.0" ry="5.8" fill="#d8a898"/><ellipse cx="7.0" cy="7.8" rx="4.2" ry="3.5" fill="#2e2626"/><rect x="3.7" y="16.8" width="6.6" height="12.2" fill="#6a8ad8"/></svg>
<svg style="position:absolute;left:270px;top:937px;" width="15" height="13" viewBox="0 0 15 13"><rect x="0" y="10.3" width="2" height="2.7" fill="#d2a060"/><rect x="2" y="11.4" width="2" height="1.6" fill="#d2a060"/><rect x="4" y="10.9" width="2" height="2.1" fill="#d2a060"/><rect x="6" y="11.4" width="2" height="1.6" fill="#d2a060"/><rect x="8" y="10.3" width="2" height="2.7" fill="#d2a060"/><rect x="10" y="10.0" width="2" height="3.0" fill="#d2a060"/><rect x="12" y="10.0" width="2" height="3.0" fill="#d2a060"/><rect x="14" y="12.0" width="2" height="1.0" fill="#d2a060"/></svg>
<div style="left:288px;top:891px;width:18px;height:61px;background:#976829;border-radius:3px;box-shadow:inset 0 0 0 1px rgba(50,30,5,0.75)"></div>
<svg style="position:absolute;left:290px;top:906px;" width="14" height="29" viewBox="0 0 14 29"><rect x="0" y="0" width="14" height="29" fill="#dcd6d0"/><rect x="0" y="20.3" width="14" height="8.7" fill="#cdb096" opacity="0.9"/><ellipse cx="6.5" cy="12.2" rx="3.6" ry="5.8" fill="#d8a898"/><ellipse cx="6.5" cy="7.8" rx="3.8" ry="3.5" fill="#2e2626"/><rect x="3.4" y="16.8" width="6.2" height="12.2" fill="#e8d840"/></svg>
<svg style="position:absolute;left:290px;top:937px;" width="14" height="13" viewBox="0 0 14 13"><rect x="0" y="6.8" width="2" height="6.2" fill="#d2a060"/><rect x="2" y="5.9" width="2" height="7.1" fill="#d2a060"/><rect x="4" y="4.0" width="2" height="9.0" fill="#d2a060"/><rect x="6" y="10.7" width="2" height="2.3" fill="#d2a060"/><rect x="8" y="3.0" width="2" height="10.0" fill="#d2a060"/><rect x="10" y="5.6" width="2" height="7.4" fill="#d2a060"/><rect x="12" y="12.3" width="2" height="0.7" fill="#d2a060"/></svg>
<div style="left:307px;top:891px;width:20px;height:61px;background:#976829;border-radius:3px;box-shadow:inset 0 0 0 1px rgba(50,30,5,0.75)"></div>
<div class="t" style="left:311px;top:894.3px;font-size:10.3px;color:#d4b27c;font-weight:normal;">C</div>
<svg style="position:absolute;left:309px;top:906px;" width="16" height="29" viewBox="0 0 16 29"><rect x="0" y="0" width="16" height="29" fill="#dedad6"/><rect x="8.8" y="0" width="1.9" height="21.8" fill="#fafafa"/><rect x="0" y="19.7" width="16" height="9.3" fill="#c9ab8a"/><rect x="4.8" y="10.1" width="2.5" height="13.1" fill="#3a3a48"/><rect x="2.4" y="17.4" width="4.8" height="1.5" fill="#7a6a5a"/></svg>
<svg style="position:absolute;left:309px;top:937px;" width="16" height="13" viewBox="0 0 16 13"><rect x="0" y="11.8" width="2" height="1.2" fill="#d2a060"/><rect x="2" y="12.2" width="2" height="0.8" fill="#d2a060"/><rect x="4" y="11.6" width="2" height="1.4" fill="#d2a060"/><rect x="6" y="11.7" width="2" height="1.3" fill="#d2a060"/><rect x="8" y="11.2" width="2" height="1.8" fill="#d2a060"/><rect x="10" y="11.0" width="2" height="2.0" fill="#d2a060"/><rect x="12" y="12.0" width="2" height="1.0" fill="#d2a060"/><rect x="14" y="11.8" width="2" height="1.2" fill="#d2a060"/></svg>
<div style="left:328px;top:891px;width:15px;height:61px;background:#976829;border-radius:3px;box-shadow:inset 0 0 0 1px rgba(50,30,5,0.75)"></div>
<div class="t" style="left:332px;top:894.3px;font-size:10.3px;color:#d4b27c;font-weight:normal;">C</div>
<svg style="position:absolute;left:330px;top:906px;" width="11" height="29" viewBox="0 0 11 29"><rect x="0" y="0" width="11" height="29" fill="#e6e4e2"/><rect x="0" y="20.3" width="11" height="8.7" fill="#d6b894"/></svg>
<svg style="position:absolute;left:330px;top:937px;" width="11" height="13" viewBox="0 0 11 13"><rect x="0" y="6.3" width="2" height="6.7" fill="#d2a060"/><rect x="2" y="6.1" width="2" height="6.9" fill="#d2a060"/><rect x="4" y="6.5" width="2" height="6.5" fill="#d2a060"/><rect x="6" y="10.0" width="2" height="3.0" fill="#d2a060"/><rect x="8" y="6.2" width="2" height="6.8" fill="#d2a060"/><rect x="10" y="8.2" width="2" height="4.8" fill="#d2a060"/></svg>
<div style="left:344px;top:891px;width:13px;height:61px;background:#976829;border-radius:3px;box-shadow:inset 0 0 0 1px rgba(50,30,5,0.75)"></div>
<svg style="position:absolute;left:346px;top:906px;" width="9" height="29" viewBox="0 0 9 29"><rect x="0" y="0" width="9" height="29" fill="#dedad6"/><rect x="5.0" y="0" width="1.1" height="21.8" fill="#fafafa"/><rect x="0" y="19.7" width="9" height="9.3" fill="#c9ab8a"/><rect x="2.7" y="10.1" width="2.5" height="13.1" fill="#3a3a48"/><rect x="1.3" y="17.4" width="2.7" height="1.5" fill="#7a6a5a"/></svg>
<svg style="position:absolute;left:346px;top:937px;" width="9" height="13" viewBox="0 0 9 13"><rect x="0" y="9.9" width="2" height="3.1" fill="#d2a060"/><rect x="2" y="11.6" width="2" height="1.4" fill="#d2a060"/><rect x="4" y="11.0" width="2" height="2.0" fill="#d2a060"/><rect x="6" y="11.6" width="2" height="1.4" fill="#d2a060"/><rect x="8" y="10.5" width="2" height="2.5" fill="#d2a060"/></svg>
<div style="left:358px;top:891px;width:10px;height:61px;background:#976829;border-radius:3px;box-shadow:inset 0 0 0 1px rgba(50,30,5,0.75)"></div>
<svg style="position:absolute;left:360px;top:906px;" width="6" height="29" viewBox="0 0 6 29"><rect x="0" y="0" width="6" height="29" fill="#ebe8e6"/><rect x="0" y="20.3" width="6" height="8.7" fill="#cdb096" opacity="0.9"/><ellipse cx="3.6" cy="12.2" rx="1.3" ry="5.8" fill="#d8a898"/><ellipse cx="3.6" cy="7.8" rx="1.4" ry="3.5" fill="#2e2626"/><rect x="2.2" y="16.8" width="2.6" height="12.2" fill="#f4f4f4"/></svg>
<svg style="position:absolute;left:360px;top:937px;" width="6" height="13" viewBox="0 0 6 13"><rect x="0" y="11.5" width="2" height="1.5" fill="#d2a060"/><rect x="2" y="11.0" width="2" height="2.0" fill="#d2a060"/><rect x="4" y="12.3" width="2" height="0.7" fill="#d2a060"/></svg>
<div style="left:369px;top:891px;width:8px;height:61px;background:#976829;border-radius:3px;box-shadow:inset 0 0 0 1px rgba(50,30,5,0.75)"></div>
<svg style="position:absolute;left:371px;top:906px;" width="4" height="29" viewBox="0 0 4 29"><rect x="0" y="0" width="4" height="29" fill="#dedad6"/><rect x="2.2" y="0" width="0.5" height="21.8" fill="#fafafa"/><rect x="0" y="19.7" width="4" height="9.3" fill="#c9ab8a"/><rect x="1.2" y="10.1" width="2.5" height="13.1" fill="#3a3a48"/><rect x="0.6" y="17.4" width="1.2" height="1.5" fill="#7a6a5a"/></svg>
<svg style="position:absolute;left:371px;top:937px;" width="4" height="13" viewBox="0 0 4 13"><rect x="0" y="5.1" width="2" height="7.9" fill="#d2a060"/><rect x="2" y="8.4" width="2" height="4.6" fill="#d2a060"/></svg>
<div style="left:378px;top:891px;width:42px;height:61px;background:#976829;border-radius:3px;box-shadow:inset 0 0 0 1px rgba(50,30,5,0.75)"></div>
<div class="t" style="left:382px;top:894.3px;font-size:10.3px;color:#d4b27c;font-weight:normal;">C0158</div>
<svg style="position:absolute;left:380px;top:906px;" width="38" height="29" viewBox="0 0 38 29"><rect x="0" y="0" width="38" height="29" fill="#e2dedc"/><rect x="0" y="20.9" width="38" height="8.1" fill="#cfa878"/><ellipse cx="6.8" cy="19.1" rx="5.3" ry="7.2" fill="#e6b82a"/><ellipse cx="6.8" cy="8.1" rx="2.3" ry="3.5" fill="#c89a88"/><ellipse cx="19.0" cy="19.1" rx="5.3" ry="7.2" fill="#8a5ae0"/><ellipse cx="19.0" cy="8.1" rx="2.3" ry="3.5" fill="#c89a88"/><ellipse cx="31.2" cy="19.1" rx="5.3" ry="7.2" fill="#e0382a"/><ellipse cx="31.2" cy="8.1" rx="2.3" ry="3.5" fill="#c89a88"/></svg>
<svg style="position:absolute;left:380px;top:937px;" width="38" height="13" viewBox="0 0 38 13"><rect x="0" y="11.4" width="2" height="1.6" fill="#d2a060"/><rect x="2" y="10.5" width="2" height="2.5" fill="#d2a060"/><rect x="4" y="10.0" width="2" height="3.0" fill="#d2a060"/><rect x="6" y="12.0" width="2" height="1.0" fill="#d2a060"/><rect x="8" y="12.3" width="2" height="0.7" fill="#d2a060"/><rect x="10" y="11.2" width="2" height="1.8" fill="#d2a060"/><rect x="12" y="11.2" width="2" height="1.8" fill="#d2a060"/><rect x="14" y="10.1" width="2" height="2.9" fill="#d2a060"/><rect x="16" y="11.9" width="2" height="1.1" fill="#d2a060"/><rect x="18" y="11.0" width="2" height="2.0" fill="#d2a060"/><rect x="20" y="10.7" width="2" height="2.3" fill="#d2a060"/><rect x="22" y="11.2" width="2" height="1.8" fill="#d2a060"/><rect x="24" y="11.9" width="2" height="1.1" fill="#d2a060"/><rect x="26" y="10.6" width="2" height="2.4" fill="#d2a060"/><rect x="28" y="10.4" width="2" height="2.6" fill="#d2a060"/><rect x="30" y="11.9" width="2" height="1.1" fill="#d2a060"/><rect x="32" y="10.6" width="2" height="2.4" fill="#d2a060"/><rect x="34" y="10.4" width="2" height="2.6" fill="#d2a060"/><rect x="36" y="12.2" width="2" height="0.8" fill="#d2a060"/></svg>
<div style="left:421px;top:891px;width:19px;height:61px;background:#976829;border-radius:3px;box-shadow:inset 0 0 0 1px rgba(50,30,5,0.75)"></div>
<svg style="position:absolute;left:423px;top:906px;" width="15" height="29" viewBox="0 0 15 29"><rect x="0" y="0" width="15" height="29" fill="#dedad6"/><rect x="8.2" y="0" width="1.8" height="21.8" fill="#fafafa"/><rect x="0" y="19.7" width="15" height="9.3" fill="#c9ab8a"/><rect x="4.5" y="10.1" width="2.5" height="13.1" fill="#3a3a48"/><rect x="2.2" y="17.4" width="4.5" height="1.5" fill="#7a6a5a"/></svg>
<svg style="position:absolute;left:423px;top:937px;" width="15" height="13" viewBox="0 0 15 13"><rect x="0" y="11.2" width="2" height="1.8" fill="#d2a060"/><rect x="2" y="8.3" width="2" height="4.7" fill="#d2a060"/><rect x="4" y="5.5" width="2" height="7.5" fill="#d2a060"/><rect x="6" y="9.4" width="2" height="3.6" fill="#d2a060"/><rect x="8" y="7.9" width="2" height="5.1" fill="#d2a060"/><rect x="10" y="6.7" width="2" height="6.3" fill="#d2a060"/><rect x="12" y="10.0" width="2" height="3.0" fill="#d2a060"/><rect x="14" y="12.1" width="2" height="0.9" fill="#d2a060"/></svg>
<div style="left:441px;top:891px;width:9px;height:61px;background:#976829;border-radius:3px;box-shadow:inset 0 0 0 1px rgba(50,30,5,0.75)"></div>
<svg style="position:absolute;left:443px;top:906px;" width="5" height="29" viewBox="0 0 5 29"><rect x="0" y="0" width="5" height="29" fill="#dedad6"/><rect x="2.8" y="0" width="0.6" height="21.8" fill="#fafafa"/><rect x="0" y="19.7" width="5" height="9.3" fill="#c9ab8a"/><rect x="1.5" y="10.1" width="2.5" height="13.1" fill="#3a3a48"/><rect x="0.8" y="17.4" width="1.5" height="1.5" fill="#7a6a5a"/></svg>
<svg style="position:absolute;left:443px;top:937px;" width="5" height="13" viewBox="0 0 5 13"><rect x="0" y="10.5" width="2" height="2.5" fill="#d2a060"/><rect x="2" y="10.2" width="2" height="2.8" fill="#d2a060"/><rect x="4" y="12.1" width="2" height="0.9" fill="#d2a060"/></svg>
<div style="left:451px;top:891px;width:38px;height:61px;background:#976829;border-radius:3px;box-shadow:inset 0 0 0 1px rgba(50,30,5,0.75)"></div>
<div class="t" style="left:455px;top:894.3px;font-size:10.3px;color:#d4b27c;font-weight:normal;">C…</div>
<svg style="position:absolute;left:453px;top:906px;" width="34" height="29" viewBox="0 0 34 29"><rect x="0" y="0" width="20" height="29" fill="#e6e4e2"/><rect x="0" y="20.3" width="20" height="8.7" fill="#d6b894"/><rect x="20" y="0" width="14" height="29" fill="#d6cec6"/><rect x="20" y="20.3" width="14" height="8.7" fill="#cdb096" opacity="0.9"/><ellipse cx="27.6" cy="12.2" rx="3.8" ry="5.8" fill="#d8a898"/><ellipse cx="27.6" cy="7.8" rx="3.9" ry="3.5" fill="#2e2626"/><rect x="24.5" y="16.8" width="6.2" height="12.2" fill="#e8d840"/></svg>
<svg style="position:absolute;left:453px;top:937px;" width="34" height="13" viewBox="0 0 34 13"><rect x="0" y="6.0" width="2" height="7.0" fill="#d2a060"/><rect x="2" y="5.5" width="2" height="7.5" fill="#d2a060"/><rect x="4" y="7.7" width="2" height="5.3" fill="#d2a060"/><rect x="6" y="7.9" width="2" height="5.1" fill="#d2a060"/><rect x="8" y="8.6" width="2" height="4.4" fill="#d2a060"/><rect x="10" y="8.1" width="2" height="4.9" fill="#d2a060"/><rect x="12" y="10.8" width="2" height="2.2" fill="#d2a060"/><rect x="14" y="11.5" width="2" height="1.5" fill="#d2a060"/><rect x="16" y="4.1" width="2" height="8.9" fill="#d2a060"/><rect x="18" y="2.9" width="2" height="10.1" fill="#d2a060"/><rect x="20" y="8.2" width="2" height="4.8" fill="#d2a060"/><rect x="22" y="10.3" width="2" height="2.7" fill="#d2a060"/><rect x="24" y="10.9" width="2" height="2.1" fill="#d2a060"/><rect x="26" y="7.8" width="2" height="5.2" fill="#d2a060"/><rect x="28" y="5.1" width="2" height="7.9" fill="#d2a060"/><rect x="30" y="10.8" width="2" height="2.2" fill="#d2a060"/><rect x="32" y="2.7" width="2" height="10.3" fill="#d2a060"/></svg>
<div style="left:490px;top:891px;width:9px;height:61px;background:#2b4a7a;border-radius:3px;box-shadow:inset 0 0 0 1px rgba(50,30,5,0.75)"></div>
<svg style="position:absolute;left:492px;top:906px;" width="5" height="29" viewBox="0 0 5 29"><rect x="0" y="0" width="5" height="29" fill="#ebe8e6"/><rect x="0" y="20.3" width="5" height="8.7" fill="#cdb096" opacity="0.9"/><ellipse cx="1.7" cy="12.2" rx="1.2" ry="5.8" fill="#d8a898"/><ellipse cx="1.7" cy="7.8" rx="1.3" ry="3.5" fill="#2e2626"/><rect x="0.6" y="16.8" width="2.2" height="12.2" fill="#f4f4f4"/></svg>
<svg style="position:absolute;left:492px;top:937px;" width="5" height="13" viewBox="0 0 5 13"><rect x="0" y="6.1" width="2" height="6.9" fill="#d2a060"/><rect x="2" y="8.4" width="2" height="4.6" fill="#d2a060"/><rect x="4" y="10.6" width="2" height="2.4" fill="#d2a060"/></svg>
<div style="left:500px;top:891px;width:22px;height:61px;background:#976829;border-radius:3px;box-shadow:inset 0 0 0 1px rgba(50,30,5,0.75)"></div>
<svg style="position:absolute;left:502px;top:906px;" width="18" height="29" viewBox="0 0 18 29"><rect x="0" y="0" width="18" height="29" fill="#dedad6"/><rect x="9.9" y="0" width="2.2" height="21.8" fill="#fafafa"/><rect x="0" y="19.7" width="18" height="9.3" fill="#c9ab8a"/><rect x="5.4" y="10.1" width="2.5" height="13.1" fill="#3a3a48"/><rect x="2.7" y="17.4" width="5.4" height="1.5" fill="#7a6a5a"/></svg>
<svg style="position:absolute;left:502px;top:937px;" width="18" height="13" viewBox="0 0 18 13"><rect x="0" y="9.5" width="2" height="3.5" fill="#d2a060"/><rect x="2" y="6.8" width="2" height="6.2" fill="#d2a060"/><rect x="4" y="6.3" width="2" height="6.7" fill="#d2a060"/><rect x="6" y="7.1" width="2" height="5.9" fill="#d2a060"/><rect x="8" y="5.2" width="2" height="7.8" fill="#d2a060"/><rect x="10" y="5.1" width="2" height="7.9" fill="#d2a060"/><rect x="12" y="5.3" width="2" height="7.7" fill="#d2a060"/><rect x="14" y="9.2" width="2" height="3.8" fill="#d2a060"/><rect x="16" y="12.4" width="2" height="0.6" fill="#d2a060"/></svg>
<div style="left:523px;top:891px;width:33px;height:61px;background:#976829;border-radius:3px;box-shadow:inset 0 0 0 1px rgba(50,30,5,0.75)"></div>
<div class="t" style="left:527px;top:894.3px;font-size:10.3px;color:#d4b27c;font-weight:normal;">C0...</div>
<svg style="position:absolute;left:525px;top:906px;" width="29" height="29" viewBox="0 0 29 29"><rect x="0" y="0" width="29" height="29" fill="#dedad6"/><rect x="16.0" y="0" width="3.5" height="21.8" fill="#fafafa"/><rect x="0" y="19.7" width="29" height="9.3" fill="#c9ab8a"/><rect x="8.7" y="10.1" width="2.5" height="13.1" fill="#3a3a48"/><rect x="4.3" y="17.4" width="8.7" height="1.5" fill="#7a6a5a"/></svg>
<svg style="position:absolute;left:525px;top:937px;" width="29" height="13" viewBox="0 0 29 13"><rect x="0" y="7.2" width="2" height="5.8" fill="#d2a060"/><rect x="2" y="9.2" width="2" height="3.8" fill="#d2a060"/><rect x="4" y="9.6" width="2" height="3.4" fill="#d2a060"/><rect x="6" y="7.9" width="2" height="5.1" fill="#d2a060"/><rect x="8" y="5.5" width="2" height="7.5" fill="#d2a060"/><rect x="10" y="7.7" width="2" height="5.3" fill="#d2a060"/><rect x="12" y="6.6" width="2" height="6.4" fill="#d2a060"/><rect x="14" y="7.6" width="2" height="5.4" fill="#d2a060"/><rect x="16" y="6.2" width="2" height="6.8" fill="#d2a060"/><rect x="18" y="8.5" width="2" height="4.5" fill="#d2a060"/><rect x="20" y="8.5" width="2" height="4.5" fill="#d2a060"/><rect x="22" y="11.2" width="2" height="1.8" fill="#d2a060"/><rect x="24" y="5.6" width="2" height="7.4" fill="#d2a060"/><rect x="26" y="5.5" width="2" height="7.5" fill="#d2a060"/><rect x="28" y="7.7" width="2" height="5.3" fill="#d2a060"/></svg>
<div style="left:557px;top:891px;width:11px;height:61px;background:#976829;border-radius:3px;box-shadow:inset 0 0 0 1px rgba(50,30,5,0.75)"></div>
<svg style="position:absolute;left:559px;top:906px;" width="7" height="29" viewBox="0 0 7 29"><rect x="0" y="0" width="7" height="29" fill="#e4e0dc"/><rect x="0" y="20.3" width="7" height="8.7" fill="#cdb096" opacity="0.9"/><ellipse cx="2.7" cy="12.2" rx="2.1" ry="5.8" fill="#d8a898"/><ellipse cx="2.7" cy="7.8" rx="2.2" ry="3.5" fill="#2e2626"/><rect x="1.1" y="16.8" width="3.1" height="12.2" fill="#e8a8a8"/></svg>
<svg style="position:absolute;left:559px;top:937px;" width="7" height="13" viewBox="0 0 7 13"><rect x="0" y="11.1" width="2" height="1.9" fill="#d2a060"/><rect x="2" y="8.2" width="2" height="4.8" fill="#d2a060"/><rect x="4" y="11.0" width="2" height="2.0" fill="#d2a060"/><rect x="6" y="7.1" width="2" height="5.9" fill="#d2a060"/></svg>
<div style="left:569px;top:891px;width:9px;height:61px;background:#7a7a7a;border-radius:3px;box-shadow:inset 0 0 0 1px rgba(50,30,5,0.75)"></div>
<svg style="position:absolute;left:571px;top:906px;" width="5" height="29" viewBox="0 0 5 29"><rect x="0" y="0" width="5" height="29" fill="#dedad6"/><rect x="2.8" y="0" width="0.6" height="21.8" fill="#fafafa"/><rect x="0" y="19.7" width="5" height="9.3" fill="#c9ab8a"/><rect x="1.5" y="10.1" width="2.5" height="13.1" fill="#3a3a48"/><rect x="0.8" y="17.4" width="1.5" height="1.5" fill="#7a6a5a"/></svg>
<svg style="position:absolute;left:571px;top:937px;" width="5" height="13" viewBox="0 0 5 13"><rect x="0" y="11.6" width="2" height="1.4" fill="#d2a060"/><rect x="2" y="3.7" width="2" height="9.3" fill="#d2a060"/><rect x="4" y="2.6" width="2" height="10.4" fill="#d2a060"/></svg>
<div style="left:579px;top:891px;width:14px;height:61px;background:#976829;border-radius:3px;box-shadow:inset 0 0 0 1px rgba(50,30,5,0.75)"></div>
<svg style="position:absolute;left:581px;top:906px;" width="10" height="29" viewBox="0 0 10 29"><rect x="0" y="0" width="10" height="29" fill="#dedad6"/><rect x="5.5" y="0" width="1.2" height="21.8" fill="#fafafa"/><rect x="0" y="19.7" width="10" height="9.3" fill="#c9ab8a"/><rect x="3.0" y="10.1" width="2.5" height="13.1" fill="#3a3a48"/><rect x="1.5" y="17.4" width="3.0" height="1.5" fill="#7a6a5a"/></svg>
<svg style="position:absolute;left:581px;top:937px;" width="10" height="13" viewBox="0 0 10 13"><rect x="0" y="12.0" width="2" height="1.0" fill="#d2a060"/><rect x="2" y="11.1" width="2" height="1.9" fill="#d2a060"/><rect x="4" y="11.5" width="2" height="1.5" fill="#d2a060"/><rect x="6" y="11.1" width="2" height="1.9" fill="#d2a060"/><rect x="8" y="11.2" width="2" height="1.8" fill="#d2a060"/></svg>
<div style="left:594px;top:891px;width:7px;height:61px;background:#976829;border-radius:3px;box-shadow:inset 0 0 0 1px rgba(50,30,5,0.75)"></div>
<svg style="position:absolute;left:596px;top:906px;" width="3" height="29" viewBox="0 0 3 29"><rect x="0" y="0" width="3" height="29" fill="#dedad6"/><rect x="1.7" y="0" width="0.4" height="21.8" fill="#fafafa"/><rect x="0" y="19.7" width="3" height="9.3" fill="#c9ab8a"/><rect x="0.9" y="10.1" width="2.5" height="13.1" fill="#3a3a48"/><rect x="0.4" y="17.4" width="0.9" height="1.5" fill="#7a6a5a"/></svg>
<svg style="position:absolute;left:596px;top:937px;" width="3" height="13" viewBox="0 0 3 13"><rect x="0" y="11.1" width="2" height="1.9" fill="#d2a060"/><rect x="2" y="12.4" width="2" height="0.6" fill="#d2a060"/></svg>
<div style="left:602px;top:891px;width:8px;height:61px;background:#7a7a7a;border-radius:3px;box-shadow:inset 0 0 0 1px rgba(50,30,5,0.75)"></div>
<svg style="position:absolute;left:604px;top:906px;" width="4" height="29" viewBox="0 0 4 29"><rect x="0" y="0" width="4" height="29" fill="#e6e4e2"/><rect x="0" y="20.3" width="4" height="8.7" fill="#d6b894"/></svg>
<svg style="position:absolute;left:604px;top:937px;" width="4" height="13" viewBox="0 0 4 13"><rect x="0" y="8.8" width="2" height="4.2" fill="#d2a060"/><rect x="2" y="9.3" width="2" height="3.7" fill="#d2a060"/></svg>
<div style="left:611px;top:891px;width:17px;height:61px;background:#976829;border-radius:3px;box-shadow:inset 0 0 0 1px rgba(50,30,5,0.75)"></div>
<svg style="position:absolute;left:613px;top:906px;" width="13" height="29" viewBox="0 0 13 29"><rect x="0" y="0" width="13" height="29" fill="#dedad6"/><rect x="7.2" y="0" width="1.6" height="21.8" fill="#fafafa"/><rect x="0" y="19.7" width="13" height="9.3" fill="#c9ab8a"/><rect x="3.9" y="10.1" width="2.5" height="13.1" fill="#3a3a48"/><rect x="1.9" y="17.4" width="3.9" height="1.5" fill="#7a6a5a"/></svg>
<svg style="position:absolute;left:613px;top:937px;" width="13" height="13" viewBox="0 0 13 13"><rect x="0" y="8.9" width="2" height="4.1" fill="#d2a060"/><rect x="2" y="5.6" width="2" height="7.4" fill="#d2a060"/><rect x="4" y="6.9" width="2" height="6.1" fill="#d2a060"/><rect x="6" y="5.0" width="2" height="8.0" fill="#d2a060"/><rect x="8" y="6.1" width="2" height="6.9" fill="#d2a060"/><rect x="10" y="8.6" width="2" height="4.4" fill="#d2a060"/><rect x="12" y="8.5" width="2" height="4.5" fill="#d2a060"/></svg>
<div style="left:629px;top:891px;width:19px;height:61px;background:#976829;border-radius:3px;box-shadow:inset 0 0 0 1px rgba(50,30,5,0.75)"></div>
<svg style="position:absolute;left:631px;top:906px;" width="15" height="29" viewBox="0 0 15 29"><rect x="0" y="0" width="15" height="29" fill="#e6e4e2"/><rect x="0" y="20.3" width="15" height="8.7" fill="#d6b894"/></svg>
<svg style="position:absolute;left:631px;top:937px;" width="15" height="13" viewBox="0 0 15 13"><rect x="0" y="10.8" width="2" height="2.2" fill="#d2a060"/><rect x="2" y="8.4" width="2" height="4.6" fill="#d2a060"/><rect x="4" y="12.5" width="2" height="0.5" fill="#d2a060"/><rect x="6" y="9.4" width="2" height="3.6" fill="#d2a060"/><rect x="8" y="8.4" width="2" height="4.6" fill="#d2a060"/><rect x="10" y="10.8" width="2" height="2.2" fill="#d2a060"/><rect x="12" y="11.9" width="2" height="1.1" fill="#d2a060"/><rect x="14" y="9.8" width="2" height="3.2" fill="#d2a060"/></svg>
<div style="left:649px;top:891px;width:13px;height:61px;background:#976829;border-radius:3px;box-shadow:inset 0 0 0 1px rgba(50,30,5,0.75)"></div>
<svg style="position:absolute;left:651px;top:906px;" width="9" height="29" viewBox="0 0 9 29"><rect x="0" y="0" width="9" height="29" fill="#dedad6"/><rect x="5.0" y="0" width="1.1" height="21.8" fill="#fafafa"/><rect x="0" y="19.7" width="9" height="9.3" fill="#c9ab8a"/><rect x="2.7" y="10.1" width="2.5" height="13.1" fill="#3a3a48"/><rect x="1.3" y="17.4" width="2.7" height="1.5" fill="#7a6a5a"/></svg>
<svg style="position:absolute;left:651px;top:937px;" width="9" height="13" viewBox="0 0 9 13"><rect x="0" y="11.7" width="2" height="1.3" fill="#d2a060"/><rect x="2" y="10.6" width="2" height="2.4" fill="#d2a060"/><rect x="4" y="10.5" width="2" height="2.5" fill="#d2a060"/><rect x="6" y="11.4" width="2" height="1.6" fill="#d2a060"/><rect x="8" y="11.1" width="2" height="1.9" fill="#d2a060"/></svg>
<div style="left:663px;top:891px;width:17px;height:61px;background:#976829;border-radius:3px;box-shadow:inset 0 0 0 1px rgba(50,30,5,0.75)"></div>
<svg style="position:absolute;left:665px;top:906px;" width="13" height="29" viewBox="0 0 13 29"><rect x="0" y="0" width="13" height="29" fill="#d6cec6"/><rect x="0" y="20.3" width="13" height="8.7" fill="#cdb096" opacity="0.9"/><ellipse cx="8.6" cy="12.2" rx="2.7" ry="5.8" fill="#d8a898"/><ellipse cx="8.6" cy="7.8" rx="2.8" ry="3.5" fill="#2e2626"/><rect x="5.7" y="16.8" width="5.7" height="12.2" fill="#f4f4f4"/></svg>
<svg style="position:absolute;left:665px;top:937px;" width="13" height="13" viewBox="0 0 13 13"><rect x="0" y="11.6" width="2" height="1.4" fill="#d2a060"/><rect x="2" y="11.3" width="2" height="1.7" fill="#d2a060"/><rect x="4" y="11.5" width="2" height="1.5" fill="#d2a060"/><rect x="6" y="11.8" width="2" height="1.2" fill="#d2a060"/><rect x="8" y="11.3" width="2" height="1.7" fill="#d2a060"/><rect x="10" y="12.2" width="2" height="0.8" fill="#d2a060"/><rect x="12" y="11.0" width="2" height="2.0" fill="#d2a060"/></svg>
<div style="left:681px;top:891px;width:44px;height:61px;background:#976829;border-radius:3px;box-shadow:inset 0 0 0 1px rgba(50,30,5,0.75)"></div>
<div class="t" style="left:685px;top:894.3px;font-size:10.3px;color:#d4b27c;font-weight:normal;">C0187</div>
<svg style="position:absolute;left:683px;top:906px;" width="40" height="29" viewBox="0 0 40 29"><rect x="0" y="0" width="40" height="29" fill="#dedad6"/><rect x="22.0" y="0" width="4.8" height="21.8" fill="#fafafa"/><rect x="0" y="19.7" width="40" height="9.3" fill="#c9ab8a"/><rect x="12.0" y="10.1" width="2.5" height="13.1" fill="#3a3a48"/><rect x="6.0" y="17.4" width="12.0" height="1.5" fill="#7a6a5a"/></svg>
<svg style="position:absolute;left:683px;top:937px;" width="40" height="13" viewBox="0 0 40 13"><rect x="0" y="11.5" width="2" height="1.5" fill="#d2a060"/><rect x="2" y="11.7" width="2" height="1.3" fill="#d2a060"/><rect x="4" y="8.2" width="2" height="4.8" fill="#d2a060"/><rect x="6" y="7.1" width="2" height="5.9" fill="#d2a060"/><rect x="8" y="5.7" width="2" height="7.3" fill="#d2a060"/><rect x="10" y="7.0" width="2" height="6.0" fill="#d2a060"/><rect x="12" y="5.2" width="2" height="7.8" fill="#d2a060"/><rect x="14" y="7.1" width="2" height="5.9" fill="#d2a060"/><rect x="16" y="9.6" width="2" height="3.4" fill="#d2a060"/><rect x="18" y="9.6" width="2" height="3.4" fill="#d2a060"/><rect x="20" y="8.4" width="2" height="4.6" fill="#d2a060"/><rect x="22" y="8.1" width="2" height="4.9" fill="#d2a060"/><rect x="24" y="8.9" width="2" height="4.1" fill="#d2a060"/><rect x="26" y="10.6" width="2" height="2.4" fill="#d2a060"/><rect x="28" y="9.2" width="2" height="3.8" fill="#d2a060"/><rect x="30" y="5.1" width="2" height="7.9" fill="#d2a060"/><rect x="32" y="6.4" width="2" height="6.6" fill="#d2a060"/><rect x="34" y="7.0" width="2" height="6.0" fill="#d2a060"/><rect x="36" y="7.4" width="2" height="5.6" fill="#d2a060"/><rect x="38" y="10.8" width="2" height="2.2" fill="#d2a060"/></svg>
<div style="left:726px;top:891px;width:50px;height:61px;background:#976829;border-radius:3px;box-shadow:inset 0 0 0 1px rgba(50,30,5,0.75)"></div>
<div class="t" style="left:730px;top:894.3px;font-size:10.3px;color:#d4b27c;font-weight:normal;">C0209</div>
<svg style="position:absolute;left:728px;top:906px;" width="46" height="29" viewBox="0 0 46 29"><rect x="0" y="0" width="42" height="29" fill="#dedad6"/><rect x="23.1" y="0" width="5.0" height="21.8" fill="#fafafa"/><rect x="0" y="19.7" width="42" height="9.3" fill="#c9ab8a"/><rect x="12.6" y="10.1" width="2.5" height="13.1" fill="#3a3a48"/><rect x="6.3" y="17.4" width="12.6" height="1.5" fill="#7a6a5a"/><rect x="42" y="0" width="4" height="29" fill="#dedad6"/><rect x="44.2" y="0" width="0.5" height="21.8" fill="#fafafa"/><rect x="42" y="19.7" width="4" height="9.3" fill="#c9ab8a"/><rect x="43.2" y="10.1" width="2.5" height="13.1" fill="#3a3a48"/><rect x="42.6" y="17.4" width="1.2" height="1.5" fill="#7a6a5a"/></svg>
<svg style="position:absolute;left:728px;top:937px;" width="46" height="13" viewBox="0 0 46 13"><rect x="0" y="12.0" width="2" height="1.0" fill="#d2a060"/><rect x="2" y="11.7" width="2" height="1.3" fill="#d2a060"/><rect x="4" y="11.6" width="2" height="1.4" fill="#d2a060"/><rect x="6" y="11.7" width="2" height="1.3" fill="#d2a060"/><rect x="8" y="11.2" width="2" height="1.8" fill="#d2a060"/><rect x="10" y="12.5" width="2" height="0.5" fill="#d2a060"/><rect x="12" y="11.6" width="2" height="1.4" fill="#d2a060"/><rect x="14" y="11.4" width="2" height="1.6" fill="#d2a060"/><rect x="16" y="11.1" width="2" height="1.9" fill="#d2a060"/><rect x="18" y="12.1" width="2" height="0.9" fill="#d2a060"/><rect x="20" y="12.2" width="2" height="0.8" fill="#d2a060"/><rect x="22" y="12.3" width="2" height="0.7" fill="#d2a060"/><rect x="24" y="11.5" width="2" height="1.5" fill="#d2a060"/><rect x="26" y="11.3" width="2" height="1.7" fill="#d2a060"/><rect x="28" y="11.2" width="2" height="1.8" fill="#d2a060"/><rect x="30" y="12.5" width="2" height="0.5" fill="#d2a060"/><rect x="32" y="11.1" width="2" height="1.9" fill="#d2a060"/><rect x="34" y="11.5" width="2" height="1.5" fill="#d2a060"/><rect x="36" y="11.7" width="2" height="1.3" fill="#d2a060"/><rect x="38" y="11.1" width="2" height="1.9" fill="#d2a060"/><rect x="40" y="11.9" width="2" height="1.1" fill="#d2a060"/><rect x="42" y="11.4" width="2" height="1.6" fill="#d2a060"/><rect x="44" y="11.2" width="2" height="1.8" fill="#d2a060"/></svg>
<div style="left:777px;top:891px;width:20px;height:61px;background:#976829;border-radius:3px;box-shadow:inset 0 0 0 1px rgba(50,30,5,0.75)"></div>
<svg style="position:absolute;left:779px;top:906px;" width="16" height="29" viewBox="0 0 16 29"><rect x="0" y="0" width="16" height="29" fill="#dedad6"/><rect x="8.8" y="0" width="1.9" height="21.8" fill="#fafafa"/><rect x="0" y="19.7" width="16" height="9.3" fill="#c9ab8a"/><rect x="4.8" y="10.1" width="2.5" height="13.1" fill="#3a3a48"/><rect x="2.4" y="17.4" width="4.8" height="1.5" fill="#7a6a5a"/></svg>
<svg style="position:absolute;left:779px;top:937px;" width="16" height="13" viewBox="0 0 16 13"><rect x="0" y="8.9" width="2" height="4.1" fill="#d2a060"/><rect x="2" y="8.3" width="2" height="4.7" fill="#d2a060"/><rect x="4" y="12.3" width="2" height="0.7" fill="#d2a060"/><rect x="6" y="9.3" width="2" height="3.7" fill="#d2a060"/><rect x="8" y="9.2" width="2" height="3.8" fill="#d2a060"/><rect x="10" y="9.7" width="2" height="3.3" fill="#d2a060"/><rect x="12" y="10.8" width="2" height="2.2" fill="#d2a060"/><rect x="14" y="8.5" width="2" height="4.5" fill="#d2a060"/></svg>
<div style="left:798px;top:891px;width:2px;height:61px;background:#976829;border-radius:3px;box-shadow:inset 0 0 0 1px rgba(50,30,5,0.75)"></div>
<div style="left:800px;top:891px;width:19px;height:61px;background:#976829;border-radius:3px;box-shadow:inset 0 0 0 1px rgba(50,30,5,0.75)"></div>
<svg style="position:absolute;left:802px;top:906px;" width="15" height="29" viewBox="0 0 15 29"><rect x="0" y="0" width="15" height="29" fill="#dedad6"/><rect x="8.2" y="0" width="1.8" height="21.8" fill="#fafafa"/><rect x="0" y="19.7" width="15" height="9.3" fill="#c9ab8a"/><rect x="4.5" y="10.1" width="2.5" height="13.1" fill="#3a3a48"/><rect x="2.2" y="17.4" width="4.5" height="1.5" fill="#7a6a5a"/></svg>
<svg style="position:absolute;left:802px;top:937px;" width="15" height="13" viewBox="0 0 15 13"><rect x="0" y="8.7" width="2" height="4.3" fill="#d2a060"/><rect x="2" y="9.1" width="2" height="3.9" fill="#d2a060"/><rect x="4" y="12.2" width="2" height="0.8" fill="#d2a060"/><rect x="6" y="10.4" width="2" height="2.6" fill="#d2a060"/><rect x="8" y="11.9" width="2" height="1.1" fill="#d2a060"/><rect x="10" y="8.0" width="2" height="5.0" fill="#d2a060"/><rect x="12" y="12.1" width="2" height="0.9" fill="#d2a060"/><rect x="14" y="11.4" width="2" height="1.6" fill="#d2a060"/></svg>
<div style="left:820px;top:891px;width:16px;height:61px;background:#976829;border-radius:3px;box-shadow:inset 0 0 0 1px rgba(50,30,5,0.75)"></div>
<svg style="position:absolute;left:822px;top:906px;" width="12" height="29" viewBox="0 0 12 29"><rect x="0" y="0" width="12" height="29" fill="#e4e0dc"/><rect x="0" y="20.3" width="12" height="8.7" fill="#cdb096" opacity="0.9"/><ellipse cx="3.9" cy="12.2" rx="3.5" ry="5.8" fill="#d8a898"/><ellipse cx="3.9" cy="7.8" rx="3.7" ry="3.5" fill="#2e2626"/><rect x="1.2" y="16.8" width="5.3" height="12.2" fill="#6a8ad8"/></svg>
<svg style="position:absolute;left:822px;top:937px;" width="12" height="13" viewBox="0 0 12 13"><rect x="0" y="11.1" width="2" height="1.9" fill="#d2a060"/><rect x="2" y="12.4" width="2" height="0.6" fill="#d2a060"/><rect x="4" y="11.0" width="2" height="2.0" fill="#d2a060"/><rect x="6" y="11.7" width="2" height="1.3" fill="#d2a060"/><rect x="8" y="11.6" width="2" height="1.4" fill="#d2a060"/><rect x="10" y="11.2" width="2" height="1.8" fill="#d2a060"/></svg>
<div style="left:837px;top:891px;width:9px;height:61px;background:#976829;border-radius:3px;box-shadow:inset 0 0 0 1px rgba(50,30,5,0.75)"></div>
<svg style="position:absolute;left:839px;top:906px;" width="5" height="29" viewBox="0 0 5 29"><rect x="0" y="0" width="5" height="29" fill="#dcd6d0"/><rect x="0" y="20.3" width="5" height="8.7" fill="#cdb096" opacity="0.9"/><ellipse cx="2.9" cy="12.2" rx="1.5" ry="5.8" fill="#d8a898"/><ellipse cx="2.9" cy="7.8" rx="1.6" ry="3.5" fill="#2e2626"/><rect x="1.8" y="16.8" width="2.2" height="12.2" fill="#e8d840"/></svg>
<svg style="position:absolute;left:839px;top:937px;" width="5" height="13" viewBox="0 0 5 13"><rect x="0" y="6.8" width="2" height="6.2" fill="#d2a060"/><rect x="2" y="8.4" width="2" height="4.6" fill="#d2a060"/><rect x="4" y="12.4" width="2" height="0.6" fill="#d2a060"/></svg>
<div style="left:847px;top:891px;width:8px;height:61px;background:#976829;border-radius:3px;box-shadow:inset 0 0 0 1px rgba(50,30,5,0.75)"></div>
<svg style="position:absolute;left:849px;top:906px;" width="4" height="29" viewBox="0 0 4 29"><rect x="0" y="0" width="4" height="29" fill="#dedad6"/><rect x="2.2" y="0" width="0.5" height="21.8" fill="#fafafa"/><rect x="0" y="19.7" width="4" height="9.3" fill="#c9ab8a"/><rect x="1.2" y="10.1" width="2.5" height="13.1" fill="#3a3a48"/><rect x="0.6" y="17.4" width="1.2" height="1.5" fill="#7a6a5a"/></svg>
<svg style="position:absolute;left:849px;top:937px;" width="4" height="13" viewBox="0 0 4 13"><rect x="0" y="6.1" width="2" height="6.9" fill="#d2a060"/><rect x="2" y="10.0" width="2" height="3.0" fill="#d2a060"/></svg>
<div style="left:856px;top:891px;width:7px;height:61px;background:#976829;border-radius:3px;box-shadow:inset 0 0 0 1px rgba(50,30,5,0.75)"></div>
<svg style="position:absolute;left:858px;top:906px;" width="3" height="29" viewBox="0 0 3 29"><rect x="0" y="0" width="3" height="29" fill="#ebe8e6"/><rect x="0" y="20.3" width="3" height="8.7" fill="#cdb096" opacity="0.9"/><ellipse cx="1.0" cy="12.2" rx="0.7" ry="5.8" fill="#d8a898"/><ellipse cx="1.0" cy="7.8" rx="0.7" ry="3.5" fill="#2e2626"/><rect x="0.3" y="16.8" width="1.3" height="12.2" fill="#e8d840"/></svg>
<svg style="position:absolute;left:858px;top:937px;" width="3" height="13" viewBox="0 0 3 13"><rect x="0" y="11.8" width="2" height="1.2" fill="#d2a060"/><rect x="2" y="11.5" width="2" height="1.5" fill="#d2a060"/></svg>
<div style="left:864px;top:891px;width:27px;height:61px;background:#976829;border-radius:3px;box-shadow:inset 0 0 0 1px rgba(50,30,5,0.75)"></div>
<div class="t" style="left:868px;top:894.3px;font-size:10.3px;color:#d4b27c;font-weight:normal;">C...</div>
<svg style="position:absolute;left:866px;top:906px;" width="23" height="29" viewBox="0 0 23 29"><rect x="0" y="0" width="23" height="29" fill="#e6e4e2"/><rect x="0" y="20.3" width="23" height="8.7" fill="#d6b894"/></svg>
<svg style="position:absolute;left:866px;top:937px;" width="23" height="13" viewBox="0 0 23 13"><rect x="0" y="9.8" width="2" height="3.2" fill="#d2a060"/><rect x="2" y="11.4" width="2" height="1.6" fill="#d2a060"/><rect x="4" y="11.8" width="2" height="1.2" fill="#d2a060"/><rect x="6" y="12.0" width="2" height="1.0" fill="#d2a060"/><rect x="8" y="8.3" width="2" height="4.7" fill="#d2a060"/><rect x="10" y="10.6" width="2" height="2.4" fill="#d2a060"/><rect x="12" y="8.4" width="2" height="4.6" fill="#d2a060"/><rect x="14" y="9.4" width="2" height="3.6" fill="#d2a060"/><rect x="16" y="11.4" width="2" height="1.6" fill="#d2a060"/><rect x="18" y="10.3" width="2" height="2.7" fill="#d2a060"/><rect x="20" y="10.5" width="2" height="2.5" fill="#d2a060"/><rect x="22" y="10.1" width="2" height="2.9" fill="#d2a060"/></svg>
<div style="left:892px;top:891px;width:19px;height:61px;background:#976829;border-radius:3px;box-shadow:inset 0 0 0 1px rgba(50,30,5,0.75)"></div>
<svg style="position:absolute;left:894px;top:906px;" width="15" height="29" viewBox="0 0 15 29"><rect x="0" y="0" width="15" height="29" fill="#d6cec6"/><rect x="0" y="20.3" width="15" height="8.7" fill="#cdb096" opacity="0.9"/><ellipse cx="9.0" cy="12.2" rx="3.7" ry="5.8" fill="#d8a898"/><ellipse cx="9.0" cy="7.8" rx="3.9" ry="3.5" fill="#2e2626"/><rect x="5.7" y="16.8" width="6.6" height="12.2" fill="#888"/></svg>
<svg style="position:absolute;left:894px;top:937px;" width="15" height="13" viewBox="0 0 15 13"><rect x="0" y="5.3" width="2" height="7.7" fill="#d2a060"/><rect x="2" y="10.7" width="2" height="2.3" fill="#d2a060"/><rect x="4" y="7.5" width="2" height="5.5" fill="#d2a060"/><rect x="6" y="8.2" width="2" height="4.8" fill="#d2a060"/><rect x="8" y="8.3" width="2" height="4.7" fill="#d2a060"/><rect x="10" y="8.3" width="2" height="4.7" fill="#d2a060"/><rect x="12" y="7.7" width="2" height="5.3" fill="#d2a060"/><rect x="14" y="11.5" width="2" height="1.5" fill="#d2a060"/></svg>
<div style="left:912px;top:891px;width:13px;height:61px;background:#976829;border-radius:3px;box-shadow:inset 0 0 0 1px rgba(50,30,5,0.75)"></div>
<svg style="position:absolute;left:914px;top:906px;" width="9" height="29" viewBox="0 0 9 29"><rect x="0" y="0" width="9" height="29" fill="#dedad6"/><rect x="5.0" y="0" width="1.1" height="21.8" fill="#fafafa"/><rect x="0" y="19.7" width="9" height="9.3" fill="#c9ab8a"/><rect x="2.7" y="10.1" width="2.5" height="13.1" fill="#3a3a48"/><rect x="1.3" y="17.4" width="2.7" height="1.5" fill="#7a6a5a"/></svg>
<svg style="position:absolute;left:914px;top:937px;" width="9" height="13" viewBox="0 0 9 13"><rect x="0" y="11.4" width="2" height="1.6" fill="#d2a060"/><rect x="2" y="12.3" width="2" height="0.7" fill="#d2a060"/><rect x="4" y="11.4" width="2" height="1.6" fill="#d2a060"/><rect x="6" y="12.1" width="2" height="0.9" fill="#d2a060"/><rect x="8" y="11.7" width="2" height="1.3" fill="#d2a060"/></svg>
<div style="left:926px;top:891px;width:43px;height:61px;background:#976829;border-radius:3px;box-shadow:inset 0 0 0 1px rgba(50,30,5,0.75)"></div>
<div class="t" style="left:930px;top:894.3px;font-size:10.3px;color:#d4b27c;font-weight:normal;">C0252</div>
<svg style="position:absolute;left:928px;top:906px;" width="39" height="29" viewBox="0 0 39 29"><rect x="0" y="0" width="39" height="29" fill="#dedad6"/><rect x="21.5" y="0" width="4.7" height="21.8" fill="#fafafa"/><rect x="0" y="19.7" width="39" height="9.3" fill="#c9ab8a"/><rect x="11.7" y="10.1" width="2.5" height="13.1" fill="#3a3a48"/><rect x="5.8" y="17.4" width="11.7" height="1.5" fill="#7a6a5a"/></svg>
<svg style="position:absolute;left:928px;top:937px;" width="39" height="13" viewBox="0 0 39 13"><rect x="0" y="11.5" width="2" height="1.5" fill="#d2a060"/><rect x="2" y="10.3" width="2" height="2.7" fill="#d2a060"/><rect x="4" y="10.9" width="2" height="2.1" fill="#d2a060"/><rect x="6" y="12.3" width="2" height="0.7" fill="#d2a060"/><rect x="8" y="11.5" width="2" height="1.5" fill="#d2a060"/><rect x="10" y="10.8" width="2" height="2.2" fill="#d2a060"/><rect x="12" y="10.8" width="2" height="2.2" fill="#d2a060"/><rect x="14" y="11.3" width="2" height="1.7" fill="#d2a060"/><rect x="16" y="12.0" width="2" height="1.0" fill="#d2a060"/><rect x="18" y="11.6" width="2" height="1.4" fill="#d2a060"/><rect x="20" y="10.4" width="2" height="2.6" fill="#d2a060"/><rect x="22" y="12.3" width="2" height="0.7" fill="#d2a060"/><rect x="24" y="10.0" width="2" height="3.0" fill="#d2a060"/><rect x="26" y="10.0" width="2" height="3.0" fill="#d2a060"/><rect x="28" y="10.7" width="2" height="2.3" fill="#d2a060"/><rect x="30" y="11.0" width="2" height="2.0" fill="#d2a060"/><rect x="32" y="11.7" width="2" height="1.3" fill="#d2a060"/><rect x="34" y="10.9" width="2" height="2.1" fill="#d2a060"/><rect x="36" y="11.5" width="2" height="1.5" fill="#d2a060"/><rect x="38" y="10.5" width="2" height="2.5" fill="#d2a060"/></svg>
<div style="left:970px;top:891px;width:11px;height:61px;background:#976829;border-radius:3px;box-shadow:inset 0 0 0 1px rgba(50,30,5,0.75)"></div>
<svg style="position:absolute;left:972px;top:906px;" width="7" height="29" viewBox="0 0 7 29"><rect x="0" y="0" width="7" height="29" fill="#dedad6"/><rect x="3.9" y="0" width="0.8" height="21.8" fill="#fafafa"/><rect x="0" y="19.7" width="7" height="9.3" fill="#c9ab8a"/><rect x="2.1" y="10.1" width="2.5" height="13.1" fill="#3a3a48"/><rect x="1.1" y="17.4" width="2.1" height="1.5" fill="#7a6a5a"/></svg>
<svg style="position:absolute;left:972px;top:937px;" width="7" height="13" viewBox="0 0 7 13"><rect x="0" y="8.2" width="2" height="4.8" fill="#d2a060"/><rect x="2" y="9.0" width="2" height="4.0" fill="#d2a060"/><rect x="4" y="9.3" width="2" height="3.7" fill="#d2a060"/><rect x="6" y="4.4" width="2" height="8.6" fill="#d2a060"/></svg>
<div style="left:982px;top:891px;width:18px;height:61px;background:#976829;border-radius:3px;box-shadow:inset 0 0 0 1px rgba(50,30,5,0.75)"></div>
<svg style="position:absolute;left:984px;top:906px;" width="14" height="29" viewBox="0 0 14 29"><rect x="0" y="0" width="14" height="29" fill="#dcd6d0"/><rect x="0" y="20.3" width="14" height="8.7" fill="#cdb096" opacity="0.9"/><ellipse cx="5.4" cy="12.2" rx="2.9" ry="5.8" fill="#d8a898"/><ellipse cx="5.4" cy="7.8" rx="3.0" ry="3.5" fill="#2e2626"/><rect x="2.3" y="16.8" width="6.2" height="12.2" fill="#f4f4f4"/></svg>
<svg style="position:absolute;left:984px;top:937px;" width="14" height="13" viewBox="0 0 14 13"><rect x="0" y="11.3" width="2" height="1.7" fill="#d2a060"/><rect x="2" y="11.5" width="2" height="1.5" fill="#d2a060"/><rect x="4" y="11.5" width="2" height="1.5" fill="#d2a060"/><rect x="6" y="10.5" width="2" height="2.5" fill="#d2a060"/><rect x="8" y="10.5" width="2" height="2.5" fill="#d2a060"/><rect x="10" y="12.2" width="2" height="0.8" fill="#d2a060"/><rect x="12" y="10.3" width="2" height="2.7" fill="#d2a060"/></svg>
<div style="left:1001px;top:891px;width:20px;height:61px;background:#976829;border-radius:3px;box-shadow:inset 0 0 0 1px rgba(50,30,5,0.75)"></div>
<svg style="position:absolute;left:1003px;top:906px;" width="16" height="29" viewBox="0 0 16 29"><rect x="0" y="0" width="16" height="29" fill="#e6e4e2"/><rect x="0" y="20.3" width="16" height="8.7" fill="#d6b894"/></svg>
<svg style="position:absolute;left:1003px;top:937px;" width="16" height="13" viewBox="0 0 16 13"><rect x="0" y="10.3" width="2" height="2.7" fill="#d2a060"/><rect x="2" y="10.8" width="2" height="2.2" fill="#d2a060"/><rect x="4" y="10.2" width="2" height="2.8" fill="#d2a060"/><rect x="6" y="9.6" width="2" height="3.4" fill="#d2a060"/><rect x="8" y="10.9" width="2" height="2.1" fill="#d2a060"/><rect x="10" y="11.4" width="2" height="1.6" fill="#d2a060"/><rect x="12" y="8.8" width="2" height="4.2" fill="#d2a060"/><rect x="14" y="8.3" width="2" height="4.7" fill="#d2a060"/></svg>
<div style="left:1022px;top:891px;width:22px;height:61px;background:#976829;border-radius:3px;box-shadow:inset 0 0 0 1px rgba(50,30,5,0.75)"></div>
<svg style="position:absolute;left:1024px;top:906px;" width="18" height="29" viewBox="0 0 18 29"><rect x="0" y="0" width="18" height="29" fill="#d6cec6"/><rect x="0" y="20.3" width="18" height="8.7" fill="#cdb096" opacity="0.9"/><ellipse cx="12.0" cy="12.2" rx="5.4" ry="5.8" fill="#d8a898"/><ellipse cx="12.0" cy="7.8" rx="5.6" ry="3.5" fill="#2e2626"/><rect x="8.1" y="16.8" width="7.9" height="12.2" fill="#f4f4f4"/></svg>
<svg style="position:absolute;left:1024px;top:937px;" width="18" height="13" viewBox="0 0 18 13"><rect x="0" y="9.8" width="2" height="3.2" fill="#d2a060"/><rect x="2" y="5.3" width="2" height="7.7" fill="#d2a060"/><rect x="4" y="2.6" width="2" height="10.4" fill="#d2a060"/><rect x="6" y="6.5" width="2" height="6.5" fill="#d2a060"/><rect x="8" y="2.7" width="2" height="10.3" fill="#d2a060"/><rect x="10" y="12.3" width="2" height="0.7" fill="#d2a060"/><rect x="12" y="8.0" width="2" height="5.0" fill="#d2a060"/><rect x="14" y="6.8" width="2" height="6.2" fill="#d2a060"/><rect x="16" y="4.8" width="2" height="8.2" fill="#d2a060"/></svg>
<div style="left:1045px;top:891px;width:30px;height:61px;background:#976829;border-radius:3px;box-shadow:inset 0 0 0 1px rgba(50,30,5,0.75)"></div>
<div class="t" style="left:1049px;top:894.3px;font-size:10.3px;color:#d4b27c;font-weight:normal;">C…</div>
<svg style="position:absolute;left:1047px;top:906px;" width="26" height="29" viewBox="0 0 26 29"><rect x="0" y="0" width="26" height="29" fill="#dedad6"/><rect x="14.3" y="0" width="3.1" height="21.8" fill="#fafafa"/><rect x="0" y="19.7" width="26" height="9.3" fill="#c9ab8a"/><rect x="7.8" y="10.1" width="2.5" height="13.1" fill="#3a3a48"/><rect x="3.9" y="17.4" width="7.8" height="1.5" fill="#7a6a5a"/></svg>
<svg style="position:absolute;left:1047px;top:937px;" width="26" height="13" viewBox="0 0 26 13"><rect x="0" y="9.0" width="2" height="4.0" fill="#d2a060"/><rect x="2" y="10.2" width="2" height="2.8" fill="#d2a060"/><rect x="4" y="8.5" width="2" height="4.5" fill="#d2a060"/><rect x="6" y="9.7" width="2" height="3.3" fill="#d2a060"/><rect x="8" y="8.8" width="2" height="4.2" fill="#d2a060"/><rect x="10" y="3.7" width="2" height="9.3" fill="#d2a060"/><rect x="12" y="8.7" width="2" height="4.3" fill="#d2a060"/><rect x="14" y="4.3" width="2" height="8.7" fill="#d2a060"/><rect x="16" y="5.5" width="2" height="7.5" fill="#d2a060"/><rect x="18" y="5.7" width="2" height="7.3" fill="#d2a060"/><rect x="20" y="3.9" width="2" height="9.1" fill="#d2a060"/><rect x="22" y="6.0" width="2" height="7.0" fill="#d2a060"/><rect x="24" y="3.1" width="2" height="9.9" fill="#d2a060"/></svg>
<div style="left:1076px;top:891px;width:20px;height:61px;background:#976829;border-radius:3px;box-shadow:inset 0 0 0 1px rgba(50,30,5,0.75)"></div>
<svg style="position:absolute;left:1078px;top:906px;" width="16" height="29" viewBox="0 0 16 29"><rect x="0" y="0" width="16" height="29" fill="#ebe8e6"/><rect x="0" y="20.3" width="16" height="8.7" fill="#cdb096" opacity="0.9"/><ellipse cx="5.6" cy="12.2" rx="3.9" ry="5.8" fill="#d8a898"/><ellipse cx="5.6" cy="7.8" rx="4.1" ry="3.5" fill="#2e2626"/><rect x="2.1" y="16.8" width="7.0" height="12.2" fill="#e8d840"/></svg>
<svg style="position:absolute;left:1078px;top:937px;" width="16" height="13" viewBox="0 0 16 13"><rect x="0" y="11.4" width="2" height="1.6" fill="#d2a060"/><rect x="2" y="11.4" width="2" height="1.6" fill="#d2a060"/><rect x="4" y="12.3" width="2" height="0.7" fill="#d2a060"/><rect x="6" y="12.1" width="2" height="0.9" fill="#d2a060"/><rect x="8" y="11.4" width="2" height="1.6" fill="#d2a060"/><rect x="10" y="10.7" width="2" height="2.3" fill="#d2a060"/><rect x="12" y="12.1" width="2" height="0.9" fill="#d2a060"/><rect x="14" y="11.7" width="2" height="1.3" fill="#d2a060"/></svg>
<div style="left:1097px;top:891px;width:68px;height:61px;background:#976829;border-radius:3px;box-shadow:inset 0 0 0 1px rgba(50,30,5,0.75)"></div>
<div class="t" style="left:1101px;top:894.3px;font-size:10.3px;color:#d4b27c;font-weight:normal;">C0252</div>
<svg style="position:absolute;left:1099px;top:906px;" width="64" height="29" viewBox="0 0 64 29"><rect x="0" y="0" width="24" height="29" fill="#ebe8e6"/><rect x="0" y="20.3" width="24" height="8.7" fill="#cdb096" opacity="0.9"/><ellipse cx="13.5" cy="12.2" rx="5.4" ry="5.8" fill="#d8a898"/><ellipse cx="13.5" cy="7.8" rx="5.6" ry="3.5" fill="#2e2626"/><rect x="8.2" y="16.8" width="10.6" height="12.2" fill="#6a8ad8"/><rect x="24" y="0" width="16" height="29" fill="#e6e4e2"/><rect x="24" y="20.3" width="16" height="8.7" fill="#d6b894"/><rect x="40" y="0" width="24" height="29" fill="#e4e0dc"/><rect x="40" y="20.3" width="24" height="8.7" fill="#cdb096" opacity="0.9"/><ellipse cx="49.1" cy="12.2" rx="5.0" ry="5.8" fill="#d8a898"/><ellipse cx="49.1" cy="7.8" rx="5.3" ry="3.5" fill="#2e2626"/><rect x="43.9" y="16.8" width="10.6" height="12.2" fill="#6a8ad8"/></svg>
<svg style="position:absolute;left:1099px;top:937px;" width="64" height="13" viewBox="0 0 64 13"><rect x="0" y="10.2" width="2" height="2.8" fill="#d2a060"/><rect x="2" y="9.4" width="2" height="3.6" fill="#d2a060"/><rect x="4" y="9.6" width="2" height="3.4" fill="#d2a060"/><rect x="6" y="11.5" width="2" height="1.5" fill="#d2a060"/><rect x="8" y="10.8" width="2" height="2.2" fill="#d2a060"/><rect x="10" y="8.6" width="2" height="4.4" fill="#d2a060"/><rect x="12" y="9.9" width="2" height="3.1" fill="#d2a060"/><rect x="14" y="11.9" width="2" height="1.1" fill="#d2a060"/><rect x="16" y="8.3" width="2" height="4.7" fill="#d2a060"/><rect x="18" y="10.7" width="2" height="2.3" fill="#d2a060"/><rect x="20" y="10.4" width="2" height="2.6" fill="#d2a060"/><rect x="22" y="12.1" width="2" height="0.9" fill="#d2a060"/><rect x="24" y="11.6" width="2" height="1.4" fill="#d2a060"/><rect x="26" y="11.1" width="2" height="1.9" fill="#d2a060"/><rect x="28" y="9.6" width="2" height="3.4" fill="#d2a060"/><rect x="30" y="10.7" width="2" height="2.3" fill="#d2a060"/><rect x="32" y="9.9" width="2" height="3.1" fill="#d2a060"/><rect x="34" y="12.3" width="2" height="0.7" fill="#d2a060"/><rect x="36" y="12.2" width="2" height="0.8" fill="#d2a060"/><rect x="38" y="11.4" width="2" height="1.6" fill="#d2a060"/><rect x="40" y="10.1" width="2" height="2.9" fill="#d2a060"/><rect x="42" y="8.7" width="2" height="4.3" fill="#d2a060"/><rect x="44" y="8.6" width="2" height="4.4" fill="#d2a060"/><rect x="46" y="9.0" width="2" height="4.0" fill="#d2a060"/><rect x="48" y="10.0" width="2" height="3.0" fill="#d2a060"/><rect x="50" y="8.5" width="2" height="4.5" fill="#d2a060"/><rect x="52" y="9.0" width="2" height="4.0" fill="#d2a060"/><rect x="54" y="12.1" width="2" height="0.9" fill="#d2a060"/><rect x="56" y="10.8" width="2" height="2.2" fill="#d2a060"/><rect x="58" y="8.2" width="2" height="4.8" fill="#d2a060"/><rect x="60" y="9.3" width="2" height="3.7" fill="#d2a060"/><rect x="62" y="8.6" width="2" height="4.4" fill="#d2a060"/></svg>
<div style="left:1166px;top:891px;width:23px;height:61px;background:#976829;border-radius:3px;box-shadow:inset 0 0 0 1px rgba(50,30,5,0.75)"></div>
<div class="t" style="left:1170px;top:894.3px;font-size:10.3px;color:#d4b27c;font-weight:normal;">C…</div>
<svg style="position:absolute;left:1168px;top:906px;" width="19" height="29" viewBox="0 0 19 29"><rect x="0" y="0" width="19" height="29" fill="#dedad6"/><rect x="10.5" y="0" width="2.3" height="21.8" fill="#fafafa"/><rect x="0" y="19.7" width="19" height="9.3" fill="#c9ab8a"/><rect x="5.7" y="10.1" width="2.5" height="13.1" fill="#3a3a48"/><rect x="2.9" y="17.4" width="5.7" height="1.5" fill="#7a6a5a"/></svg>
<svg style="position:absolute;left:1168px;top:937px;" width="19" height="13" viewBox="0 0 19 13"><rect x="0" y="9.9" width="2" height="3.1" fill="#d2a060"/><rect x="2" y="9.0" width="2" height="4.0" fill="#d2a060"/><rect x="4" y="12.3" width="2" height="0.7" fill="#d2a060"/><rect x="6" y="11.6" width="2" height="1.4" fill="#d2a060"/><rect x="8" y="8.2" width="2" height="4.8" fill="#d2a060"/><rect x="10" y="9.1" width="2" height="3.9" fill="#d2a060"/><rect x="12" y="10.3" width="2" height="2.7" fill="#d2a060"/><rect x="14" y="8.2" width="2" height="4.8" fill="#d2a060"/><rect x="16" y="10.1" width="2" height="2.9" fill="#d2a060"/><rect x="18" y="11.4" width="2" height="1.6" fill="#d2a060"/></svg>
<div style="left:1190px;top:891px;width:26px;height:61px;background:#976829;border-radius:3px;box-shadow:inset 0 0 0 1px rgba(50,30,5,0.75)"></div>
<div class="t" style="left:1194px;top:894.3px;font-size:10.3px;color:#d4b27c;font-weight:normal;">C...</div>
<svg style="position:absolute;left:1192px;top:906px;" width="22" height="29" viewBox="0 0 22 29"><rect x="0" y="0" width="22" height="29" fill="#dedad6"/><rect x="12.1" y="0" width="2.6" height="21.8" fill="#fafafa"/><rect x="0" y="19.7" width="22" height="9.3" fill="#c9ab8a"/><rect x="6.6" y="10.1" width="2.5" height="13.1" fill="#3a3a48"/><rect x="3.3" y="17.4" width="6.6" height="1.5" fill="#7a6a5a"/></svg>
<svg style="position:absolute;left:1192px;top:937px;" width="22" height="13" viewBox="0 0 22 13"><rect x="0" y="11.1" width="2" height="1.9" fill="#d2a060"/><rect x="2" y="11.6" width="2" height="1.4" fill="#d2a060"/><rect x="4" y="11.8" width="2" height="1.2" fill="#d2a060"/><rect x="6" y="10.7" width="2" height="2.3" fill="#d2a060"/><rect x="8" y="12.0" width="2" height="1.0" fill="#d2a060"/><rect x="10" y="10.4" width="2" height="2.6" fill="#d2a060"/><rect x="12" y="11.2" width="2" height="1.8" fill="#d2a060"/><rect x="14" y="11.6" width="2" height="1.4" fill="#d2a060"/><rect x="16" y="11.2" width="2" height="1.8" fill="#d2a060"/><rect x="18" y="12.5" width="2" height="0.5" fill="#d2a060"/><rect x="20" y="11.0" width="2" height="2.0" fill="#d2a060"/></svg>
<div style="left:1217px;top:891px;width:19px;height:61px;background:#976829;border-radius:3px;box-shadow:inset 0 0 0 1px rgba(50,30,5,0.75)"></div>
<svg style="position:absolute;left:1219px;top:906px;" width="15" height="29" viewBox="0 0 15 29"><rect x="0" y="0" width="15" height="29" fill="#dedad6"/><rect x="8.2" y="0" width="1.8" height="21.8" fill="#fafafa"/><rect x="0" y="19.7" width="15" height="9.3" fill="#c9ab8a"/><rect x="4.5" y="10.1" width="2.5" height="13.1" fill="#3a3a48"/><rect x="2.2" y="17.4" width="4.5" height="1.5" fill="#7a6a5a"/></svg>
<svg style="position:absolute;left:1219px;top:937px;" width="15" height="13" viewBox="0 0 15 13"><rect x="0" y="11.8" width="2" height="1.2" fill="#d2a060"/><rect x="2" y="10.2" width="2" height="2.8" fill="#d2a060"/><rect x="4" y="11.4" width="2" height="1.6" fill="#d2a060"/><rect x="6" y="12.3" width="2" height="0.7" fill="#d2a060"/><rect x="8" y="10.3" width="2" height="2.7" fill="#d2a060"/><rect x="10" y="10.5" width="2" height="2.5" fill="#d2a060"/><rect x="12" y="10.4" width="2" height="2.6" fill="#d2a060"/><rect x="14" y="10.3" width="2" height="2.7" fill="#d2a060"/></svg>
<div style="left:1237px;top:891px;width:7px;height:61px;background:#976829;border-radius:3px;box-shadow:inset 0 0 0 1px rgba(50,30,5,0.75)"></div>
<svg style="position:absolute;left:1239px;top:906px;" width="3" height="29" viewBox="0 0 3 29"><rect x="0" y="0" width="3" height="29" fill="#e6e4e2"/><rect x="0" y="20.3" width="3" height="8.7" fill="#d6b894"/></svg>
<svg style="position:absolute;left:1239px;top:937px;" width="3" height="13" viewBox="0 0 3 13"><rect x="0" y="5.1" width="2" height="7.9" fill="#d2a060"/><rect x="2" y="2.2" width="2" height="10.8" fill="#d2a060"/></svg>
<div style="left:1245px;top:891px;width:10px;height:61px;background:#976829;border-radius:3px;box-shadow:inset 0 0 0 1px rgba(50,30,5,0.75)"></div>
<svg style="position:absolute;left:1247px;top:906px;" width="6" height="29" viewBox="0 0 6 29"><rect x="0" y="0" width="6" height="29" fill="#dcd6d0"/><rect x="0" y="20.3" width="6" height="8.7" fill="#cdb096" opacity="0.9"/><ellipse cx="3.9" cy="12.2" rx="1.5" ry="5.8" fill="#d8a898"/><ellipse cx="3.9" cy="7.8" rx="1.6" ry="3.5" fill="#2e2626"/><rect x="2.6" y="16.8" width="2.6" height="12.2" fill="#6a8ad8"/></svg>
<svg style="position:absolute;left:1247px;top:937px;" width="6" height="13" viewBox="0 0 6 13"><rect x="0" y="10.5" width="2" height="2.5" fill="#d2a060"/><rect x="2" y="7.9" width="2" height="5.1" fill="#d2a060"/><rect x="4" y="12.0" width="2" height="1.0" fill="#d2a060"/></svg>
<div style="left:1256px;top:891px;width:15px;height:61px;background:#976829;border-radius:3px;box-shadow:inset 0 0 0 1px rgba(50,30,5,0.75)"></div>
<div class="t" style="left:1260px;top:894.3px;font-size:10.3px;color:#d4b27c;font-weight:normal;">C</div>
<svg style="position:absolute;left:1258px;top:906px;" width="11" height="29" viewBox="0 0 11 29"><rect x="0" y="0" width="11" height="29" fill="#dedad6"/><rect x="6.1" y="0" width="1.3" height="21.8" fill="#fafafa"/><rect x="0" y="19.7" width="11" height="9.3" fill="#c9ab8a"/><rect x="3.3" y="10.1" width="2.5" height="13.1" fill="#3a3a48"/><rect x="1.6" y="17.4" width="3.3" height="1.5" fill="#7a6a5a"/></svg>
<svg style="position:absolute;left:1258px;top:937px;" width="11" height="13" viewBox="0 0 11 13"><rect x="0" y="12.4" width="2" height="0.6" fill="#d2a060"/><rect x="2" y="10.2" width="2" height="2.8" fill="#d2a060"/><rect x="4" y="10.8" width="2" height="2.2" fill="#d2a060"/><rect x="6" y="10.7" width="2" height="2.3" fill="#d2a060"/><rect x="8" y="10.7" width="2" height="2.3" fill="#d2a060"/><rect x="10" y="10.0" width="2" height="3.0" fill="#d2a060"/></svg>
<div style="left:1272px;top:891px;width:39px;height:61px;background:#976829;border-radius:3px;box-shadow:inset 0 0 0 1px rgba(50,30,5,0.75)"></div>
<div class="t" style="left:1276px;top:894.3px;font-size:10.3px;color:#d4b27c;font-weight:normal;">C02...</div>
<svg style="position:absolute;left:1274px;top:906px;" width="35" height="29" viewBox="0 0 35 29"><rect x="0" y="0" width="20" height="29" fill="#e4e0dc"/><rect x="0" y="20.3" width="20" height="8.7" fill="#cdb096" opacity="0.9"/><ellipse cx="6.3" cy="12.2" rx="5.7" ry="5.8" fill="#d8a898"/><ellipse cx="6.3" cy="7.8" rx="6.0" ry="3.5" fill="#2e2626"/><rect x="1.9" y="16.8" width="8.8" height="12.2" fill="#e8a8a8"/><rect x="20" y="0" width="15" height="29" fill="#ebe8e6"/><rect x="20" y="20.3" width="15" height="8.7" fill="#cdb096" opacity="0.9"/><ellipse cx="30.5" cy="12.2" rx="3.5" ry="5.8" fill="#d8a898"/><ellipse cx="30.5" cy="7.8" rx="3.7" ry="3.5" fill="#2e2626"/><rect x="27.2" y="16.8" width="6.6" height="12.2" fill="#888"/></svg>
<svg style="position:absolute;left:1274px;top:937px;" width="35" height="13" viewBox="0 0 35 13"><rect x="0" y="11.8" width="2" height="1.2" fill="#d2a060"/><rect x="2" y="9.3" width="2" height="3.7" fill="#d2a060"/><rect x="4" y="8.1" width="2" height="4.9" fill="#d2a060"/><rect x="6" y="11.1" width="2" height="1.9" fill="#d2a060"/><rect x="8" y="8.9" width="2" height="4.1" fill="#d2a060"/><rect x="10" y="5.9" width="2" height="7.1" fill="#d2a060"/><rect x="12" y="8.0" width="2" height="5.0" fill="#d2a060"/><rect x="14" y="7.6" width="2" height="5.4" fill="#d2a060"/><rect x="16" y="11.8" width="2" height="1.2" fill="#d2a060"/><rect x="18" y="11.6" width="2" height="1.4" fill="#d2a060"/><rect x="20" y="11.4" width="2" height="1.6" fill="#d2a060"/><rect x="22" y="11.4" width="2" height="1.6" fill="#d2a060"/><rect x="24" y="6.8" width="2" height="6.2" fill="#d2a060"/><rect x="26" y="10.5" width="2" height="2.5" fill="#d2a060"/><rect x="28" y="11.3" width="2" height="1.7" fill="#d2a060"/><rect x="30" y="11.6" width="2" height="1.4" fill="#d2a060"/><rect x="32" y="10.2" width="2" height="2.8" fill="#d2a060"/><rect x="34" y="12.0" width="2" height="1.0" fill="#d2a060"/></svg>
<div style="left:1312px;top:891px;width:18px;height:61px;background:#976829;border-radius:3px;box-shadow:inset 0 0 0 1px rgba(50,30,5,0.75)"></div>
<svg style="position:absolute;left:1314px;top:906px;" width="14" height="29" viewBox="0 0 14 29"><rect x="0" y="0" width="14" height="29" fill="#e6e4e2"/><rect x="0" y="20.3" width="14" height="8.7" fill="#d6b894"/></svg>
<svg style="position:absolute;left:1314px;top:937px;" width="14" height="13" viewBox="0 0 14 13"><rect x="0" y="4.7" width="2" height="8.3" fill="#d2a060"/><rect x="2" y="9.4" width="2" height="3.6" fill="#d2a060"/><rect x="4" y="11.8" width="2" height="1.2" fill="#d2a060"/><rect x="6" y="4.4" width="2" height="8.6" fill="#d2a060"/><rect x="8" y="6.7" width="2" height="6.3" fill="#d2a060"/><rect x="10" y="12.4" width="2" height="0.6" fill="#d2a060"/><rect x="12" y="8.3" width="2" height="4.7" fill="#d2a060"/></svg>
<div style="left:1331px;top:891px;width:10px;height:61px;background:#976829;border-radius:3px;box-shadow:inset 0 0 0 1px rgba(50,30,5,0.75)"></div>
<svg style="position:absolute;left:1333px;top:906px;" width="6" height="29" viewBox="0 0 6 29"><rect x="0" y="0" width="6" height="29" fill="#dedad6"/><rect x="3.3" y="0" width="0.7" height="21.8" fill="#fafafa"/><rect x="0" y="19.7" width="6" height="9.3" fill="#c9ab8a"/><rect x="1.8" y="10.1" width="2.5" height="13.1" fill="#3a3a48"/><rect x="0.9" y="17.4" width="1.8" height="1.5" fill="#7a6a5a"/></svg>
<svg style="position:absolute;left:1333px;top:937px;" width="6" height="13" viewBox="0 0 6 13"><rect x="0" y="9.6" width="2" height="3.4" fill="#d2a060"/><rect x="2" y="10.4" width="2" height="2.6" fill="#d2a060"/><rect x="4" y="11.0" width="2" height="2.0" fill="#d2a060"/></svg>
<div style="left:1342px;top:891px;width:45px;height:61px;background:#976829;border-radius:3px;box-shadow:inset 0 0 0 1px rgba(50,30,5,0.75)"></div>
<div class="t" style="left:1346px;top:894.3px;font-size:10.3px;color:#d4b27c;font-weight:normal;">C0263</div>
<svg style="position:absolute;left:1344px;top:906px;" width="41" height="29" viewBox="0 0 41 29"><rect x="0" y="0" width="20" height="29" fill="#d6cec6"/><rect x="0" y="20.3" width="20" height="8.7" fill="#cdb096" opacity="0.9"/><ellipse cx="12.0" cy="12.2" rx="5.6" ry="5.8" fill="#d8a898"/><ellipse cx="12.0" cy="7.8" rx="5.9" ry="3.5" fill="#2e2626"/><rect x="7.6" y="16.8" width="8.8" height="12.2" fill="#888"/><rect x="20" y="0" width="21" height="29" fill="#d6cec6"/><rect x="20" y="20.3" width="21" height="8.7" fill="#cdb096" opacity="0.9"/><ellipse cx="29.0" cy="12.2" rx="6.3" ry="5.8" fill="#d8a898"/><ellipse cx="29.0" cy="7.8" rx="6.6" ry="3.5" fill="#2e2626"/><rect x="24.4" y="16.8" width="9.2" height="12.2" fill="#6a8ad8"/></svg>
<svg style="position:absolute;left:1344px;top:937px;" width="41" height="13" viewBox="0 0 41 13"><rect x="0" y="9.7" width="2" height="3.3" fill="#d2a060"/><rect x="2" y="10.1" width="2" height="2.9" fill="#d2a060"/><rect x="4" y="9.2" width="2" height="3.8" fill="#d2a060"/><rect x="6" y="11.8" width="2" height="1.2" fill="#d2a060"/><rect x="8" y="8.9" width="2" height="4.1" fill="#d2a060"/><rect x="10" y="10.5" width="2" height="2.5" fill="#d2a060"/><rect x="12" y="10.1" width="2" height="2.9" fill="#d2a060"/><rect x="14" y="10.1" width="2" height="2.9" fill="#d2a060"/><rect x="16" y="11.0" width="2" height="2.0" fill="#d2a060"/><rect x="18" y="8.3" width="2" height="4.7" fill="#d2a060"/><rect x="20" y="8.9" width="2" height="4.1" fill="#d2a060"/><rect x="22" y="10.4" width="2" height="2.6" fill="#d2a060"/><rect x="24" y="9.9" width="2" height="3.1" fill="#d2a060"/><rect x="26" y="12.4" width="2" height="0.6" fill="#d2a060"/><rect x="28" y="9.4" width="2" height="3.6" fill="#d2a060"/><rect x="30" y="8.2" width="2" height="4.8" fill="#d2a060"/><rect x="32" y="10.4" width="2" height="2.6" fill="#d2a060"/><rect x="34" y="11.3" width="2" height="1.7" fill="#d2a060"/><rect x="36" y="11.6" width="2" height="1.4" fill="#d2a060"/><rect x="38" y="8.4" width="2" height="4.6" fill="#d2a060"/><rect x="40" y="11.0" width="2" height="2.0" fill="#d2a060"/></svg>
<div style="left:1388px;top:891px;width:17px;height:61px;background:#976829;border-radius:3px;box-shadow:inset 0 0 0 1px rgba(50,30,5,0.75)"></div>
<svg style="position:absolute;left:1390px;top:906px;" width="13" height="29" viewBox="0 0 13 29"><rect x="0" y="0" width="13" height="29" fill="#ebe8e6"/><rect x="0" y="20.3" width="13" height="8.7" fill="#cdb096" opacity="0.9"/><ellipse cx="6.8" cy="12.2" rx="3.2" ry="5.8" fill="#d8a898"/><ellipse cx="6.8" cy="7.8" rx="3.4" ry="3.5" fill="#2e2626"/><rect x="4.0" y="16.8" width="5.7" height="12.2" fill="#e8a8a8"/></svg>
<svg style="position:absolute;left:1390px;top:937px;" width="13" height="13" viewBox="0 0 13 13"><rect x="0" y="12.1" width="2" height="0.9" fill="#d2a060"/><rect x="2" y="10.4" width="2" height="2.6" fill="#d2a060"/><rect x="4" y="10.6" width="2" height="2.4" fill="#d2a060"/><rect x="6" y="12.2" width="2" height="0.8" fill="#d2a060"/><rect x="8" y="11.9" width="2" height="1.1" fill="#d2a060"/><rect x="10" y="12.0" width="2" height="1.0" fill="#d2a060"/><rect x="12" y="11.7" width="2" height="1.3" fill="#d2a060"/></svg>
<div style="left:1406px;top:891px;width:19px;height:61px;background:#976829;border-radius:3px;box-shadow:inset 0 0 0 1px rgba(50,30,5,0.75)"></div>
<svg style="position:absolute;left:1408px;top:906px;" width="15" height="29" viewBox="0 0 15 29"><rect x="0" y="0" width="15" height="29" fill="#dedad6"/><rect x="8.2" y="0" width="1.8" height="21.8" fill="#fafafa"/><rect x="0" y="19.7" width="15" height="9.3" fill="#c9ab8a"/><rect x="4.5" y="10.1" width="2.5" height="13.1" fill="#3a3a48"/><rect x="2.2" y="17.4" width="4.5" height="1.5" fill="#7a6a5a"/></svg>
<svg style="position:absolute;left:1408px;top:937px;" width="15" height="13" viewBox="0 0 15 13"><rect x="0" y="9.5" width="2" height="3.5" fill="#d2a060"/><rect x="2" y="12.1" width="2" height="0.9" fill="#d2a060"/><rect x="4" y="10.3" width="2" height="2.7" fill="#d2a060"/><rect x="6" y="8.7" width="2" height="4.3" fill="#d2a060"/><rect x="8" y="9.8" width="2" height="3.2" fill="#d2a060"/><rect x="10" y="9.0" width="2" height="4.0" fill="#d2a060"/><rect x="12" y="8.4" width="2" height="4.6" fill="#d2a060"/><rect x="14" y="12.2" width="2" height="0.8" fill="#d2a060"/></svg>
<div style="left:1426px;top:891px;width:28px;height:61px;background:#976829;border-radius:3px;box-shadow:inset 0 0 0 1px rgba(50,30,5,0.75)"></div>
<div class="t" style="left:1430px;top:894.3px;font-size:10.3px;color:#d4b27c;font-weight:normal;">C...</div>
<svg style="position:absolute;left:1428px;top:906px;" width="24" height="29" viewBox="0 0 24 29"><rect x="0" y="0" width="24" height="29" fill="#dedad6"/><rect x="13.2" y="0" width="2.9" height="21.8" fill="#fafafa"/><rect x="0" y="19.7" width="24" height="9.3" fill="#c9ab8a"/><rect x="7.2" y="10.1" width="2.5" height="13.1" fill="#3a3a48"/><rect x="3.6" y="17.4" width="7.2" height="1.5" fill="#7a6a5a"/></svg>
<svg style="position:absolute;left:1428px;top:937px;" width="24" height="13" viewBox="0 0 24 13"><rect x="0" y="9.8" width="2" height="3.2" fill="#d2a060"/><rect x="2" y="10.3" width="2" height="2.7" fill="#d2a060"/><rect x="4" y="10.6" width="2" height="2.4" fill="#d2a060"/><rect x="6" y="10.1" width="2" height="2.9" fill="#d2a060"/><rect x="8" y="2.9" width="2" height="10.1" fill="#d2a060"/><rect x="10" y="10.8" width="2" height="2.2" fill="#d2a060"/><rect x="12" y="9.5" width="2" height="3.5" fill="#d2a060"/><rect x="14" y="5.7" width="2" height="7.3" fill="#d2a060"/><rect x="16" y="6.2" width="2" height="6.8" fill="#d2a060"/><rect x="18" y="10.1" width="2" height="2.9" fill="#d2a060"/><rect x="20" y="7.0" width="2" height="6.0" fill="#d2a060"/><rect x="22" y="12.1" width="2" height="0.9" fill="#d2a060"/></svg>
<div style="left:1455px;top:891px;width:119px;height:61px;background:#976829;border-radius:3px;box-shadow:inset 0 0 0 1px rgba(50,30,5,0.75)"></div>
<div class="t" style="left:1459px;top:894.3px;font-size:10.3px;color:#d4b27c;font-weight:normal;">C0295</div>
<svg style="position:absolute;left:1457px;top:906px;" width="115" height="29" viewBox="0 0 115 29"><rect x="0" y="0" width="42" height="29" fill="#dedad6"/><rect x="23.1" y="0" width="5.0" height="21.8" fill="#fafafa"/><rect x="0" y="19.7" width="42" height="9.3" fill="#c9ab8a"/><rect x="12.6" y="10.1" width="2.5" height="13.1" fill="#3a3a48"/><rect x="6.3" y="17.4" width="12.6" height="1.5" fill="#7a6a5a"/><rect x="42" y="0" width="42" height="29" fill="#dedad6"/><rect x="65.1" y="0" width="5.0" height="21.8" fill="#fafafa"/><rect x="42" y="19.7" width="42" height="9.3" fill="#c9ab8a"/><rect x="54.6" y="10.1" width="2.5" height="13.1" fill="#3a3a48"/><rect x="48.3" y="17.4" width="12.6" height="1.5" fill="#7a6a5a"/><rect x="84" y="0" width="31" height="29" fill="#dedad6"/><rect x="101.0" y="0" width="3.7" height="21.8" fill="#fafafa"/><rect x="84" y="19.7" width="31" height="9.3" fill="#c9ab8a"/><rect x="93.3" y="10.1" width="2.5" height="13.1" fill="#3a3a48"/><rect x="88.7" y="17.4" width="9.3" height="1.5" fill="#7a6a5a"/></svg>
<svg style="position:absolute;left:1457px;top:937px;" width="115" height="13" viewBox="0 0 115 13"><rect x="0" y="12.1" width="2" height="0.9" fill="#d2a060"/><rect x="2" y="11.9" width="2" height="1.1" fill="#d2a060"/><rect x="4" y="11.9" width="2" height="1.1" fill="#d2a060"/><rect x="6" y="12.0" width="2" height="1.0" fill="#d2a060"/><rect x="8" y="11.2" width="2" height="1.8" fill="#d2a060"/><rect x="10" y="11.7" width="2" height="1.3" fill="#d2a060"/><rect x="12" y="12.2" width="2" height="0.8" fill="#d2a060"/><rect x="14" y="11.1" width="2" height="1.9" fill="#d2a060"/><rect x="16" y="11.5" width="2" height="1.5" fill="#d2a060"/><rect x="18" y="12.2" width="2" height="0.8" fill="#d2a060"/><rect x="20" y="12.2" width="2" height="0.8" fill="#d2a060"/><rect x="22" y="11.0" width="2" height="2.0" fill="#d2a060"/><rect x="24" y="11.7" width="2" height="1.3" fill="#d2a060"/><rect x="26" y="11.7" width="2" height="1.3" fill="#d2a060"/><rect x="28" y="12.0" width="2" height="1.0" fill="#d2a060"/><rect x="30" y="11.8" width="2" height="1.2" fill="#d2a060"/><rect x="32" y="11.4" width="2" height="1.6" fill="#d2a060"/><rect x="34" y="12.3" width="2" height="0.7" fill="#d2a060"/><rect x="36" y="12.1" width="2" height="0.9" fill="#d2a060"/><rect x="38" y="12.3" width="2" height="0.7" fill="#d2a060"/><rect x="40" y="11.9" width="2" height="1.1" fill="#d2a060"/><rect x="42" y="11.9" width="2" height="1.1" fill="#d2a060"/><rect x="44" y="12.2" width="2" height="0.8" fill="#d2a060"/><rect x="46" y="11.4" width="2" height="1.6" fill="#d2a060"/><rect x="48" y="11.9" width="2" height="1.1" fill="#d2a060"/><rect x="50" y="11.1" width="2" height="1.9" fill="#d2a060"/><rect x="52" y="12.5" width="2" height="0.5" fill="#d2a060"/><rect x="54" y="12.5" width="2" height="0.5" fill="#d2a060"/><rect x="56" y="11.6" width="2" height="1.4" fill="#d2a060"/><rect x="58" y="12.0" width="2" height="1.0" fill="#d2a060"/><rect x="60" y="11.7" width="2" height="1.3" fill="#d2a060"/><rect x="62" y="11.2" width="2" height="1.8" fill="#d2a060"/><rect x="64" y="11.2" width="2" height="1.8" fill="#d2a060"/><rect x="66" y="11.8" width="2" height="1.2" fill="#d2a060"/><rect x="68" y="12.4" width="2" height="0.6" fill="#d2a060"/><rect x="70" y="11.5" width="2" height="1.5" fill="#d2a060"/><rect x="72" y="11.7" width="2" height="1.3" fill="#d2a060"/><rect x="74" y="12.0" width="2" height="1.0" fill="#d2a060"/><rect x="76" y="12.5" width="2" height="0.5" fill="#d2a060"/><rect x="78" y="12.5" width="2" height="0.5" fill="#d2a060"/><rect x="80" y="11.6" width="2" height="1.4" fill="#d2a060"/><rect x="82" y="11.1" width="2" height="1.9" fill="#d2a060"/><rect x="84" y="11.9" width="2" height="1.1" fill="#d2a060"/><rect x="86" y="11.2" width="2" height="1.8" fill="#d2a060"/><rect x="88" y="11.8" width="2" height="1.2" fill="#d2a060"/><rect x="90" y="11.8" width="2" height="1.2" fill="#d2a060"/><rect x="92" y="12.1" width="2" height="0.9" fill="#d2a060"/><rect x="94" y="12.2" width="2" height="0.8" fill="#d2a060"/><rect x="96" y="12.3" width="2" height="0.7" fill="#d2a060"/><rect x="98" y="12.2" width="2" height="0.8" fill="#d2a060"/><rect x="100" y="11.6" width="2" height="1.4" fill="#d2a060"/><rect x="102" y="11.5" width="2" height="1.5" fill="#d2a060"/><rect x="104" y="12.0" width="2" height="1.0" fill="#d2a060"/><rect x="106" y="12.3" width="2" height="0.7" fill="#d2a060"/><rect x="108" y="12.0" width="2" height="1.0" fill="#d2a060"/><rect x="110" y="11.9" width="2" height="1.1" fill="#d2a060"/><rect x="112" y="12.5" width="2" height="0.5" fill="#d2a060"/><rect x="114" y="11.1" width="2" height="1.9" fill="#d2a060"/></svg>
<div style="left:1575px;top:891px;width:68px;height:61px;background:#976829;border-radius:3px;box-shadow:inset 0 0 0 1px rgba(50,30,5,0.75)"></div>
<div class="t" style="left:1579px;top:894.3px;font-size:10.3px;color:#d4b27c;font-weight:normal;">C0289</div>
<svg style="position:absolute;left:1577px;top:906px;" width="64" height="29" viewBox="0 0 64 29"><rect x="0" y="0" width="42" height="29" fill="#e2dedc"/><rect x="0" y="20.9" width="42" height="8.1" fill="#cfa878"/><ellipse cx="7.6" cy="19.1" rx="5.9" ry="7.2" fill="#e6b82a"/><ellipse cx="7.6" cy="8.1" rx="2.5" ry="3.5" fill="#c89a88"/><ellipse cx="21.0" cy="19.1" rx="5.9" ry="7.2" fill="#8a5ae0"/><ellipse cx="21.0" cy="8.1" rx="2.5" ry="3.5" fill="#c89a88"/><ellipse cx="34.4" cy="19.1" rx="5.9" ry="7.2" fill="#e0382a"/><ellipse cx="34.4" cy="8.1" rx="2.5" ry="3.5" fill="#c89a88"/><rect x="42" y="0" width="22" height="29" fill="#e2dedc"/><rect x="42" y="20.9" width="22" height="8.1" fill="#cfa878"/><ellipse cx="46.0" cy="19.1" rx="3.1" ry="7.2" fill="#e6b82a"/><ellipse cx="46.0" cy="8.1" rx="1.3" ry="3.5" fill="#c89a88"/><ellipse cx="53.0" cy="19.1" rx="3.1" ry="7.2" fill="#8a5ae0"/><ellipse cx="53.0" cy="8.1" rx="1.3" ry="3.5" fill="#c89a88"/><ellipse cx="60.0" cy="19.1" rx="3.1" ry="7.2" fill="#e0382a"/><ellipse cx="60.0" cy="8.1" rx="1.3" ry="3.5" fill="#c89a88"/></svg>
<svg style="position:absolute;left:1577px;top:937px;" width="64" height="13" viewBox="0 0 64 13"><rect x="0" y="11.7" width="2" height="1.3" fill="#d2a060"/><rect x="2" y="11.6" width="2" height="1.4" fill="#d2a060"/><rect x="4" y="12.4" width="2" height="0.6" fill="#d2a060"/><rect x="6" y="11.8" width="2" height="1.2" fill="#d2a060"/><rect x="8" y="11.7" width="2" height="1.3" fill="#d2a060"/><rect x="10" y="11.7" width="2" height="1.3" fill="#d2a060"/><rect x="12" y="12.3" width="2" height="0.7" fill="#d2a060"/><rect x="14" y="11.5" width="2" height="1.5" fill="#d2a060"/><rect x="16" y="12.3" width="2" height="0.7" fill="#d2a060"/><rect x="18" y="11.6" width="2" height="1.4" fill="#d2a060"/><rect x="20" y="12.2" width="2" height="0.8" fill="#d2a060"/><rect x="22" y="11.3" width="2" height="1.7" fill="#d2a060"/><rect x="24" y="12.0" width="2" height="1.0" fill="#d2a060"/><rect x="26" y="11.4" width="2" height="1.6" fill="#d2a060"/><rect x="28" y="12.5" width="2" height="0.5" fill="#d2a060"/><rect x="30" y="11.6" width="2" height="1.4" fill="#d2a060"/><rect x="32" y="11.8" width="2" height="1.2" fill="#d2a060"/><rect x="34" y="11.2" width="2" height="1.8" fill="#d2a060"/><rect x="36" y="11.2" width="2" height="1.8" fill="#d2a060"/><rect x="38" y="12.1" width="2" height="0.9" fill="#d2a060"/><rect x="40" y="11.7" width="2" height="1.3" fill="#d2a060"/><rect x="42" y="11.1" width="2" height="1.9" fill="#d2a060"/><rect x="44" y="11.3" width="2" height="1.7" fill="#d2a060"/><rect x="46" y="12.4" width="2" height="0.6" fill="#d2a060"/><rect x="48" y="11.1" width="2" height="1.9" fill="#d2a060"/><rect x="50" y="11.7" width="2" height="1.3" fill="#d2a060"/><rect x="52" y="12.1" width="2" height="0.9" fill="#d2a060"/><rect x="54" y="12.0" width="2" height="1.0" fill="#d2a060"/><rect x="56" y="11.8" width="2" height="1.2" fill="#d2a060"/><rect x="58" y="12.4" width="2" height="0.6" fill="#d2a060"/><rect x="60" y="11.2" width="2" height="1.8" fill="#d2a060"/><rect x="62" y="12.0" width="2" height="1.0" fill="#d2a060"/></svg>
<div style="left:1644px;top:891px;width:118px;height:61px;background:#976829;border-radius:3px;box-shadow:inset 0 0 0 1px rgba(50,30,5,0.75)"></div>
<div class="t" style="left:1648px;top:894.3px;font-size:10.3px;color:#d4b27c;font-weight:normal;">C0295</div>
<svg style="position:absolute;left:1646px;top:906px;" width="114" height="29" viewBox="0 0 114 29"><rect x="0" y="0" width="42" height="29" fill="#dedad6"/><rect x="23.1" y="0" width="5.0" height="21.8" fill="#fafafa"/><rect x="0" y="19.7" width="42" height="9.3" fill="#c9ab8a"/><rect x="12.6" y="10.1" width="2.5" height="13.1" fill="#3a3a48"/><rect x="6.3" y="17.4" width="12.6" height="1.5" fill="#7a6a5a"/><rect x="42" y="0" width="42" height="29" fill="#dedad6"/><rect x="65.1" y="0" width="5.0" height="21.8" fill="#fafafa"/><rect x="42" y="19.7" width="42" height="9.3" fill="#c9ab8a"/><rect x="54.6" y="10.1" width="2.5" height="13.1" fill="#3a3a48"/><rect x="48.3" y="17.4" width="12.6" height="1.5" fill="#7a6a5a"/><rect x="84" y="0" width="30" height="29" fill="#dedad6"/><rect x="100.5" y="0" width="3.6" height="21.8" fill="#fafafa"/><rect x="84" y="19.7" width="30" height="9.3" fill="#c9ab8a"/><rect x="93.0" y="10.1" width="2.5" height="13.1" fill="#3a3a48"/><rect x="88.5" y="17.4" width="9.0" height="1.5" fill="#7a6a5a"/></svg>
<svg style="position:absolute;left:1646px;top:937px;" width="114" height="13" viewBox="0 0 114 13"><rect x="0" y="11.0" width="2" height="2.0" fill="#d2a060"/><rect x="2" y="11.8" width="2" height="1.2" fill="#d2a060"/><rect x="4" y="11.8" width="2" height="1.2" fill="#d2a060"/><rect x="6" y="11.6" width="2" height="1.4" fill="#d2a060"/><rect x="8" y="11.3" width="2" height="1.7" fill="#d2a060"/><rect x="10" y="12.4" width="2" height="0.6" fill="#d2a060"/><rect x="12" y="12.3" width="2" height="0.7" fill="#d2a060"/><rect x="14" y="11.3" width="2" height="1.7" fill="#d2a060"/><rect x="16" y="11.6" width="2" height="1.4" fill="#d2a060"/><rect x="18" y="11.6" width="2" height="1.4" fill="#d2a060"/><rect x="20" y="12.2" width="2" height="0.8" fill="#d2a060"/><rect x="22" y="12.3" width="2" height="0.7" fill="#d2a060"/><rect x="24" y="11.7" width="2" height="1.3" fill="#d2a060"/><rect x="26" y="12.4" width="2" height="0.6" fill="#d2a060"/><rect x="28" y="12.5" width="2" height="0.5" fill="#d2a060"/><rect x="30" y="11.9" width="2" height="1.1" fill="#d2a060"/><rect x="32" y="11.4" width="2" height="1.6" fill="#d2a060"/><rect x="34" y="11.3" width="2" height="1.7" fill="#d2a060"/><rect x="36" y="11.0" width="2" height="2.0" fill="#d2a060"/><rect x="38" y="11.4" width="2" height="1.6" fill="#d2a060"/><rect x="40" y="12.2" width="2" height="0.8" fill="#d2a060"/><rect x="42" y="12.2" width="2" height="0.8" fill="#d2a060"/><rect x="44" y="12.1" width="2" height="0.9" fill="#d2a060"/><rect x="46" y="11.7" width="2" height="1.3" fill="#d2a060"/><rect x="48" y="11.9" width="2" height="1.1" fill="#d2a060"/><rect x="50" y="11.2" width="2" height="1.8" fill="#d2a060"/><rect x="52" y="12.1" width="2" height="0.9" fill="#d2a060"/><rect x="54" y="11.9" width="2" height="1.1" fill="#d2a060"/><rect x="56" y="11.5" width="2" height="1.5" fill="#d2a060"/><rect x="58" y="12.1" width="2" height="0.9" fill="#d2a060"/><rect x="60" y="12.1" width="2" height="0.9" fill="#d2a060"/><rect x="62" y="12.0" width="2" height="1.0" fill="#d2a060"/><rect x="64" y="11.4" width="2" height="1.6" fill="#d2a060"/><rect x="66" y="12.5" width="2" height="0.5" fill="#d2a060"/><rect x="68" y="12.1" width="2" height="0.9" fill="#d2a060"/><rect x="70" y="11.5" width="2" height="1.5" fill="#d2a060"/><rect x="72" y="11.4" width="2" height="1.6" fill="#d2a060"/><rect x="74" y="11.7" width="2" height="1.3" fill="#d2a060"/><rect x="76" y="12.5" width="2" height="0.5" fill="#d2a060"/><rect x="78" y="12.1" width="2" height="0.9" fill="#d2a060"/><rect x="80" y="11.1" width="2" height="1.9" fill="#d2a060"/><rect x="82" y="11.3" width="2" height="1.7" fill="#d2a060"/><rect x="84" y="11.8" width="2" height="1.2" fill="#d2a060"/><rect x="86" y="12.3" width="2" height="0.7" fill="#d2a060"/><rect x="88" y="11.0" width="2" height="2.0" fill="#d2a060"/><rect x="90" y="11.9" width="2" height="1.1" fill="#d2a060"/><rect x="92" y="11.2" width="2" height="1.8" fill="#d2a060"/><rect x="94" y="12.0" width="2" height="1.0" fill="#d2a060"/><rect x="96" y="12.2" width="2" height="0.8" fill="#d2a060"/><rect x="98" y="11.1" width="2" height="1.9" fill="#d2a060"/><rect x="100" y="11.2" width="2" height="1.8" fill="#d2a060"/><rect x="102" y="11.0" width="2" height="2.0" fill="#d2a060"/><rect x="104" y="12.4" width="2" height="0.6" fill="#d2a060"/><rect x="106" y="12.2" width="2" height="0.8" fill="#d2a060"/><rect x="108" y="11.3" width="2" height="1.7" fill="#d2a060"/><rect x="110" y="11.1" width="2" height="1.9" fill="#d2a060"/><rect x="112" y="12.0" width="2" height="1.0" fill="#d2a060"/></svg>
<div style="left:421px;top:948px;width:19px;height:29px;background:#976829;border-radius:3px;box-shadow:inset 0 0 0 1px rgba(50,30,5,0.75)"></div>
<svg style="position:absolute;left:423px;top:962px;" width="15" height="13" viewBox="0 0 15 13"><rect x="0" y="12.2" width="2" height="0.8" fill="#d2a060"/><rect x="2" y="10.6" width="2" height="2.4" fill="#d2a060"/><rect x="4" y="12.1" width="2" height="0.9" fill="#d2a060"/><rect x="6" y="10.8" width="2" height="2.2" fill="#d2a060"/><rect x="8" y="11.1" width="2" height="1.9" fill="#d2a060"/><rect x="10" y="8.6" width="2" height="4.4" fill="#d2a060"/><rect x="12" y="9.5" width="2" height="3.5" fill="#d2a060"/><rect x="14" y="11.5" width="2" height="1.5" fill="#d2a060"/></svg>
<div style="left:441px;top:961px;width:9px;height:29px;background:#976829;border-radius:3px"></div>
<div style="left:498px;top:961px;width:27px;height:29px;background:#976829;border-radius:3px;box-shadow:inset 0 0 0 1px rgba(50,30,5,0.75)"></div>
<div class="t" style="left:502px;top:964.3px;font-size:10.3px;color:#d4b27c;font-weight:normal;">C...</div>
<svg style="position:absolute;left:500px;top:975px;" width="23" height="13" viewBox="0 0 23 13"><rect x="0" y="11.4" width="2" height="1.6" fill="#d2a060"/><rect x="2" y="12.4" width="2" height="0.6" fill="#d2a060"/><rect x="4" y="11.0" width="2" height="2.0" fill="#d2a060"/><rect x="6" y="10.3" width="2" height="2.7" fill="#d2a060"/><rect x="8" y="10.6" width="2" height="2.4" fill="#d2a060"/><rect x="10" y="10.5" width="2" height="2.5" fill="#d2a060"/><rect x="12" y="11.7" width="2" height="1.3" fill="#d2a060"/><rect x="14" y="10.8" width="2" height="2.2" fill="#d2a060"/><rect x="16" y="11.8" width="2" height="1.2" fill="#d2a060"/><rect x="18" y="12.5" width="2" height="0.5" fill="#d2a060"/><rect x="20" y="11.9" width="2" height="1.1" fill="#d2a060"/><rect x="22" y="11.6" width="2" height="1.4" fill="#d2a060"/></svg>
<div style="left:76px;top:998px;width:92px;height:29px;background:#283f6c;border-radius:3px;box-shadow:inset 0 0 0 1px rgba(0,0,0,0.25)"></div>
<svg style="position:absolute;left:76px;top:1013px;" width="92" height="12" viewBox="0 0 92 12"><rect x="0" y="6.9" width="2" height="5.1" fill="#6f88c0"/><rect x="2" y="5.2" width="2" height="6.8" fill="#6f88c0"/><rect x="4" y="6.8" width="2" height="5.2" fill="#6f88c0"/><rect x="6" y="5.8" width="2" height="6.2" fill="#6f88c0"/><rect x="8" y="5.7" width="2" height="6.3" fill="#6f88c0"/><rect x="10" y="5.2" width="2" height="6.8" fill="#6f88c0"/><rect x="12" y="7.6" width="2" height="4.4" fill="#6f88c0"/><rect x="14" y="5.7" width="2" height="6.3" fill="#6f88c0"/><rect x="16" y="6.5" width="2" height="5.5" fill="#6f88c0"/><rect x="18" y="8.0" width="2" height="4.0" fill="#6f88c0"/><rect x="20" y="5.9" width="2" height="6.1" fill="#6f88c0"/><rect x="22" y="7.8" width="2" height="4.2" fill="#6f88c0"/><rect x="24" y="5.6" width="2" height="6.4" fill="#6f88c0"/><rect x="26" y="8.0" width="2" height="4.0" fill="#6f88c0"/><rect x="28" y="6.2" width="2" height="5.8" fill="#6f88c0"/><rect x="30" y="6.0" width="2" height="6.0" fill="#6f88c0"/><rect x="32" y="7.3" width="2" height="4.7" fill="#6f88c0"/><rect x="34" y="7.0" width="2" height="5.0" fill="#6f88c0"/><rect x="36" y="5.1" width="2" height="6.9" fill="#6f88c0"/><rect x="38" y="7.8" width="2" height="4.2" fill="#6f88c0"/><rect x="40" y="5.7" width="2" height="6.3" fill="#6f88c0"/><rect x="42" y="5.5" width="2" height="6.5" fill="#6f88c0"/><rect x="44" y="6.4" width="2" height="5.6" fill="#6f88c0"/><rect x="46" y="6.4" width="2" height="5.6" fill="#6f88c0"/><rect x="48" y="7.0" width="2" height="5.0" fill="#6f88c0"/><rect x="50" y="5.1" width="2" height="6.9" fill="#6f88c0"/><rect x="52" y="6.0" width="2" height="6.0" fill="#6f88c0"/><rect x="54" y="5.2" width="2" height="6.8" fill="#6f88c0"/><rect x="56" y="5.9" width="2" height="6.1" fill="#6f88c0"/><rect x="58" y="5.3" width="2" height="6.7" fill="#6f88c0"/><rect x="60" y="6.8" width="2" height="5.2" fill="#6f88c0"/><rect x="62" y="5.4" width="2" height="6.6" fill="#6f88c0"/><rect x="64" y="6.5" width="2" height="5.5" fill="#6f88c0"/><rect x="66" y="5.1" width="2" height="6.9" fill="#6f88c0"/><rect x="68" y="7.7" width="2" height="4.3" fill="#6f88c0"/><rect x="70" y="8.1" width="2" height="3.9" fill="#6f88c0"/><rect x="72" y="6.9" width="2" height="5.1" fill="#6f88c0"/><rect x="74" y="8.3" width="2" height="3.7" fill="#6f88c0"/><rect x="76" y="6.7" width="2" height="5.3" fill="#6f88c0"/><rect x="78" y="7.8" width="2" height="4.2" fill="#6f88c0"/><rect x="80" y="6.9" width="2" height="5.1" fill="#6f88c0"/><rect x="82" y="5.4" width="2" height="6.6" fill="#6f88c0"/><rect x="84" y="5.6" width="2" height="6.4" fill="#6f88c0"/><rect x="86" y="7.5" width="2" height="4.5" fill="#6f88c0"/><rect x="88" y="6.3" width="2" height="5.7" fill="#6f88c0"/><rect x="90" y="7.4" width="2" height="4.6" fill="#6f88c0"/></svg>
<div class="t" style="left:80px;top:1001.1px;font-size:10.5px;color:#b0bedc;font-weight:normal;-webkit-text-stroke:0.15px currentColor">Tiptoe_Out_the...</div>
<div style="left:215px;top:998px;width:24px;height:29px;background:#2a5f6c;border-radius:3px;box-shadow:inset 0 0 0 1px rgba(0,0,0,0.25)"></div>
<svg style="position:absolute;left:215px;top:1013px;" width="24" height="12" viewBox="0 0 24 12"><rect x="0" y="6.4" width="2" height="5.6" fill="#5aa6b0"/><rect x="2" y="7.2" width="2" height="4.8" fill="#5aa6b0"/><rect x="4" y="8.3" width="2" height="3.7" fill="#5aa6b0"/><rect x="6" y="6.2" width="2" height="5.8" fill="#5aa6b0"/><rect x="8" y="5.2" width="2" height="6.8" fill="#5aa6b0"/><rect x="10" y="6.4" width="2" height="5.6" fill="#5aa6b0"/><rect x="12" y="6.5" width="2" height="5.5" fill="#5aa6b0"/><rect x="14" y="5.9" width="2" height="6.1" fill="#5aa6b0"/><rect x="16" y="6.3" width="2" height="5.7" fill="#5aa6b0"/><rect x="18" y="6.3" width="2" height="5.7" fill="#5aa6b0"/><rect x="20" y="7.6" width="2" height="4.4" fill="#5aa6b0"/><rect x="22" y="8.0" width="2" height="4.0" fill="#5aa6b0"/></svg>
<div class="t" style="left:219px;top:1001.1px;font-size:10.5px;color:#a9c6cc;font-weight:normal;-webkit-text-stroke:0.15px currentColor">C...</div>
<div style="left:307px;top:998px;width:8px;height:29px;background:#2a5f6c;border-radius:3px;box-shadow:inset 0 0 0 1px rgba(0,0,0,0.25)"></div>
<svg style="position:absolute;left:307px;top:1013px;" width="8" height="12" viewBox="0 0 8 12"><rect x="0" y="6.0" width="2" height="6.0" fill="#5aa6b0"/><rect x="2" y="6.7" width="2" height="5.3" fill="#5aa6b0"/><rect x="4" y="5.8" width="2" height="6.2" fill="#5aa6b0"/><rect x="6" y="6.5" width="2" height="5.5" fill="#5aa6b0"/></svg>
<div style="left:869px;top:998px;width:42px;height:29px;background:#2a5f6c;border-radius:3px;box-shadow:inset 0 0 0 1px rgba(0,0,0,0.25)"></div>
<svg style="position:absolute;left:869px;top:1013px;" width="42" height="12" viewBox="0 0 42 12"><rect x="0" y="8.1" width="2" height="3.9" fill="#5aa6b0"/><rect x="2" y="5.1" width="2" height="6.9" fill="#5aa6b0"/><rect x="4" y="6.1" width="2" height="5.9" fill="#5aa6b0"/><rect x="6" y="7.5" width="2" height="4.5" fill="#5aa6b0"/><rect x="8" y="6.2" width="2" height="5.8" fill="#5aa6b0"/><rect x="10" y="5.7" width="2" height="6.3" fill="#5aa6b0"/><rect x="12" y="5.7" width="2" height="6.3" fill="#5aa6b0"/><rect x="14" y="5.5" width="2" height="6.5" fill="#5aa6b0"/><rect x="16" y="6.0" width="2" height="6.0" fill="#5aa6b0"/><rect x="18" y="8.2" width="2" height="3.8" fill="#5aa6b0"/><rect x="20" y="7.9" width="2" height="4.1" fill="#5aa6b0"/><rect x="22" y="7.5" width="2" height="4.5" fill="#5aa6b0"/><rect x="24" y="5.8" width="2" height="6.2" fill="#5aa6b0"/><rect x="26" y="7.1" width="2" height="4.9" fill="#5aa6b0"/><rect x="28" y="7.9" width="2" height="4.1" fill="#5aa6b0"/><rect x="30" y="7.1" width="2" height="4.9" fill="#5aa6b0"/><rect x="32" y="6.5" width="2" height="5.5" fill="#5aa6b0"/><rect x="34" y="7.3" width="2" height="4.7" fill="#5aa6b0"/><rect x="36" y="8.4" width="2" height="3.6" fill="#5aa6b0"/><rect x="38" y="6.2" width="2" height="5.8" fill="#5aa6b0"/><rect x="40" y="6.5" width="2" height="5.5" fill="#5aa6b0"/></svg>
<div class="t" style="left:873px;top:1001.1px;font-size:10.5px;color:#a9c6cc;font-weight:normal;-webkit-text-stroke:0.15px currentColor">Crow...</div>
<div style="left:928px;top:998px;width:88px;height:29px;background:#283f6c;border-radius:3px;box-shadow:inset 0 0 0 1px rgba(0,0,0,0.25)"></div>
<svg style="position:absolute;left:928px;top:1013px;" width="88" height="12" viewBox="0 0 88 12"><rect x="0" y="6.7" width="2" height="5.3" fill="#6f88c0"/><rect x="2" y="5.7" width="2" height="6.3" fill="#6f88c0"/><rect x="4" y="7.8" width="2" height="4.2" fill="#6f88c0"/><rect x="6" y="7.2" width="2" height="4.8" fill="#6f88c0"/><rect x="8" y="6.2" width="2" height="5.8" fill="#6f88c0"/><rect x="10" y="6.4" width="2" height="5.6" fill="#6f88c0"/><rect x="12" y="6.4" width="2" height="5.6" fill="#6f88c0"/><rect x="14" y="5.3" width="2" height="6.7" fill="#6f88c0"/><rect x="16" y="7.9" width="2" height="4.1" fill="#6f88c0"/><rect x="18" y="6.7" width="2" height="5.3" fill="#6f88c0"/><rect x="20" y="5.4" width="2" height="6.6" fill="#6f88c0"/><rect x="22" y="5.7" width="2" height="6.3" fill="#6f88c0"/><rect x="24" y="6.2" width="2" height="5.8" fill="#6f88c0"/><rect x="26" y="5.4" width="2" height="6.6" fill="#6f88c0"/><rect x="28" y="7.0" width="2" height="5.0" fill="#6f88c0"/><rect x="30" y="6.3" width="2" height="5.7" fill="#6f88c0"/><rect x="32" y="8.3" width="2" height="3.7" fill="#6f88c0"/><rect x="34" y="6.3" width="2" height="5.7" fill="#6f88c0"/><rect x="36" y="6.5" width="2" height="5.5" fill="#6f88c0"/><rect x="38" y="7.3" width="2" height="4.7" fill="#6f88c0"/><rect x="40" y="5.5" width="2" height="6.5" fill="#6f88c0"/><rect x="42" y="8.1" width="2" height="3.9" fill="#6f88c0"/><rect x="44" y="8.2" width="2" height="3.8" fill="#6f88c0"/><rect x="46" y="8.1" width="2" height="3.9" fill="#6f88c0"/><rect x="48" y="5.4" width="2" height="6.6" fill="#6f88c0"/><rect x="50" y="6.7" width="2" height="5.3" fill="#6f88c0"/><rect x="52" y="7.5" width="2" height="4.5" fill="#6f88c0"/><rect x="54" y="6.4" width="2" height="5.6" fill="#6f88c0"/><rect x="56" y="7.3" width="2" height="4.7" fill="#6f88c0"/><rect x="58" y="6.5" width="2" height="5.5" fill="#6f88c0"/><rect x="60" y="5.9" width="2" height="6.1" fill="#6f88c0"/><rect x="62" y="7.5" width="2" height="4.5" fill="#6f88c0"/><rect x="64" y="6.6" width="2" height="5.4" fill="#6f88c0"/><rect x="66" y="7.0" width="2" height="5.0" fill="#6f88c0"/><rect x="68" y="7.3" width="2" height="4.7" fill="#6f88c0"/><rect x="70" y="6.4" width="2" height="5.6" fill="#6f88c0"/><rect x="72" y="6.4" width="2" height="5.6" fill="#6f88c0"/><rect x="74" y="6.6" width="2" height="5.4" fill="#6f88c0"/><rect x="76" y="6.8" width="2" height="5.2" fill="#6f88c0"/><rect x="78" y="5.2" width="2" height="6.8" fill="#6f88c0"/><rect x="80" y="6.7" width="2" height="5.3" fill="#6f88c0"/><rect x="82" y="6.9" width="2" height="5.1" fill="#6f88c0"/><rect x="84" y="5.7" width="2" height="6.3" fill="#6f88c0"/><rect x="86" y="6.6" width="2" height="5.4" fill="#6f88c0"/></svg>
<div class="t" style="left:932px;top:1001.1px;font-size:10.5px;color:#b0bedc;font-weight:normal;-webkit-text-stroke:0.15px currentColor">Tiptoe_Out_the...</div>
<div style="left:1245px;top:998px;width:20px;height:29px;background:#283f6c;border-radius:3px;box-shadow:inset 0 0 0 1px rgba(0,0,0,0.25)"></div>
<svg style="position:absolute;left:1245px;top:1013px;" width="20" height="12" viewBox="0 0 20 12"><rect x="0" y="6.9" width="2" height="5.1" fill="#6f88c0"/><rect x="2" y="8.2" width="2" height="3.8" fill="#6f88c0"/><rect x="4" y="7.8" width="2" height="4.2" fill="#6f88c0"/><rect x="6" y="6.2" width="2" height="5.8" fill="#6f88c0"/><rect x="8" y="8.2" width="2" height="3.8" fill="#6f88c0"/><rect x="10" y="6.9" width="2" height="5.1" fill="#6f88c0"/><rect x="12" y="5.6" width="2" height="6.4" fill="#6f88c0"/><rect x="14" y="7.1" width="2" height="4.9" fill="#6f88c0"/><rect x="16" y="5.3" width="2" height="6.7" fill="#6f88c0"/><rect x="18" y="8.1" width="2" height="3.9" fill="#6f88c0"/></svg>
<div class="t" style="left:1249px;top:1001.1px;font-size:10.5px;color:#b0bedc;font-weight:normal;-webkit-text-stroke:0.15px currentColor">...</div>
<div style="left:1337px;top:998px;width:88px;height:29px;background:#283f6c;border-radius:3px;box-shadow:inset 0 0 0 1px rgba(0,0,0,0.25)"></div>
<svg style="position:absolute;left:1337px;top:1013px;" width="88" height="12" viewBox="0 0 88 12"><rect x="0" y="6.6" width="2" height="5.4" fill="#6f88c0"/><rect x="2" y="8.3" width="2" height="3.7" fill="#6f88c0"/><rect x="4" y="5.3" width="2" height="6.7" fill="#6f88c0"/><rect x="6" y="7.4" width="2" height="4.6" fill="#6f88c0"/><rect x="8" y="6.5" width="2" height="5.5" fill="#6f88c0"/><rect x="10" y="8.3" width="2" height="3.7" fill="#6f88c0"/><rect x="12" y="7.6" width="2" height="4.4" fill="#6f88c0"/><rect x="14" y="6.9" width="2" height="5.1" fill="#6f88c0"/><rect x="16" y="7.8" width="2" height="4.2" fill="#6f88c0"/><rect x="18" y="6.5" width="2" height="5.5" fill="#6f88c0"/><rect x="20" y="5.8" width="2" height="6.2" fill="#6f88c0"/><rect x="22" y="7.8" width="2" height="4.2" fill="#6f88c0"/><rect x="24" y="6.1" width="2" height="5.9" fill="#6f88c0"/><rect x="26" y="7.8" width="2" height="4.2" fill="#6f88c0"/><rect x="28" y="7.4" width="2" height="4.6" fill="#6f88c0"/><rect x="30" y="7.2" width="2" height="4.8" fill="#6f88c0"/><rect x="32" y="7.5" width="2" height="4.5" fill="#6f88c0"/><rect x="34" y="6.9" width="2" height="5.1" fill="#6f88c0"/><rect x="36" y="7.1" width="2" height="4.9" fill="#6f88c0"/><rect x="38" y="5.7" width="2" height="6.3" fill="#6f88c0"/><rect x="40" y="7.9" width="2" height="4.1" fill="#6f88c0"/><rect x="42" y="6.2" width="2" height="5.8" fill="#6f88c0"/><rect x="44" y="5.9" width="2" height="6.1" fill="#6f88c0"/><rect x="46" y="6.1" width="2" height="5.9" fill="#6f88c0"/><rect x="48" y="6.4" width="2" height="5.6" fill="#6f88c0"/><rect x="50" y="7.8" width="2" height="4.2" fill="#6f88c0"/><rect x="52" y="8.1" width="2" height="3.9" fill="#6f88c0"/><rect x="54" y="8.1" width="2" height="3.9" fill="#6f88c0"/><rect x="56" y="6.8" width="2" height="5.2" fill="#6f88c0"/><rect x="58" y="6.6" width="2" height="5.4" fill="#6f88c0"/><rect x="60" y="7.1" width="2" height="4.9" fill="#6f88c0"/><rect x="62" y="6.4" width="2" height="5.6" fill="#6f88c0"/><rect x="64" y="6.7" width="2" height="5.3" fill="#6f88c0"/><rect x="66" y="5.3" width="2" height="6.7" fill="#6f88c0"/><rect x="68" y="6.1" width="2" height="5.9" fill="#6f88c0"/><rect x="70" y="6.9" width="2" height="5.1" fill="#6f88c0"/><rect x="72" y="6.4" width="2" height="5.6" fill="#6f88c0"/><rect x="74" y="6.3" width="2" height="5.7" fill="#6f88c0"/><rect x="76" y="6.8" width="2" height="5.2" fill="#6f88c0"/><rect x="78" y="5.3" width="2" height="6.7" fill="#6f88c0"/><rect x="80" y="7.8" width="2" height="4.2" fill="#6f88c0"/><rect x="82" y="5.1" width="2" height="6.9" fill="#6f88c0"/><rect x="84" y="6.9" width="2" height="5.1" fill="#6f88c0"/><rect x="86" y="7.0" width="2" height="5.0" fill="#6f88c0"/></svg>
<div class="t" style="left:1341px;top:1001.1px;font-size:10.5px;color:#b0bedc;font-weight:normal;-webkit-text-stroke:0.15px currentColor">Tiptoe_Out_the...</div>
<div style="left:1425px;top:998px;width:338px;height:29px;background:#8f3b5a;border-radius:3px;box-shadow:inset 0 0 0 1px rgba(0,0,0,0.25)"></div>
<svg style="position:absolute;left:1425px;top:1013px;" width="338" height="12" viewBox="0 0 338 12"><rect x="0" y="7.8" width="2" height="4.2" fill="#c47d97"/><rect x="2" y="6.2" width="2" height="5.8" fill="#c47d97"/><rect x="4" y="5.5" width="2" height="6.5" fill="#c47d97"/><rect x="6" y="5.3" width="2" height="6.7" fill="#c47d97"/><rect x="8" y="5.5" width="2" height="6.5" fill="#c47d97"/><rect x="10" y="6.4" width="2" height="5.6" fill="#c47d97"/><rect x="12" y="6.0" width="2" height="6.0" fill="#c47d97"/><rect x="14" y="7.3" width="2" height="4.7" fill="#c47d97"/><rect x="16" y="6.6" width="2" height="5.4" fill="#c47d97"/><rect x="18" y="7.9" width="2" height="4.1" fill="#c47d97"/><rect x="20" y="5.2" width="2" height="6.8" fill="#c47d97"/><rect x="22" y="8.3" width="2" height="3.7" fill="#c47d97"/><rect x="24" y="6.9" width="2" height="5.1" fill="#c47d97"/><rect x="26" y="5.5" width="2" height="6.5" fill="#c47d97"/><rect x="28" y="6.5" width="2" height="5.5" fill="#c47d97"/><rect x="30" y="8.5" width="2" height="3.5" fill="#c47d97"/><rect x="32" y="8.2" width="2" height="3.8" fill="#c47d97"/><rect x="34" y="5.7" width="2" height="6.3" fill="#c47d97"/><rect x="36" y="7.6" width="2" height="4.4" fill="#c47d97"/><rect x="38" y="5.1" width="2" height="6.9" fill="#c47d97"/><rect x="40" y="6.1" width="2" height="5.9" fill="#c47d97"/><rect x="42" y="6.2" width="2" height="5.8" fill="#c47d97"/><rect x="44" y="7.3" width="2" height="4.7" fill="#c47d97"/><rect x="46" y="5.5" width="2" height="6.5" fill="#c47d97"/><rect x="48" y="7.2" width="2" height="4.8" fill="#c47d97"/><rect x="50" y="7.8" width="2" height="4.2" fill="#c47d97"/><rect x="52" y="8.2" width="2" height="3.8" fill="#c47d97"/><rect x="54" y="5.4" width="2" height="6.6" fill="#c47d97"/><rect x="56" y="5.8" width="2" height="6.2" fill="#c47d97"/><rect x="58" y="7.8" width="2" height="4.2" fill="#c47d97"/><rect x="60" y="6.8" width="2" height="5.2" fill="#c47d97"/><rect x="62" y="5.2" width="2" height="6.8" fill="#c47d97"/><rect x="64" y="5.3" width="2" height="6.7" fill="#c47d97"/><rect x="66" y="7.6" width="2" height="4.4" fill="#c47d97"/><rect x="68" y="8.5" width="2" height="3.5" fill="#c47d97"/><rect x="70" y="6.5" width="2" height="5.5" fill="#c47d97"/><rect x="72" y="5.3" width="2" height="6.7" fill="#c47d97"/><rect x="74" y="5.7" width="2" height="6.3" fill="#c47d97"/><rect x="76" y="5.7" width="2" height="6.3" fill="#c47d97"/><rect x="78" y="7.1" width="2" height="4.9" fill="#c47d97"/><rect x="80" y="6.4" width="2" height="5.6" fill="#c47d97"/><rect x="82" y="8.4" width="2" height="3.6" fill="#c47d97"/><rect x="84" y="7.7" width="2" height="4.3" fill="#c47d97"/><rect x="86" y="8.1" width="2" height="3.9" fill="#c47d97"/><rect x="88" y="6.5" width="2" height="5.5" fill="#c47d97"/><rect x="90" y="5.7" width="2" height="6.3" fill="#c47d97"/><rect x="92" y="7.1" width="2" height="4.9" fill="#c47d97"/><rect x="94" y="5.1" width="2" height="6.9" fill="#c47d97"/><rect x="96" y="8.2" width="2" height="3.8" fill="#c47d97"/><rect x="98" y="8.3" width="2" height="3.7" fill="#c47d97"/><rect x="100" y="5.6" width="2" height="6.4" fill="#c47d97"/><rect x="102" y="5.8" width="2" height="6.2" fill="#c47d97"/><rect x="104" y="7.3" width="2" height="4.7" fill="#c47d97"/><rect x="106" y="6.3" width="2" height="5.7" fill="#c47d97"/><rect x="108" y="7.8" width="2" height="4.2" fill="#c47d97"/><rect x="110" y="5.2" width="2" height="6.8" fill="#c47d97"/><rect x="112" y="7.0" width="2" height="5.0" fill="#c47d97"/><rect x="114" y="7.4" width="2" height="4.6" fill="#c47d97"/><rect x="116" y="8.3" width="2" height="3.7" fill="#c47d97"/><rect x="118" y="5.4" width="2" height="6.6" fill="#c47d97"/><rect x="120" y="7.7" width="2" height="4.3" fill="#c47d97"/><rect x="122" y="7.7" width="2" height="4.3" fill="#c47d97"/><rect x="124" y="5.6" width="2" height="6.4" fill="#c47d97"/><rect x="126" y="5.7" width="2" height="6.3" fill="#c47d97"/><rect x="128" y="8.1" width="2" height="3.9" fill="#c47d97"/><rect x="130" y="6.4" width="2" height="5.6" fill="#c47d97"/><rect x="132" y="6.7" width="2" height="5.3" fill="#c47d97"/><rect x="134" y="5.2" width="2" height="6.8" fill="#c47d97"/><rect x="136" y="5.2" width="2" height="6.8" fill="#c47d97"/><rect x="138" y="8.2" width="2" height="3.8" fill="#c47d97"/><rect x="140" y="8.3" width="2" height="3.7" fill="#c47d97"/><rect x="142" y="5.8" width="2" height="6.2" fill="#c47d97"/><rect x="144" y="8.4" width="2" height="3.6" fill="#c47d97"/><rect x="146" y="6.8" width="2" height="5.2" fill="#c47d97"/><rect x="148" y="5.3" width="2" height="6.7" fill="#c47d97"/><rect x="150" y="5.1" width="2" height="6.9" fill="#c47d97"/><rect x="152" y="7.7" width="2" height="4.3" fill="#c47d97"/><rect x="154" y="7.0" width="2" height="5.0" fill="#c47d97"/><rect x="156" y="7.5" width="2" height="4.5" fill="#c47d97"/><rect x="158" y="7.4" width="2" height="4.6" fill="#c47d97"/><rect x="160" y="6.6" width="2" height="5.4" fill="#c47d97"/><rect x="162" y="7.1" width="2" height="4.9" fill="#c47d97"/><rect x="164" y="6.4" width="2" height="5.6" fill="#c47d97"/><rect x="166" y="7.3" width="2" height="4.7" fill="#c47d97"/><rect x="168" y="5.5" width="2" height="6.5" fill="#c47d97"/><rect x="170" y="5.5" width="2" height="6.5" fill="#c47d97"/><rect x="172" y="7.5" width="2" height="4.5" fill="#c47d97"/><rect x="174" y="5.5" width="2" height="6.5" fill="#c47d97"/><rect x="176" y="5.6" width="2" height="6.4" fill="#c47d97"/><rect x="178" y="8.0" width="2" height="4.0" fill="#c47d97"/><rect x="180" y="6.8" width="2" height="5.2" fill="#c47d97"/><rect x="182" y="7.8" width="2" height="4.2" fill="#c47d97"/><rect x="184" y="5.8" width="2" height="6.2" fill="#c47d97"/><rect x="186" y="7.1" width="2" height="4.9" fill="#c47d97"/><rect x="188" y="8.2" width="2" height="3.8" fill="#c47d97"/><rect x="190" y="7.5" width="2" height="4.5" fill="#c47d97"/><rect x="192" y="5.2" width="2" height="6.8" fill="#c47d97"/><rect x="194" y="6.2" width="2" height="5.8" fill="#c47d97"/><rect x="196" y="6.2" width="2" height="5.8" fill="#c47d97"/><rect x="198" y="7.7" width="2" height="4.3" fill="#c47d97"/><rect x="200" y="7.5" width="2" height="4.5" fill="#c47d97"/><rect x="202" y="6.2" width="2" height="5.8" fill="#c47d97"/><rect x="204" y="8.4" width="2" height="3.6" fill="#c47d97"/><rect x="206" y="7.2" width="2" height="4.8" fill="#c47d97"/><rect x="208" y="5.5" width="2" height="6.5" fill="#c47d97"/><rect x="210" y="7.7" width="2" height="4.3" fill="#c47d97"/><rect x="212" y="7.9" width="2" height="4.1" fill="#c47d97"/><rect x="214" y="7.4" width="2" height="4.6" fill="#c47d97"/><rect x="216" y="7.8" width="2" height="4.2" fill="#c47d97"/><rect x="218" y="8.4" width="2" height="3.6" fill="#c47d97"/><rect x="220" y="5.7" width="2" height="6.3" fill="#c47d97"/><rect x="222" y="7.9" width="2" height="4.1" fill="#c47d97"/><rect x="224" y="8.0" width="2" height="4.0" fill="#c47d97"/><rect x="226" y="6.7" width="2" height="5.3" fill="#c47d97"/><rect x="228" y="6.2" width="2" height="5.8" fill="#c47d97"/><rect x="230" y="5.1" width="2" height="6.9" fill="#c47d97"/><rect x="232" y="5.2" width="2" height="6.8" fill="#c47d97"/><rect x="234" y="6.1" width="2" height="5.9" fill="#c47d97"/><rect x="236" y="5.9" width="2" height="6.1" fill="#c47d97"/><rect x="238" y="5.9" width="2" height="6.1" fill="#c47d97"/><rect x="240" y="5.5" width="2" height="6.5" fill="#c47d97"/><rect x="242" y="8.4" width="2" height="3.6" fill="#c47d97"/><rect x="244" y="6.7" width="2" height="5.3" fill="#c47d97"/><rect x="246" y="7.4" width="2" height="4.6" fill="#c47d97"/><rect x="248" y="6.7" width="2" height="5.3" fill="#c47d97"/><rect x="250" y="7.2" width="2" height="4.8" fill="#c47d97"/><rect x="252" y="6.9" width="2" height="5.1" fill="#c47d97"/><rect x="254" y="5.2" width="2" height="6.8" fill="#c47d97"/><rect x="256" y="5.5" width="2" height="6.5" fill="#c47d97"/><rect x="258" y="5.1" width="2" height="6.9" fill="#c47d97"/><rect x="260" y="5.4" width="2" height="6.6" fill="#c47d97"/><rect x="262" y="5.1" width="2" height="6.9" fill="#c47d97"/><rect x="264" y="8.0" width="2" height="4.0" fill="#c47d97"/><rect x="266" y="6.2" width="2" height="5.8" fill="#c47d97"/><rect x="268" y="6.6" width="2" height="5.4" fill="#c47d97"/><rect x="270" y="5.0" width="2" height="7.0" fill="#c47d97"/><rect x="272" y="8.5" width="2" height="3.5" fill="#c47d97"/><rect x="274" y="7.9" width="2" height="4.1" fill="#c47d97"/><rect x="276" y="6.5" width="2" height="5.5" fill="#c47d97"/><rect x="278" y="6.6" width="2" height="5.4" fill="#c47d97"/><rect x="280" y="5.1" width="2" height="6.9" fill="#c47d97"/><rect x="282" y="7.6" width="2" height="4.4" fill="#c47d97"/><rect x="284" y="8.5" width="2" height="3.5" fill="#c47d97"/><rect x="286" y="8.2" width="2" height="3.8" fill="#c47d97"/><rect x="288" y="6.2" width="2" height="5.8" fill="#c47d97"/><rect x="290" y="7.0" width="2" height="5.0" fill="#c47d97"/><rect x="292" y="7.7" width="2" height="4.3" fill="#c47d97"/><rect x="294" y="5.3" width="2" height="6.7" fill="#c47d97"/><rect x="296" y="7.7" width="2" height="4.3" fill="#c47d97"/><rect x="298" y="7.0" width="2" height="5.0" fill="#c47d97"/><rect x="300" y="6.8" width="2" height="5.2" fill="#c47d97"/><rect x="302" y="7.6" width="2" height="4.4" fill="#c47d97"/><rect x="304" y="5.2" width="2" height="6.8" fill="#c47d97"/><rect x="306" y="7.1" width="2" height="4.9" fill="#c47d97"/><rect x="308" y="8.5" width="2" height="3.5" fill="#c47d97"/><rect x="310" y="8.2" width="2" height="3.8" fill="#c47d97"/><rect x="312" y="6.1" width="2" height="5.9" fill="#c47d97"/><rect x="314" y="7.4" width="2" height="4.6" fill="#c47d97"/><rect x="316" y="5.0" width="2" height="7.0" fill="#c47d97"/><rect x="318" y="5.2" width="2" height="6.8" fill="#c47d97"/><rect x="320" y="7.0" width="2" height="5.0" fill="#c47d97"/><rect x="322" y="7.2" width="2" height="4.8" fill="#c47d97"/><rect x="324" y="7.4" width="2" height="4.6" fill="#c47d97"/><rect x="326" y="5.3" width="2" height="6.7" fill="#c47d97"/><rect x="328" y="7.1" width="2" height="4.9" fill="#c47d97"/><rect x="330" y="7.8" width="2" height="4.2" fill="#c47d97"/><rect x="332" y="5.5" width="2" height="6.5" fill="#c47d97"/><rect x="334" y="7.4" width="2" height="4.6" fill="#c47d97"/><rect x="336" y="7.4" width="2" height="4.6" fill="#c47d97"/></svg>
<div class="t" style="left:1429px;top:1001.1px;font-size:10.5px;color:#e0aabd;font-weight:normal;-webkit-text-stroke:0.15px currentColor">Safety_Net</div>
<div style="left:79px;top:1036px;width:14px;height:29px;background:#2a5f6c;border-radius:3px;box-shadow:inset 0 0 0 1px rgba(0,0,0,0.25)"></div>
<svg style="position:absolute;left:79px;top:1051px;" width="14" height="12" viewBox="0 0 14 12"><rect x="0" y="5.4" width="2" height="6.6" fill="#5aa6b0"/><rect x="2" y="6.6" width="2" height="5.4" fill="#5aa6b0"/><rect x="4" y="7.2" width="2" height="4.8" fill="#5aa6b0"/><rect x="6" y="8.3" width="2" height="3.7" fill="#5aa6b0"/><rect x="8" y="5.9" width="2" height="6.1" fill="#5aa6b0"/><rect x="10" y="7.2" width="2" height="4.8" fill="#5aa6b0"/><rect x="12" y="5.3" width="2" height="6.7" fill="#5aa6b0"/></svg>
<div class="t" style="left:83px;top:1039.1px;font-size:10.5px;color:#a9c6cc;font-weight:normal;-webkit-text-stroke:0.15px currentColor">F</div>
<div style="left:406px;top:1036px;width:88px;height:29px;background:#283f6c;border-radius:3px;box-shadow:inset 0 0 0 1px rgba(0,0,0,0.25)"></div>
<svg style="position:absolute;left:406px;top:1051px;" width="88" height="12" viewBox="0 0 88 12"><rect x="0" y="7.5" width="2" height="4.5" fill="#6f88c0"/><rect x="2" y="5.4" width="2" height="6.6" fill="#6f88c0"/><rect x="4" y="6.2" width="2" height="5.8" fill="#6f88c0"/><rect x="6" y="5.0" width="2" height="7.0" fill="#6f88c0"/><rect x="8" y="7.1" width="2" height="4.9" fill="#6f88c0"/><rect x="10" y="6.0" width="2" height="6.0" fill="#6f88c0"/><rect x="12" y="7.3" width="2" height="4.7" fill="#6f88c0"/><rect x="14" y="5.6" width="2" height="6.4" fill="#6f88c0"/><rect x="16" y="6.3" width="2" height="5.7" fill="#6f88c0"/><rect x="18" y="8.0" width="2" height="4.0" fill="#6f88c0"/><rect x="20" y="7.8" width="2" height="4.2" fill="#6f88c0"/><rect x="22" y="7.9" width="2" height="4.1" fill="#6f88c0"/><rect x="24" y="6.1" width="2" height="5.9" fill="#6f88c0"/><rect x="26" y="8.3" width="2" height="3.7" fill="#6f88c0"/><rect x="28" y="6.7" width="2" height="5.3" fill="#6f88c0"/><rect x="30" y="5.6" width="2" height="6.4" fill="#6f88c0"/><rect x="32" y="6.8" width="2" height="5.2" fill="#6f88c0"/><rect x="34" y="5.2" width="2" height="6.8" fill="#6f88c0"/><rect x="36" y="5.0" width="2" height="7.0" fill="#6f88c0"/><rect x="38" y="6.8" width="2" height="5.2" fill="#6f88c0"/><rect x="40" y="5.3" width="2" height="6.7" fill="#6f88c0"/><rect x="42" y="8.3" width="2" height="3.7" fill="#6f88c0"/><rect x="44" y="6.7" width="2" height="5.3" fill="#6f88c0"/><rect x="46" y="5.2" width="2" height="6.8" fill="#6f88c0"/><rect x="48" y="7.0" width="2" height="5.0" fill="#6f88c0"/><rect x="50" y="8.1" width="2" height="3.9" fill="#6f88c0"/><rect x="52" y="5.3" width="2" height="6.7" fill="#6f88c0"/><rect x="54" y="7.9" width="2" height="4.1" fill="#6f88c0"/><rect x="56" y="6.5" width="2" height="5.5" fill="#6f88c0"/><rect x="58" y="5.8" width="2" height="6.2" fill="#6f88c0"/><rect x="60" y="8.3" width="2" height="3.7" fill="#6f88c0"/><rect x="62" y="8.4" width="2" height="3.6" fill="#6f88c0"/><rect x="64" y="6.1" width="2" height="5.9" fill="#6f88c0"/><rect x="66" y="5.1" width="2" height="6.9" fill="#6f88c0"/><rect x="68" y="7.0" width="2" height="5.0" fill="#6f88c0"/><rect x="70" y="6.7" width="2" height="5.3" fill="#6f88c0"/><rect x="72" y="7.4" width="2" height="4.6" fill="#6f88c0"/><rect x="74" y="6.3" width="2" height="5.7" fill="#6f88c0"/><rect x="76" y="5.6" width="2" height="6.4" fill="#6f88c0"/><rect x="78" y="5.4" width="2" height="6.6" fill="#6f88c0"/><rect x="80" y="5.9" width="2" height="6.1" fill="#6f88c0"/><rect x="82" y="6.4" width="2" height="5.6" fill="#6f88c0"/><rect x="84" y="7.4" width="2" height="4.6" fill="#6f88c0"/><rect x="86" y="7.8" width="2" height="4.2" fill="#6f88c0"/></svg>
<div class="t" style="left:410px;top:1039.1px;font-size:10.5px;color:#b0bedc;font-weight:normal;-webkit-text-stroke:0.15px currentColor">Tiptoe_Out_the...</div>
<div style="left:838px;top:1036px;width:26px;height:29px;background:#2a5f6c;border-radius:3px;box-shadow:inset 0 0 0 1px rgba(0,0,0,0.25)"></div>
<svg style="position:absolute;left:838px;top:1051px;" width="26" height="12" viewBox="0 0 26 12"><rect x="0" y="8.0" width="2" height="4.0" fill="#5aa6b0"/><rect x="2" y="6.8" width="2" height="5.2" fill="#5aa6b0"/><rect x="4" y="7.7" width="2" height="4.3" fill="#5aa6b0"/><rect x="6" y="6.6" width="2" height="5.4" fill="#5aa6b0"/><rect x="8" y="6.9" width="2" height="5.1" fill="#5aa6b0"/><rect x="10" y="5.1" width="2" height="6.9" fill="#5aa6b0"/><rect x="12" y="7.6" width="2" height="4.4" fill="#5aa6b0"/><rect x="14" y="5.4" width="2" height="6.6" fill="#5aa6b0"/><rect x="16" y="7.8" width="2" height="4.2" fill="#5aa6b0"/><rect x="18" y="5.9" width="2" height="6.1" fill="#5aa6b0"/><rect x="20" y="7.6" width="2" height="4.4" fill="#5aa6b0"/><rect x="22" y="6.4" width="2" height="5.6" fill="#5aa6b0"/><rect x="24" y="7.1" width="2" height="4.9" fill="#5aa6b0"/></svg>
<div class="t" style="left:842px;top:1039.1px;font-size:10.5px;color:#a9c6cc;font-weight:normal;-webkit-text-stroke:0.15px currentColor">Cr...</div>
<div style="left:941px;top:1036px;width:15px;height:29px;background:#2a5f6c;border-radius:3px;box-shadow:inset 0 0 0 1px rgba(0,0,0,0.25)"></div>
<svg style="position:absolute;left:941px;top:1051px;" width="15" height="12" viewBox="0 0 15 12"><rect x="0" y="6.7" width="2" height="5.3" fill="#5aa6b0"/><rect x="2" y="5.3" width="2" height="6.7" fill="#5aa6b0"/><rect x="4" y="7.6" width="2" height="4.4" fill="#5aa6b0"/><rect x="6" y="7.4" width="2" height="4.6" fill="#5aa6b0"/><rect x="8" y="7.5" width="2" height="4.5" fill="#5aa6b0"/><rect x="10" y="8.3" width="2" height="3.7" fill="#5aa6b0"/><rect x="12" y="7.2" width="2" height="4.8" fill="#5aa6b0"/><rect x="14" y="7.5" width="2" height="4.5" fill="#5aa6b0"/></svg>
<div class="t" style="left:945px;top:1039.1px;font-size:10.5px;color:#a9c6cc;font-weight:normal;-webkit-text-stroke:0.15px currentColor">C</div>
<div style="left:81px;top:1074px;width:87px;height:29px;background:#2a5f6c;border-radius:3px;box-shadow:inset 0 0 0 1px rgba(0,0,0,0.25)"></div>
<svg style="position:absolute;left:81px;top:1089px;" width="87" height="12" viewBox="0 0 87 12"><path d="M1 1 Q43.5 4 69.6 12 L1 12 Z" fill="#5aa6b0"/><rect x="1" y="9" width="85" height="3" fill="#5aa6b0"/></svg>
<div class="t" style="left:85px;top:1077.1px;font-size:10.5px;color:#a9c6cc;font-weight:normal;-webkit-text-stroke:0.15px currentColor">Crowd Applaus...</div>
<div style="left:330px;top:1074px;width:90px;height:29px;background:#2a5f6c;border-radius:3px;box-shadow:inset 0 0 0 1px rgba(0,0,0,0.25)"></div>
<svg style="position:absolute;left:330px;top:1089px;" width="90" height="12" viewBox="0 0 90 12"><rect x="0" y="7.0" width="2" height="5.0" fill="#5aa6b0"/><rect x="2" y="8.3" width="2" height="3.7" fill="#5aa6b0"/><rect x="4" y="7.1" width="2" height="4.9" fill="#5aa6b0"/><rect x="6" y="5.3" width="2" height="6.7" fill="#5aa6b0"/><rect x="8" y="5.9" width="2" height="6.1" fill="#5aa6b0"/><rect x="10" y="7.1" width="2" height="4.9" fill="#5aa6b0"/><rect x="12" y="6.7" width="2" height="5.3" fill="#5aa6b0"/><rect x="14" y="7.1" width="2" height="4.9" fill="#5aa6b0"/><rect x="16" y="6.6" width="2" height="5.4" fill="#5aa6b0"/><rect x="18" y="6.5" width="2" height="5.5" fill="#5aa6b0"/><rect x="20" y="5.8" width="2" height="6.2" fill="#5aa6b0"/><rect x="22" y="5.4" width="2" height="6.6" fill="#5aa6b0"/><rect x="24" y="8.3" width="2" height="3.7" fill="#5aa6b0"/><rect x="26" y="7.1" width="2" height="4.9" fill="#5aa6b0"/><rect x="28" y="8.2" width="2" height="3.8" fill="#5aa6b0"/><rect x="30" y="5.6" width="2" height="6.4" fill="#5aa6b0"/><rect x="32" y="6.0" width="2" height="6.0" fill="#5aa6b0"/><rect x="34" y="6.5" width="2" height="5.5" fill="#5aa6b0"/><rect x="36" y="5.2" width="2" height="6.8" fill="#5aa6b0"/><rect x="38" y="6.1" width="2" height="5.9" fill="#5aa6b0"/><rect x="40" y="5.9" width="2" height="6.1" fill="#5aa6b0"/><rect x="42" y="6.8" width="2" height="5.2" fill="#5aa6b0"/><rect x="44" y="7.5" width="2" height="4.5" fill="#5aa6b0"/><rect x="46" y="7.9" width="2" height="4.1" fill="#5aa6b0"/><rect x="48" y="5.6" width="2" height="6.4" fill="#5aa6b0"/><rect x="50" y="6.5" width="2" height="5.5" fill="#5aa6b0"/><rect x="52" y="6.0" width="2" height="6.0" fill="#5aa6b0"/><rect x="54" y="7.7" width="2" height="4.3" fill="#5aa6b0"/><rect x="56" y="8.1" width="2" height="3.9" fill="#5aa6b0"/><rect x="58" y="7.3" width="2" height="4.7" fill="#5aa6b0"/><rect x="60" y="7.1" width="2" height="4.9" fill="#5aa6b0"/><rect x="62" y="5.7" width="2" height="6.3" fill="#5aa6b0"/><rect x="64" y="6.3" width="2" height="5.7" fill="#5aa6b0"/><rect x="66" y="6.3" width="2" height="5.7" fill="#5aa6b0"/><rect x="68" y="5.8" width="2" height="6.2" fill="#5aa6b0"/><rect x="70" y="7.7" width="2" height="4.3" fill="#5aa6b0"/><rect x="72" y="5.3" width="2" height="6.7" fill="#5aa6b0"/><rect x="74" y="5.4" width="2" height="6.6" fill="#5aa6b0"/><rect x="76" y="8.5" width="2" height="3.5" fill="#5aa6b0"/><rect x="78" y="7.6" width="2" height="4.4" fill="#5aa6b0"/><rect x="80" y="6.7" width="2" height="5.3" fill="#5aa6b0"/><rect x="82" y="7.9" width="2" height="4.1" fill="#5aa6b0"/><rect x="84" y="6.3" width="2" height="5.7" fill="#5aa6b0"/><rect x="86" y="5.5" width="2" height="6.5" fill="#5aa6b0"/><rect x="88" y="8.0" width="2" height="4.0" fill="#5aa6b0"/></svg>
<div class="t" style="left:334px;top:1077.1px;font-size:10.5px;color:#a9c6cc;font-weight:normal;-webkit-text-stroke:0.15px currentColor">Crowd Boo</div>
<div style="left:427px;top:1074px;width:14px;height:29px;background:#2a5f6c;border-radius:3px;box-shadow:inset 0 0 0 1px rgba(0,0,0,0.25)"></div>
<svg style="position:absolute;left:427px;top:1089px;" width="14" height="12" viewBox="0 0 14 12"><rect x="0" y="7.4" width="2" height="4.6" fill="#5aa6b0"/><rect x="2" y="7.1" width="2" height="4.9" fill="#5aa6b0"/><rect x="4" y="5.3" width="2" height="6.7" fill="#5aa6b0"/><rect x="6" y="5.2" width="2" height="6.8" fill="#5aa6b0"/><rect x="8" y="7.0" width="2" height="5.0" fill="#5aa6b0"/><rect x="10" y="6.1" width="2" height="5.9" fill="#5aa6b0"/><rect x="12" y="8.4" width="2" height="3.6" fill="#5aa6b0"/></svg>
<div class="t" style="left:431px;top:1077.1px;font-size:10.5px;color:#a9c6cc;font-weight:normal;-webkit-text-stroke:0.15px currentColor">F</div>
<div style="left:451px;top:1074px;width:37px;height:29px;background:#2a5f6c;border-radius:3px;box-shadow:inset 0 0 0 1px rgba(0,0,0,0.25)"></div>
<svg style="position:absolute;left:451px;top:1089px;" width="37" height="12" viewBox="0 0 37 12"><rect x="0" y="6.0" width="2" height="6.0" fill="#5aa6b0"/><rect x="2" y="6.3" width="2" height="5.7" fill="#5aa6b0"/><rect x="4" y="5.1" width="2" height="6.9" fill="#5aa6b0"/><rect x="6" y="8.0" width="2" height="4.0" fill="#5aa6b0"/><rect x="8" y="6.3" width="2" height="5.7" fill="#5aa6b0"/><rect x="10" y="8.2" width="2" height="3.8" fill="#5aa6b0"/><rect x="12" y="6.2" width="2" height="5.8" fill="#5aa6b0"/><rect x="14" y="7.0" width="2" height="5.0" fill="#5aa6b0"/><rect x="16" y="5.3" width="2" height="6.7" fill="#5aa6b0"/><rect x="18" y="6.0" width="2" height="6.0" fill="#5aa6b0"/><rect x="20" y="6.4" width="2" height="5.6" fill="#5aa6b0"/><rect x="22" y="5.9" width="2" height="6.1" fill="#5aa6b0"/><rect x="24" y="8.4" width="2" height="3.6" fill="#5aa6b0"/><rect x="26" y="6.3" width="2" height="5.7" fill="#5aa6b0"/><rect x="28" y="8.1" width="2" height="3.9" fill="#5aa6b0"/><rect x="30" y="7.5" width="2" height="4.5" fill="#5aa6b0"/><rect x="32" y="6.4" width="2" height="5.6" fill="#5aa6b0"/><rect x="34" y="5.3" width="2" height="6.7" fill="#5aa6b0"/><rect x="36" y="6.3" width="2" height="5.7" fill="#5aa6b0"/></svg>
<div class="t" style="left:455px;top:1077.1px;font-size:10.5px;color:#a9c6cc;font-weight:normal;-webkit-text-stroke:0.15px currentColor">Cro...</div>
<div style="left:489px;top:1074px;width:107px;height:29px;background:#4f7429;border-radius:3px;box-shadow:inset 0 0 0 1px rgba(0,0,0,0.25)"></div>
<svg style="position:absolute;left:489px;top:1089px;" width="107" height="12" viewBox="0 0 107 12"><path d="M1 1 Q53.5 4 85.6 12 L1 12 Z" fill="#8db455"/><rect x="1" y="9" width="105" height="3" fill="#8db455"/></svg>
<div class="t" style="left:493px;top:1077.1px;font-size:10.5px;color:#b8cc90;font-weight:normal;-webkit-text-stroke:0.15px currentColor">Sound_00566</div>
<div style="left:820px;top:1074px;width:44px;height:29px;background:#4f7429;border-radius:3px;box-shadow:inset 0 0 0 1px rgba(0,0,0,0.25)"></div>
<svg style="position:absolute;left:820px;top:1089px;" width="44" height="12" viewBox="0 0 44 12"><path d="M1 1 Q22.0 4 35.2 12 L1 12 Z" fill="#8db455"/><rect x="1" y="9" width="42" height="3" fill="#8db455"/></svg>
<div class="t" style="left:824px;top:1077.1px;font-size:10.5px;color:#b8cc90;font-weight:normal;-webkit-text-stroke:0.15px currentColor">zvuk-...</div>
<div style="left:1242px;top:1074px;width:68px;height:29px;background:#2a5f6c;border-radius:3px;box-shadow:inset 0 0 0 1px rgba(0,0,0,0.25)"></div>
<svg style="position:absolute;left:1242px;top:1089px;" width="68" height="12" viewBox="0 0 68 12"><rect x="0" y="6.6" width="2" height="5.4" fill="#5aa6b0"/><rect x="2" y="8.4" width="2" height="3.6" fill="#5aa6b0"/><rect x="4" y="6.3" width="2" height="5.7" fill="#5aa6b0"/><rect x="6" y="6.7" width="2" height="5.3" fill="#5aa6b0"/><rect x="8" y="8.1" width="2" height="3.9" fill="#5aa6b0"/><rect x="10" y="6.6" width="2" height="5.4" fill="#5aa6b0"/><rect x="12" y="7.7" width="2" height="4.3" fill="#5aa6b0"/><rect x="14" y="8.4" width="2" height="3.6" fill="#5aa6b0"/><rect x="16" y="5.5" width="2" height="6.5" fill="#5aa6b0"/><rect x="18" y="7.0" width="2" height="5.0" fill="#5aa6b0"/><rect x="20" y="6.7" width="2" height="5.3" fill="#5aa6b0"/><rect x="22" y="6.9" width="2" height="5.1" fill="#5aa6b0"/><rect x="24" y="6.3" width="2" height="5.7" fill="#5aa6b0"/><rect x="26" y="5.8" width="2" height="6.2" fill="#5aa6b0"/><rect x="28" y="8.2" width="2" height="3.8" fill="#5aa6b0"/><rect x="30" y="7.9" width="2" height="4.1" fill="#5aa6b0"/><rect x="32" y="7.8" width="2" height="4.2" fill="#5aa6b0"/><rect x="34" y="7.0" width="2" height="5.0" fill="#5aa6b0"/><rect x="36" y="6.4" width="2" height="5.6" fill="#5aa6b0"/><rect x="38" y="7.3" width="2" height="4.7" fill="#5aa6b0"/><rect x="40" y="5.2" width="2" height="6.8" fill="#5aa6b0"/><rect x="42" y="6.8" width="2" height="5.2" fill="#5aa6b0"/><rect x="44" y="6.9" width="2" height="5.1" fill="#5aa6b0"/><rect x="46" y="7.5" width="2" height="4.5" fill="#5aa6b0"/><rect x="48" y="6.5" width="2" height="5.5" fill="#5aa6b0"/><rect x="50" y="7.9" width="2" height="4.1" fill="#5aa6b0"/><rect x="52" y="7.7" width="2" height="4.3" fill="#5aa6b0"/><rect x="54" y="7.4" width="2" height="4.6" fill="#5aa6b0"/><rect x="56" y="6.4" width="2" height="5.6" fill="#5aa6b0"/><rect x="58" y="5.4" width="2" height="6.6" fill="#5aa6b0"/><rect x="60" y="6.9" width="2" height="5.1" fill="#5aa6b0"/><rect x="62" y="7.6" width="2" height="4.4" fill="#5aa6b0"/><rect x="64" y="7.6" width="2" height="4.4" fill="#5aa6b0"/><rect x="66" y="7.8" width="2" height="4.2" fill="#5aa6b0"/></svg>
<div class="t" style="left:1246px;top:1077.1px;font-size:10.5px;color:#a9c6cc;font-weight:normal;-webkit-text-stroke:0.15px currentColor">Crowd Boo</div>
<div style="left:344px;top:1112px;width:33px;height:29px;background:#4f7429;border-radius:3px;box-shadow:inset 0 0 0 1px rgba(0,0,0,0.25)"></div>
<svg style="position:absolute;left:344px;top:1127px;" width="33" height="12" viewBox="0 0 33 12"><path d="M1 1 Q16.5 4 26.4 12 L1 12 Z" fill="#8db455"/><rect x="1" y="9" width="31" height="3" fill="#8db455"/></svg>
<div class="t" style="left:348px;top:1115.1px;font-size:10.5px;color:#b8cc90;font-weight:normal;-webkit-text-stroke:0.15px currentColor">YZA...</div>
<div style="left:420px;top:1112px;width:23px;height:29px;background:#4f7429;border-radius:3px;box-shadow:inset 0 0 0 1px rgba(0,0,0,0.25)"></div>
<svg style="position:absolute;left:420px;top:1127px;" width="23" height="12" viewBox="0 0 23 12"><path d="M1 1 Q11.5 4 18.4 12 L1 12 Z" fill="#8db455"/><rect x="1" y="9" width="21" height="3" fill="#8db455"/></svg>
<div class="t" style="left:424px;top:1115.1px;font-size:10.5px;color:#b8cc90;font-weight:normal;-webkit-text-stroke:0.15px currentColor">U...</div>
<div style="left:496px;top:1112px;width:347px;height:29px;background:#8f3b5a;border-radius:3px;box-shadow:inset 0 0 0 1px rgba(0,0,0,0.25)"></div>
<svg style="position:absolute;left:496px;top:1127px;" width="347" height="12" viewBox="0 0 347 12"><rect x="0" y="5.6" width="2" height="6.4" fill="#c47d97"/><rect x="2" y="5.5" width="2" height="6.5" fill="#c47d97"/><rect x="4" y="6.6" width="2" height="5.4" fill="#c47d97"/><rect x="6" y="7.6" width="2" height="4.4" fill="#c47d97"/><rect x="8" y="6.3" width="2" height="5.7" fill="#c47d97"/><rect x="10" y="5.1" width="2" height="6.9" fill="#c47d97"/><rect x="12" y="6.8" width="2" height="5.2" fill="#c47d97"/><rect x="14" y="8.3" width="2" height="3.7" fill="#c47d97"/><rect x="16" y="7.6" width="2" height="4.4" fill="#c47d97"/><rect x="18" y="6.8" width="2" height="5.2" fill="#c47d97"/><rect x="20" y="5.3" width="2" height="6.7" fill="#c47d97"/><rect x="22" y="7.9" width="2" height="4.1" fill="#c47d97"/><rect x="24" y="5.6" width="2" height="6.4" fill="#c47d97"/><rect x="26" y="5.9" width="2" height="6.1" fill="#c47d97"/><rect x="28" y="6.1" width="2" height="5.9" fill="#c47d97"/><rect x="30" y="6.6" width="2" height="5.4" fill="#c47d97"/><rect x="32" y="8.3" width="2" height="3.7" fill="#c47d97"/><rect x="34" y="5.6" width="2" height="6.4" fill="#c47d97"/><rect x="36" y="6.9" width="2" height="5.1" fill="#c47d97"/><rect x="38" y="7.8" width="2" height="4.2" fill="#c47d97"/><rect x="40" y="5.3" width="2" height="6.7" fill="#c47d97"/><rect x="42" y="7.0" width="2" height="5.0" fill="#c47d97"/><rect x="44" y="5.0" width="2" height="7.0" fill="#c47d97"/><rect x="46" y="5.6" width="2" height="6.4" fill="#c47d97"/><rect x="48" y="7.5" width="2" height="4.5" fill="#c47d97"/><rect x="50" y="7.3" width="2" height="4.7" fill="#c47d97"/><rect x="52" y="7.2" width="2" height="4.8" fill="#c47d97"/><rect x="54" y="7.1" width="2" height="4.9" fill="#c47d97"/><rect x="56" y="8.1" width="2" height="3.9" fill="#c47d97"/><rect x="58" y="7.7" width="2" height="4.3" fill="#c47d97"/><rect x="60" y="5.1" width="2" height="6.9" fill="#c47d97"/><rect x="62" y="7.0" width="2" height="5.0" fill="#c47d97"/><rect x="64" y="8.1" width="2" height="3.9" fill="#c47d97"/><rect x="66" y="6.6" width="2" height="5.4" fill="#c47d97"/><rect x="68" y="6.9" width="2" height="5.1" fill="#c47d97"/><rect x="70" y="7.5" width="2" height="4.5" fill="#c47d97"/><rect x="72" y="8.0" width="2" height="4.0" fill="#c47d97"/><rect x="74" y="8.5" width="2" height="3.5" fill="#c47d97"/><rect x="76" y="6.6" width="2" height="5.4" fill="#c47d97"/><rect x="78" y="5.4" width="2" height="6.6" fill="#c47d97"/><rect x="80" y="7.8" width="2" height="4.2" fill="#c47d97"/><rect x="82" y="7.9" width="2" height="4.1" fill="#c47d97"/><rect x="84" y="5.7" width="2" height="6.3" fill="#c47d97"/><rect x="86" y="7.1" width="2" height="4.9" fill="#c47d97"/><rect x="88" y="6.5" width="2" height="5.5" fill="#c47d97"/><rect x="90" y="7.2" width="2" height="4.8" fill="#c47d97"/><rect x="92" y="5.6" width="2" height="6.4" fill="#c47d97"/><rect x="94" y="8.3" width="2" height="3.7" fill="#c47d97"/><rect x="96" y="8.2" width="2" height="3.8" fill="#c47d97"/><rect x="98" y="7.9" width="2" height="4.1" fill="#c47d97"/><rect x="100" y="6.5" width="2" height="5.5" fill="#c47d97"/><rect x="102" y="6.1" width="2" height="5.9" fill="#c47d97"/><rect x="104" y="6.5" width="2" height="5.5" fill="#c47d97"/><rect x="106" y="6.3" width="2" height="5.7" fill="#c47d97"/><rect x="108" y="5.2" width="2" height="6.8" fill="#c47d97"/><rect x="110" y="7.1" width="2" height="4.9" fill="#c47d97"/><rect x="112" y="7.6" width="2" height="4.4" fill="#c47d97"/><rect x="114" y="7.9" width="2" height="4.1" fill="#c47d97"/><rect x="116" y="7.0" width="2" height="5.0" fill="#c47d97"/><rect x="118" y="6.3" width="2" height="5.7" fill="#c47d97"/><rect x="120" y="6.1" width="2" height="5.9" fill="#c47d97"/><rect x="122" y="5.3" width="2" height="6.7" fill="#c47d97"/><rect x="124" y="8.1" width="2" height="3.9" fill="#c47d97"/><rect x="126" y="8.5" width="2" height="3.5" fill="#c47d97"/><rect x="128" y="5.2" width="2" height="6.8" fill="#c47d97"/><rect x="130" y="7.5" width="2" height="4.5" fill="#c47d97"/><rect x="132" y="6.3" width="2" height="5.7" fill="#c47d97"/><rect x="134" y="8.2" width="2" height="3.8" fill="#c47d97"/><rect x="136" y="5.2" width="2" height="6.8" fill="#c47d97"/><rect x="138" y="7.0" width="2" height="5.0" fill="#c47d97"/><rect x="140" y="6.5" width="2" height="5.5" fill="#c47d97"/><rect x="142" y="6.0" width="2" height="6.0" fill="#c47d97"/><rect x="144" y="8.1" width="2" height="3.9" fill="#c47d97"/><rect x="146" y="7.1" width="2" height="4.9" fill="#c47d97"/><rect x="148" y="5.7" width="2" height="6.3" fill="#c47d97"/><rect x="150" y="7.8" width="2" height="4.2" fill="#c47d97"/><rect x="152" y="8.2" width="2" height="3.8" fill="#c47d97"/><rect x="154" y="8.4" width="2" height="3.6" fill="#c47d97"/><rect x="156" y="5.9" width="2" height="6.1" fill="#c47d97"/><rect x="158" y="6.6" width="2" height="5.4" fill="#c47d97"/><rect x="160" y="8.3" width="2" height="3.7" fill="#c47d97"/><rect x="162" y="5.9" width="2" height="6.1" fill="#c47d97"/><rect x="164" y="7.5" width="2" height="4.5" fill="#c47d97"/><rect x="166" y="6.0" width="2" height="6.0" fill="#c47d97"/><rect x="168" y="8.4" width="2" height="3.6" fill="#c47d97"/><rect x="170" y="6.5" width="2" height="5.5" fill="#c47d97"/><rect x="172" y="6.1" width="2" height="5.9" fill="#c47d97"/><rect x="174" y="7.9" width="2" height="4.1" fill="#c47d97"/><rect x="176" y="5.2" width="2" height="6.8" fill="#c47d97"/><rect x="178" y="8.4" width="2" height="3.6" fill="#c47d97"/><rect x="180" y="7.0" width="2" height="5.0" fill="#c47d97"/><rect x="182" y="8.4" width="2" height="3.6" fill="#c47d97"/><rect x="184" y="7.1" width="2" height="4.9" fill="#c47d97"/><rect x="186" y="5.1" width="2" height="6.9" fill="#c47d97"/><rect x="188" y="7.3" width="2" height="4.7" fill="#c47d97"/><rect x="190" y="7.7" width="2" height="4.3" fill="#c47d97"/><rect x="192" y="6.4" width="2" height="5.6" fill="#c47d97"/><rect x="194" y="6.7" width="2" height="5.3" fill="#c47d97"/><rect x="196" y="7.3" width="2" height="4.7" fill="#c47d97"/><rect x="198" y="5.7" width="2" height="6.3" fill="#c47d97"/><rect x="200" y="6.4" width="2" height="5.6" fill="#c47d97"/><rect x="202" y="6.6" width="2" height="5.4" fill="#c47d97"/><rect x="204" y="7.9" width="2" height="4.1" fill="#c47d97"/><rect x="206" y="7.4" width="2" height="4.6" fill="#c47d97"/><rect x="208" y="7.9" width="2" height="4.1" fill="#c47d97"/><rect x="210" y="8.4" width="2" height="3.6" fill="#c47d97"/><rect x="212" y="6.8" width="2" height="5.2" fill="#c47d97"/><rect x="214" y="8.0" width="2" height="4.0" fill="#c47d97"/><rect x="216" y="6.9" width="2" height="5.1" fill="#c47d97"/><rect x="218" y="7.7" width="2" height="4.3" fill="#c47d97"/><rect x="220" y="6.3" width="2" height="5.7" fill="#c47d97"/><rect x="222" y="6.6" width="2" height="5.4" fill="#c47d97"/><rect x="224" y="6.6" width="2" height="5.4" fill="#c47d97"/><rect x="226" y="8.3" width="2" height="3.7" fill="#c47d97"/><rect x="228" y="5.1" width="2" height="6.9" fill="#c47d97"/><rect x="230" y="7.8" width="2" height="4.2" fill="#c47d97"/><rect x="232" y="7.5" width="2" height="4.5" fill="#c47d97"/><rect x="234" y="6.0" width="2" height="6.0" fill="#c47d97"/><rect x="236" y="7.8" width="2" height="4.2" fill="#c47d97"/><rect x="238" y="8.4" width="2" height="3.6" fill="#c47d97"/><rect x="240" y="7.5" width="2" height="4.5" fill="#c47d97"/><rect x="242" y="8.3" width="2" height="3.7" fill="#c47d97"/><rect x="244" y="7.1" width="2" height="4.9" fill="#c47d97"/><rect x="246" y="8.2" width="2" height="3.8" fill="#c47d97"/><rect x="248" y="7.9" width="2" height="4.1" fill="#c47d97"/><rect x="250" y="6.7" width="2" height="5.3" fill="#c47d97"/><rect x="252" y="8.3" width="2" height="3.7" fill="#c47d97"/><rect x="254" y="5.8" width="2" height="6.2" fill="#c47d97"/><rect x="256" y="5.7" width="2" height="6.3" fill="#c47d97"/><rect x="258" y="6.0" width="2" height="6.0" fill="#c47d97"/><rect x="260" y="5.5" width="2" height="6.5" fill="#c47d97"/><rect x="262" y="8.1" width="2" height="3.9" fill="#c47d97"/><rect x="264" y="5.2" width="2" height="6.8" fill="#c47d97"/><rect x="266" y="8.0" width="2" height="4.0" fill="#c47d97"/><rect x="268" y="7.3" width="2" height="4.7" fill="#c47d97"/><rect x="270" y="8.1" width="2" height="3.9" fill="#c47d97"/><rect x="272" y="5.5" width="2" height="6.5" fill="#c47d97"/><rect x="274" y="5.9" width="2" height="6.1" fill="#c47d97"/><rect x="276" y="5.9" width="2" height="6.1" fill="#c47d97"/><rect x="278" y="6.1" width="2" height="5.9" fill="#c47d97"/><rect x="280" y="6.0" width="2" height="6.0" fill="#c47d97"/><rect x="282" y="6.6" width="2" height="5.4" fill="#c47d97"/><rect x="284" y="6.2" width="2" height="5.8" fill="#c47d97"/><rect x="286" y="6.9" width="2" height="5.1" fill="#c47d97"/><rect x="288" y="5.1" width="2" height="6.9" fill="#c47d97"/><rect x="290" y="7.5" width="2" height="4.5" fill="#c47d97"/><rect x="292" y="7.1" width="2" height="4.9" fill="#c47d97"/><rect x="294" y="5.5" width="2" height="6.5" fill="#c47d97"/><rect x="296" y="7.0" width="2" height="5.0" fill="#c47d97"/><rect x="298" y="6.2" width="2" height="5.8" fill="#c47d97"/><rect x="300" y="6.7" width="2" height="5.3" fill="#c47d97"/><rect x="302" y="5.7" width="2" height="6.3" fill="#c47d97"/><rect x="304" y="6.6" width="2" height="5.4" fill="#c47d97"/><rect x="306" y="8.5" width="2" height="3.5" fill="#c47d97"/><rect x="308" y="8.0" width="2" height="4.0" fill="#c47d97"/><rect x="310" y="7.1" width="2" height="4.9" fill="#c47d97"/><rect x="312" y="6.0" width="2" height="6.0" fill="#c47d97"/><rect x="314" y="5.2" width="2" height="6.8" fill="#c47d97"/><rect x="316" y="7.2" width="2" height="4.8" fill="#c47d97"/><rect x="318" y="7.6" width="2" height="4.4" fill="#c47d97"/><rect x="320" y="7.7" width="2" height="4.3" fill="#c47d97"/><rect x="322" y="5.5" width="2" height="6.5" fill="#c47d97"/><rect x="324" y="5.9" width="2" height="6.1" fill="#c47d97"/><rect x="326" y="6.5" width="2" height="5.5" fill="#c47d97"/><rect x="328" y="7.2" width="2" height="4.8" fill="#c47d97"/><rect x="330" y="5.8" width="2" height="6.2" fill="#c47d97"/><rect x="332" y="5.9" width="2" height="6.1" fill="#c47d97"/><rect x="334" y="5.8" width="2" height="6.2" fill="#c47d97"/><rect x="336" y="7.7" width="2" height="4.3" fill="#c47d97"/><rect x="338" y="6.7" width="2" height="5.3" fill="#c47d97"/><rect x="340" y="5.9" width="2" height="6.1" fill="#c47d97"/><rect x="342" y="5.3" width="2" height="6.7" fill="#c47d97"/><rect x="344" y="6.9" width="2" height="5.1" fill="#c47d97"/><rect x="346" y="6.5" width="2" height="5.5" fill="#c47d97"/></svg>
<div class="t" style="left:500px;top:1115.1px;font-size:10.5px;color:#e0aabd;font-weight:normal;-webkit-text-stroke:0.15px currentColor">Marvin_s_Dance</div>
<div style="left:1014px;top:1112px;width:230px;height:29px;background:#8f3b5a;border-radius:3px;box-shadow:inset 0 0 0 1px rgba(0,0,0,0.25)"></div>
<svg style="position:absolute;left:1014px;top:1127px;" width="230" height="12" viewBox="0 0 230 12"><rect x="0" y="6.6" width="2" height="5.4" fill="#c47d97"/><rect x="2" y="7.0" width="2" height="5.0" fill="#c47d97"/><rect x="4" y="7.4" width="2" height="4.6" fill="#c47d97"/><rect x="6" y="8.3" width="2" height="3.7" fill="#c47d97"/><rect x="8" y="5.8" width="2" height="6.2" fill="#c47d97"/><rect x="10" y="5.1" width="2" height="6.9" fill="#c47d97"/><rect x="12" y="7.1" width="2" height="4.9" fill="#c47d97"/><rect x="14" y="6.3" width="2" height="5.7" fill="#c47d97"/><rect x="16" y="5.7" width="2" height="6.3" fill="#c47d97"/><rect x="18" y="5.5" width="2" height="6.5" fill="#c47d97"/><rect x="20" y="5.8" width="2" height="6.2" fill="#c47d97"/><rect x="22" y="7.4" width="2" height="4.6" fill="#c47d97"/><rect x="24" y="6.3" width="2" height="5.7" fill="#c47d97"/><rect x="26" y="6.6" width="2" height="5.4" fill="#c47d97"/><rect x="28" y="6.7" width="2" height="5.3" fill="#c47d97"/><rect x="30" y="8.4" width="2" height="3.6" fill="#c47d97"/><rect x="32" y="5.9" width="2" height="6.1" fill="#c47d97"/><rect x="34" y="7.6" width="2" height="4.4" fill="#c47d97"/><rect x="36" y="5.3" width="2" height="6.7" fill="#c47d97"/><rect x="38" y="5.4" width="2" height="6.6" fill="#c47d97"/><rect x="40" y="7.2" width="2" height="4.8" fill="#c47d97"/><rect x="42" y="7.1" width="2" height="4.9" fill="#c47d97"/><rect x="44" y="8.3" width="2" height="3.7" fill="#c47d97"/><rect x="46" y="7.0" width="2" height="5.0" fill="#c47d97"/><rect x="48" y="7.0" width="2" height="5.0" fill="#c47d97"/><rect x="50" y="8.5" width="2" height="3.5" fill="#c47d97"/><rect x="52" y="7.7" width="2" height="4.3" fill="#c47d97"/><rect x="54" y="6.8" width="2" height="5.2" fill="#c47d97"/><rect x="56" y="8.3" width="2" height="3.7" fill="#c47d97"/><rect x="58" y="8.1" width="2" height="3.9" fill="#c47d97"/><rect x="60" y="8.1" width="2" height="3.9" fill="#c47d97"/><rect x="62" y="7.1" width="2" height="4.9" fill="#c47d97"/><rect x="64" y="5.0" width="2" height="7.0" fill="#c47d97"/><rect x="66" y="7.5" width="2" height="4.5" fill="#c47d97"/><rect x="68" y="8.4" width="2" height="3.6" fill="#c47d97"/><rect x="70" y="5.1" width="2" height="6.9" fill="#c47d97"/><rect x="72" y="6.3" width="2" height="5.7" fill="#c47d97"/><rect x="74" y="7.0" width="2" height="5.0" fill="#c47d97"/><rect x="76" y="7.6" width="2" height="4.4" fill="#c47d97"/><rect x="78" y="5.2" width="2" height="6.8" fill="#c47d97"/><rect x="80" y="7.0" width="2" height="5.0" fill="#c47d97"/><rect x="82" y="8.4" width="2" height="3.6" fill="#c47d97"/><rect x="84" y="5.9" width="2" height="6.1" fill="#c47d97"/><rect x="86" y="7.0" width="2" height="5.0" fill="#c47d97"/><rect x="88" y="6.1" width="2" height="5.9" fill="#c47d97"/><rect x="90" y="6.1" width="2" height="5.9" fill="#c47d97"/><rect x="92" y="7.4" width="2" height="4.6" fill="#c47d97"/><rect x="94" y="7.0" width="2" height="5.0" fill="#c47d97"/><rect x="96" y="8.2" width="2" height="3.8" fill="#c47d97"/><rect x="98" y="8.1" width="2" height="3.9" fill="#c47d97"/><rect x="100" y="7.9" width="2" height="4.1" fill="#c47d97"/><rect x="102" y="5.8" width="2" height="6.2" fill="#c47d97"/><rect x="104" y="7.1" width="2" height="4.9" fill="#c47d97"/><rect x="106" y="5.8" width="2" height="6.2" fill="#c47d97"/><rect x="108" y="5.1" width="2" height="6.9" fill="#c47d97"/><rect x="110" y="5.8" width="2" height="6.2" fill="#c47d97"/><rect x="112" y="8.1" width="2" height="3.9" fill="#c47d97"/><rect x="114" y="7.6" width="2" height="4.4" fill="#c47d97"/><rect x="116" y="7.0" width="2" height="5.0" fill="#c47d97"/><rect x="118" y="7.9" width="2" height="4.1" fill="#c47d97"/><rect x="120" y="7.8" width="2" height="4.2" fill="#c47d97"/><rect x="122" y="8.0" width="2" height="4.0" fill="#c47d97"/><rect x="124" y="8.2" width="2" height="3.8" fill="#c47d97"/><rect x="126" y="8.1" width="2" height="3.9" fill="#c47d97"/><rect x="128" y="8.2" width="2" height="3.8" fill="#c47d97"/><rect x="130" y="6.6" width="2" height="5.4" fill="#c47d97"/><rect x="132" y="5.3" width="2" height="6.7" fill="#c47d97"/><rect x="134" y="6.3" width="2" height="5.7" fill="#c47d97"/><rect x="136" y="7.0" width="2" height="5.0" fill="#c47d97"/><rect x="138" y="5.7" width="2" height="6.3" fill="#c47d97"/><rect x="140" y="8.0" width="2" height="4.0" fill="#c47d97"/><rect x="142" y="5.9" width="2" height="6.1" fill="#c47d97"/><rect x="144" y="6.2" width="2" height="5.8" fill="#c47d97"/><rect x="146" y="7.8" width="2" height="4.2" fill="#c47d97"/><rect x="148" y="6.6" width="2" height="5.4" fill="#c47d97"/><rect x="150" y="5.5" width="2" height="6.5" fill="#c47d97"/><rect x="152" y="7.3" width="2" height="4.7" fill="#c47d97"/><rect x="154" y="7.4" width="2" height="4.6" fill="#c47d97"/><rect x="156" y="6.7" width="2" height="5.3" fill="#c47d97"/><rect x="158" y="8.1" width="2" height="3.9" fill="#c47d97"/><rect x="160" y="6.8" width="2" height="5.2" fill="#c47d97"/><rect x="162" y="7.1" width="2" height="4.9" fill="#c47d97"/><rect x="164" y="5.5" width="2" height="6.5" fill="#c47d97"/><rect x="166" y="6.3" width="2" height="5.7" fill="#c47d97"/><rect x="168" y="6.6" width="2" height="5.4" fill="#c47d97"/><rect x="170" y="7.0" width="2" height="5.0" fill="#c47d97"/><rect x="172" y="7.7" width="2" height="4.3" fill="#c47d97"/><rect x="174" y="8.0" width="2" height="4.0" fill="#c47d97"/><rect x="176" y="6.1" width="2" height="5.9" fill="#c47d97"/><rect x="178" y="6.9" width="2" height="5.1" fill="#c47d97"/><rect x="180" y="7.5" width="2" height="4.5" fill="#c47d97"/><rect x="182" y="7.7" width="2" height="4.3" fill="#c47d97"/><rect x="184" y="6.0" width="2" height="6.0" fill="#c47d97"/><rect x="186" y="6.5" width="2" height="5.5" fill="#c47d97"/><rect x="188" y="7.8" width="2" height="4.2" fill="#c47d97"/><rect x="190" y="5.1" width="2" height="6.9" fill="#c47d97"/><rect x="192" y="5.2" width="2" height="6.8" fill="#c47d97"/><rect x="194" y="6.0" width="2" height="6.0" fill="#c47d97"/><rect x="196" y="5.8" width="2" height="6.2" fill="#c47d97"/><rect x="198" y="7.9" width="2" height="4.1" fill="#c47d97"/><rect x="200" y="7.8" width="2" height="4.2" fill="#c47d97"/><rect x="202" y="6.1" width="2" height="5.9" fill="#c47d97"/><rect x="204" y="7.5" width="2" height="4.5" fill="#c47d97"/><rect x="206" y="8.5" width="2" height="3.5" fill="#c47d97"/><rect x="208" y="7.4" width="2" height="4.6" fill="#c47d97"/><rect x="210" y="6.2" width="2" height="5.8" fill="#c47d97"/><rect x="212" y="6.1" width="2" height="5.9" fill="#c47d97"/><rect x="214" y="7.1" width="2" height="4.9" fill="#c47d97"/><rect x="216" y="6.1" width="2" height="5.9" fill="#c47d97"/><rect x="218" y="6.2" width="2" height="5.8" fill="#c47d97"/><rect x="220" y="5.7" width="2" height="6.3" fill="#c47d97"/><rect x="222" y="6.4" width="2" height="5.6" fill="#c47d97"/><rect x="224" y="5.8" width="2" height="6.2" fill="#c47d97"/><rect x="226" y="8.3" width="2" height="3.7" fill="#c47d97"/><rect x="228" y="7.9" width="2" height="4.1" fill="#c47d97"/></svg>
<div class="t" style="left:1018px;top:1115.1px;font-size:10.5px;color:#e0aabd;font-weight:normal;-webkit-text-stroke:0.15px currentColor">Robot_Boogie</div>
<div style="left:330px;top:1150px;width:16px;height:29px;background:#4f7429;border-radius:3px;box-shadow:inset 0 0 0 1px rgba(0,0,0,0.25)"></div>
<svg style="position:absolute;left:330px;top:1165px;" width="16" height="12" viewBox="0 0 16 12"><path d="M1 1 Q8.0 4 12.8 12 L1 12 Z" fill="#8db455"/><rect x="1" y="9" width="14" height="3" fill="#8db455"/></svg>
<div style="left:409px;top:998px;width:2px;height:29px;background:#213a62"></div>
<div style="left:848px;top:998px;width:2px;height:29px;background:#213a62"></div>
<div style="left:1233px;top:998px;width:2px;height:29px;background:#213a62"></div>
<div style="left:1264px;top:1036px;width:2px;height:29px;background:#213a62"></div>
<div style="left:40px;top:641px;width:2px;height:545px;background:#6a6a6a"></div>
<svg style="position:absolute;left:34px;top:640px;" width="14" height="16" viewBox="0 0 14 16"><path d="M2 1 H12 V9 L7 14 L2 9 Z" fill="#3a3a3a" stroke="#9a9a9a" stroke-width="1.2"/></svg>
<div style="left:0px;top:1185px;width:1918px;height:1px;background:#0a0a0a"></div>
</body></html>
